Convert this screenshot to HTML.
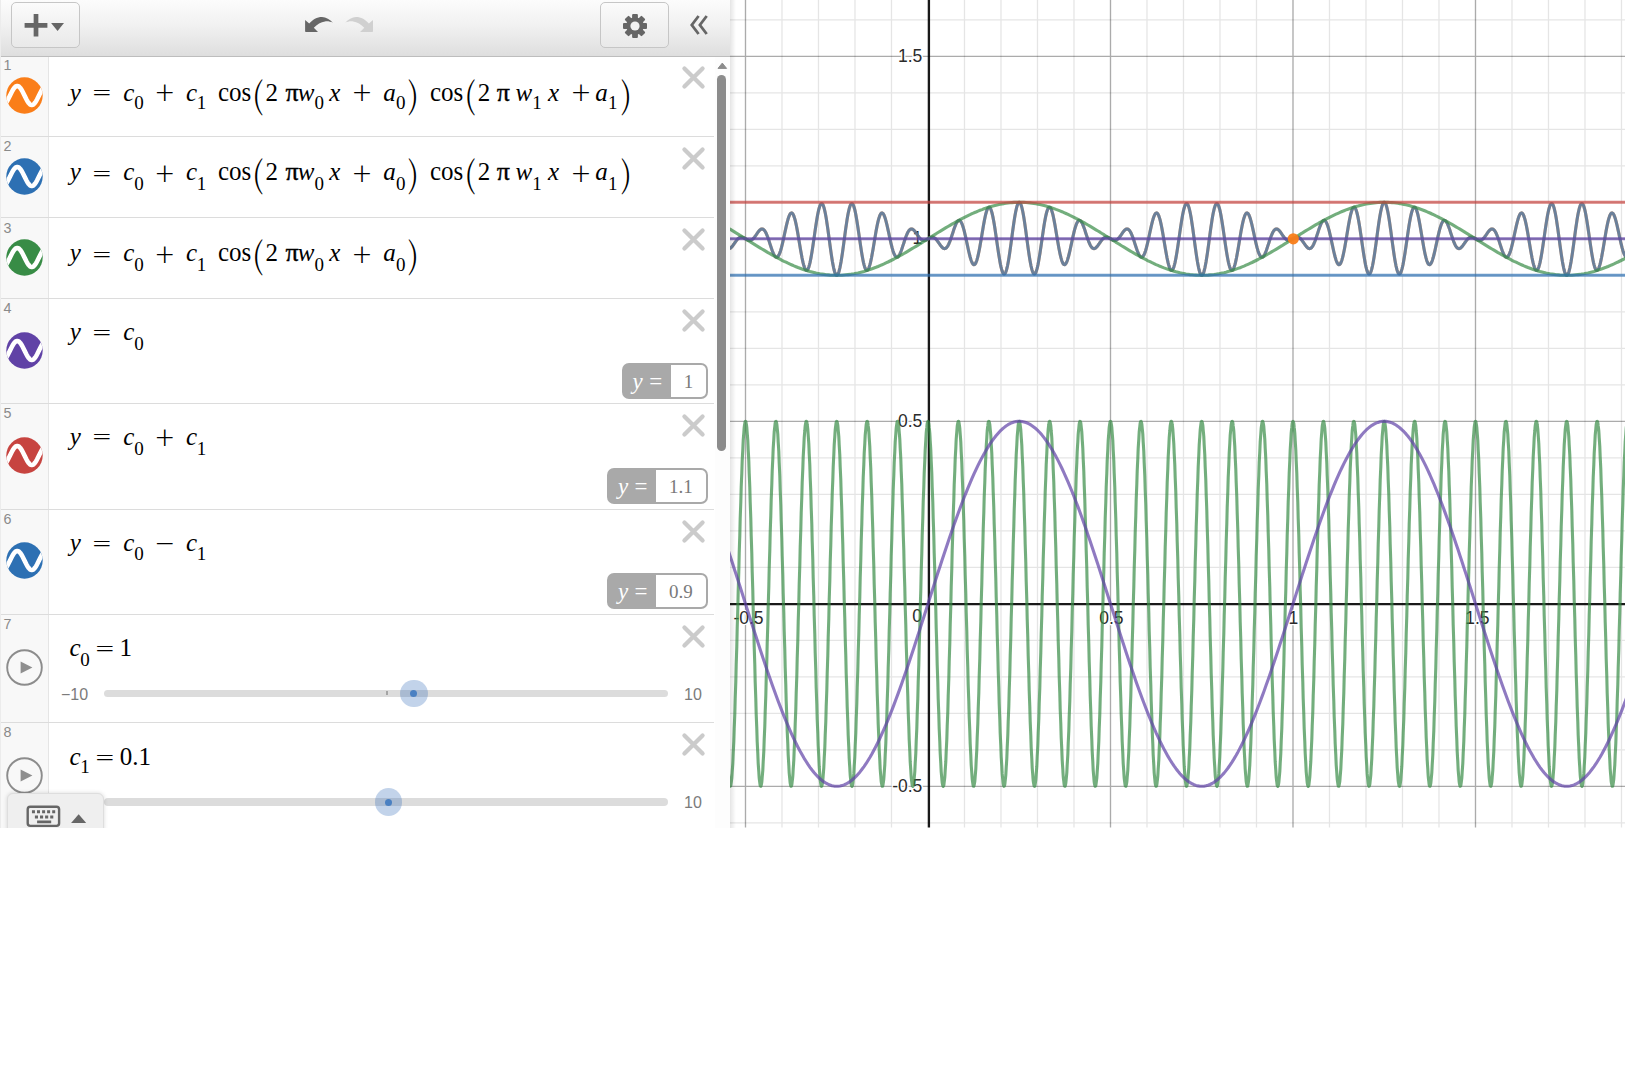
<!DOCTYPE html>
<html><head><meta charset="utf-8"><title>Desmos Graph</title>
<style>
html,body{margin:0;padding:0;background:#fff;}
body{width:1625px;height:1079px;position:relative;overflow:hidden;font-family:"Liberation Sans",sans-serif;}
#app{position:absolute;left:0;top:0;width:1625px;height:827.5px;overflow:hidden;background:#fff;}
#panel{position:absolute;left:0;top:0;width:730px;height:827.5px;background:#ececec;overflow:hidden;}
#hdr{position:absolute;left:1px;top:0;width:729px;height:56.2px;background:linear-gradient(#fcfcfc,#f1f1f1 45%,#dedede);border-bottom:1.4px solid #bdbdbd;z-index:3;}
.btn{position:absolute;top:2.4px;height:45.2px;border:1px solid #c6c6c6;border-radius:5px;background:linear-gradient(#fbfbfb,#e9e9e9);box-sizing:border-box;}
#list{position:absolute;left:1px;top:56px;width:714.2px;background:#fff;height:772px;}
.row{position:absolute;left:0;width:713px;border-bottom:1.2px solid #dcdcdc;box-sizing:border-box;background:#fff;}
.tab{position:absolute;left:0;top:0;bottom:0;width:47px;background:#f8f8f8;border-right:1px solid #e5e5e5;}
.num{position:absolute;left:2.6px;top:2.2px;font-size:14.3px;color:#8a8a8a;line-height:14px;}
.ico{position:absolute;left:4.5px;width:37px;height:37px;}
.x{position:absolute;left:680.15px;width:25px;height:25px;}
.math{position:absolute;left:0;top:0;overflow:visible;pointer-events:none;}
.math text{font-family:"Liberation Serif",serif;font-size:25px;fill:#000;}
.math .v{font-style:italic;}
.math .pi{font-size:26px;stroke:#000;stroke-width:0.4px;}
.math .par{font-family:"Noto Serif CJK SC","Liberation Serif",serif;font-size:35px;font-weight:300;}
.math .sb{font-size:19px;}
.math .op{font-family:"Noto Serif CJK SC","Liberation Serif",serif;font-size:31px;}
.math .eq{font-size:22px;}
.badge{position:absolute;height:35.8px;border-radius:7px;background:#a9a9a9;box-sizing:border-box;}
.badge .lbl{position:absolute;left:0;top:0;height:35.8px;color:#fff;font-family:"Liberation Serif",serif;font-size:23px;line-height:37.5px;white-space:nowrap;}
.badge .val{position:absolute;top:2px;right:2px;bottom:2px;background:#fff;border-radius:0 5px 5px 0;color:#7a7a7a;font-family:"Liberation Serif",serif;font-size:19px;line-height:33px;text-align:center;}
.sl{position:absolute;font-size:16px;color:#7b7b7b;line-height:18px;}
.track{position:absolute;left:103px;width:563.5px;height:7.7px;border-radius:4px;background:#dcdcdc;}
.thumb{position:absolute;width:27.4px;height:27.4px;border-radius:50%;background:rgba(52,108,184,0.3);}
.thumb:after{content:"";position:absolute;left:10.2px;top:10.2px;width:7px;height:7px;border-radius:50%;background:#4a80c2;}
#sbar{position:absolute;left:715.2px;top:56.7px;width:14.8px;height:772px;background:#fdfdfd;}
#graphwrap{position:absolute;left:730px;top:0;width:895px;height:827.5px;overflow:hidden;background:#fff;}
#graphwrap .shadow{position:absolute;left:0;top:0;width:6px;height:100%;background:linear-gradient(90deg,rgba(0,0,0,0.10),rgba(0,0,0,0));}
.graph{position:absolute;left:0;top:0;}
.al{font-family:"Liberation Sans",sans-serif;font-size:17.5px;fill:#2b2b2b;stroke:#fff;stroke-width:2.6px;paint-order:stroke;stroke-linejoin:round;}
#kbd{position:absolute;left:6.8px;top:792.7px;width:97px;height:40px;background:#efefef;border:1px solid #dedede;border-radius:6px 6px 0 0;box-shadow:0 0 4px rgba(0,0,0,0.15);box-sizing:border-box;}
</style></head><body>
<div id="app">
<div id="graphwrap">
<svg class="graph" width="895" height="827.5" viewBox="0 0 895 827.5">
<path d="M52.00 0V827.5M88.50 0V827.5M125.00 0V827.5M161.50 0V827.5M234.50 0V827.5M271.00 0V827.5M307.50 0V827.5M344.00 0V827.5M417.00 0V827.5M453.50 0V827.5M490.00 0V827.5M526.50 0V827.5M599.50 0V827.5M636.00 0V827.5M672.50 0V827.5M709.00 0V827.5M782.00 0V827.5M818.50 0V827.5M855.00 0V827.5M891.50 0V827.5M0 822.80H895M0 749.80H895M0 713.30H895M0 676.80H895M0 640.30H895M0 567.30H895M0 530.80H895M0 494.30H895M0 457.80H895M0 384.80H895M0 348.30H895M0 311.80H895M0 275.30H895M0 202.30H895M0 165.80H895M0 129.30H895M0 92.80H895M0 19.80H895" stroke="#000" stroke-opacity="0.1" stroke-width="1.3" fill="none"/>
<path d="M15.50 0V827.5M380.50 0V827.5M563.00 0V827.5M745.50 0V827.5M0 786.30H895M0 421.30H895M0 238.80H895M0 56.30H895" stroke="#000" stroke-opacity="0.33" stroke-width="1.35" fill="none"/>
<path d="M198.90 0V827.5M0 604.10H895" stroke="#000" stroke-opacity="0.9" stroke-width="2.35" fill="none"/>
<text x="18.5" y="624.3" text-anchor="middle" class="al">-0.5</text>
<text x="187.0" y="622.0" text-anchor="middle" class="al">0</text>
<text x="381.4" y="624.3" text-anchor="middle" class="al">0.5</text>
<text x="563.3" y="624.3" text-anchor="middle" class="al">1</text>
<text x="747.4" y="624.3" text-anchor="middle" class="al">1.5</text>
<text x="192.3" y="61.7" text-anchor="end" class="al">1.5</text>
<text x="192.3" y="244.2" text-anchor="end" class="al">1</text>
<text x="192.3" y="426.7" text-anchor="end" class="al">0.5</text>
<text x="192.3" y="791.7" text-anchor="end" class="al">-0.5</text>
<path d="M-4.0 246.4 L-3.5 247.1 L-3.0 247.7 L-2.5 248.1 L-2.0 248.4 L-1.5 248.6 L-1.0 248.7 L-0.5 248.6 L0.0 248.4 L0.5 248.1 L1.0 247.7 L1.5 247.2 L2.0 246.7 L2.5 246.1 L3.0 245.4 L3.5 244.7 L4.0 244.0 L4.5 243.2 L5.0 242.5 L5.5 241.8 L6.0 241.1 L6.5 240.4 L7.0 239.8 L7.5 239.2 L8.0 238.7 L8.5 238.3 L9.0 237.9 L9.5 237.6 L10.0 237.3 L10.5 237.2 L11.0 237.1 L11.5 237.1 L12.0 237.2 L12.5 237.3 L13.0 237.4 L13.5 237.6 L14.0 237.9 L14.5 238.2 L15.0 238.5 L15.5 238.8 L16.0 239.1 L16.5 239.4 L17.0 239.7 L17.5 240.0 L18.0 240.2 L18.5 240.3 L19.0 240.4 L19.5 240.5 L20.0 240.5 L20.5 240.4 L21.0 240.3 L21.5 240.0 L22.0 239.7 L22.5 239.3 L23.0 238.9 L23.5 238.4 L24.0 237.8 L24.5 237.2 L25.0 236.5 L25.5 235.8 L26.0 235.1 L26.5 234.4 L27.0 233.6 L27.5 232.9 L28.0 232.2 L28.5 231.5 L29.0 230.9 L29.5 230.4 L30.0 229.9 L30.5 229.5 L31.0 229.2 L31.5 229.0 L32.0 228.9 L32.5 229.0 L33.0 229.2 L33.5 229.5 L34.0 229.9 L34.5 230.5 L35.0 231.2 L35.5 232.0 L36.0 233.0 L36.5 234.1 L37.0 235.3 L37.5 236.5 L38.0 237.9 L38.5 239.3 L39.0 240.8 L39.5 242.4 L40.0 243.9 L40.5 245.4 L41.0 247.0 L41.5 248.5 L42.0 249.9 L42.5 251.3 L43.0 252.5 L43.5 253.7 L44.0 254.7 L44.5 255.5 L45.0 256.2 L45.5 256.8 L46.0 257.1 L46.5 257.2 L47.0 257.2 L47.5 256.9 L48.0 256.4 L48.5 255.7 L49.0 254.8 L49.5 253.7 L50.0 252.4 L50.5 250.9 L51.0 249.2 L51.5 247.4 L52.0 245.4 L52.5 243.3 L53.0 241.2 L53.5 238.9 L54.0 236.6 L54.5 234.2 L55.0 231.9 L55.5 229.6 L56.0 227.3 L56.5 225.1 L57.0 223.1 L57.5 221.1 L58.0 219.3 L58.5 217.7 L59.0 216.3 L59.5 215.1 L60.0 214.2 L60.5 213.5 L61.0 213.1 L61.5 212.9 L62.0 213.0 L62.5 213.4 L63.0 214.1 L63.5 215.1 L64.0 216.4 L64.5 217.9 L65.0 219.7 L65.5 221.7 L66.0 223.9 L66.5 226.3 L67.0 228.9 L67.5 231.6 L68.0 234.5 L68.5 237.4 L69.0 240.4 L69.5 243.4 L70.0 246.4 L70.5 249.4 L71.0 252.3 L71.5 255.0 L72.0 257.7 L72.5 260.1 L73.0 262.4 L73.5 264.4 L74.0 266.1 L74.5 267.6 L75.0 268.8 L75.5 269.7 L76.0 270.2 L76.5 270.4 L77.0 270.3 L77.5 269.8 L78.0 269.0 L78.5 267.9 L79.0 266.4 L79.5 264.6 L80.0 262.6 L80.5 260.2 L81.0 257.6 L81.5 254.8 L82.0 251.8 L82.5 248.6 L83.0 245.2 L83.5 241.8 L84.0 238.4 L84.5 234.9 L85.0 231.4 L85.5 228.0 L86.0 224.7 L86.5 221.5 L87.0 218.5 L87.5 215.6 L88.0 213.0 L88.5 210.7 L89.0 208.7 L89.5 207.0 L90.0 205.6 L90.5 204.5 L91.0 203.9 L91.5 203.6 L92.0 203.6 L92.5 204.1 L93.0 204.9 L93.5 206.1 L94.0 207.7 L94.5 209.6 L95.0 211.8 L95.5 214.3 L96.0 217.1 L96.5 220.1 L97.0 223.4 L97.5 226.8 L98.0 230.3 L98.5 234.0 L99.0 237.7 L99.5 241.4 L100.0 245.2 L100.5 248.8 L101.0 252.4 L101.5 255.8 L102.0 259.0 L102.5 262.1 L103.0 264.8 L103.5 267.3 L104.0 269.5 L104.5 271.4 L105.0 272.9 L105.5 274.1 L106.0 274.9 L106.5 275.3 L107.0 275.3 L107.5 274.9 L108.0 274.1 L108.5 272.9 L109.0 271.4 L109.5 269.5 L110.0 267.3 L110.5 264.8 L111.0 262.1 L111.5 259.0 L112.0 255.8 L112.5 252.4 L113.0 248.8 L113.5 245.2 L114.0 241.4 L114.5 237.7 L115.0 234.0 L115.5 230.3 L116.0 226.8 L116.5 223.4 L117.0 220.1 L117.5 217.1 L118.0 214.3 L118.5 211.8 L119.0 209.6 L119.5 207.7 L120.0 206.1 L120.5 204.9 L121.0 204.1 L121.5 203.6 L122.0 203.6 L122.5 203.9 L123.0 204.5 L123.5 205.6 L124.0 207.0 L124.5 208.7 L125.0 210.7 L125.5 213.0 L126.0 215.6 L126.5 218.5 L127.0 221.5 L127.5 224.7 L128.0 228.0 L128.5 231.4 L129.0 234.9 L129.5 238.4 L130.0 241.8 L130.5 245.2 L131.0 248.6 L131.5 251.8 L132.0 254.8 L132.5 257.6 L133.0 260.2 L133.5 262.6 L134.0 264.6 L134.5 266.4 L135.0 267.9 L135.5 269.0 L136.0 269.8 L136.5 270.3 L137.0 270.4 L137.5 270.2 L138.0 269.7 L138.5 268.8 L139.0 267.6 L139.5 266.1 L140.0 264.4 L140.5 262.4 L141.0 260.1 L141.5 257.7 L142.0 255.0 L142.5 252.3 L143.0 249.4 L143.5 246.4 L144.0 243.4 L144.5 240.4 L145.0 237.4 L145.5 234.5 L146.0 231.6 L146.5 228.9 L147.0 226.3 L147.5 223.9 L148.0 221.7 L148.5 219.7 L149.0 217.9 L149.5 216.4 L150.0 215.1 L150.5 214.1 L151.0 213.4 L151.5 213.0 L152.0 212.9 L152.5 213.1 L153.0 213.5 L153.5 214.2 L154.0 215.1 L154.5 216.3 L155.0 217.7 L155.5 219.3 L156.0 221.1 L156.5 223.1 L157.0 225.1 L157.5 227.3 L158.0 229.6 L158.5 231.9 L159.0 234.2 L159.5 236.6 L160.0 238.9 L160.5 241.2 L161.0 243.3 L161.5 245.4 L162.0 247.4 L162.5 249.2 L163.0 250.9 L163.5 252.4 L164.0 253.7 L164.5 254.8 L165.0 255.7 L165.5 256.4 L166.0 256.9 L166.5 257.2 L167.0 257.2 L167.5 257.1 L168.0 256.8 L168.5 256.2 L169.0 255.5 L169.5 254.7 L170.0 253.7 L170.5 252.5 L171.0 251.3 L171.5 249.9 L172.0 248.5 L172.5 247.0 L173.0 245.4 L173.5 243.9 L174.0 242.4 L174.5 240.8 L175.0 239.3 L175.5 237.9 L176.0 236.5 L176.5 235.3 L177.0 234.1 L177.5 233.0 L178.0 232.0 L178.5 231.2 L179.0 230.5 L179.5 229.9 L180.0 229.5 L180.5 229.2 L181.0 229.0 L181.5 228.9 L182.0 229.0 L182.5 229.2 L183.0 229.5 L183.5 229.9 L184.0 230.4 L184.5 230.9 L185.0 231.5 L185.5 232.2 L186.0 232.9 L186.5 233.6 L187.0 234.4 L187.5 235.1 L188.0 235.8 L188.5 236.5 L189.0 237.2 L189.5 237.8 L190.0 238.4 L190.5 238.9 L191.0 239.3 L191.5 239.7 L192.0 240.0 L192.5 240.3 L193.0 240.4 L193.5 240.5 L194.0 240.5 L194.5 240.4 L195.0 240.3 L195.5 240.2 L196.0 240.0 L196.5 239.7 L197.0 239.4 L197.5 239.1 L198.0 238.8 L198.5 238.5 L199.0 238.2 L199.5 237.9 L200.0 237.6 L200.5 237.4 L201.0 237.3 L201.5 237.2 L202.0 237.1 L202.5 237.1 L203.0 237.2 L203.5 237.3 L204.0 237.6 L204.5 237.9 L205.0 238.3 L205.5 238.7 L206.0 239.2 L206.5 239.8 L207.0 240.4 L207.5 241.1 L208.0 241.8 L208.5 242.5 L209.0 243.2 L209.5 244.0 L210.0 244.7 L210.5 245.4 L211.0 246.1 L211.5 246.7 L212.0 247.2 L212.5 247.7 L213.0 248.1 L213.5 248.4 L214.0 248.6 L214.5 248.7 L215.0 248.6 L215.5 248.4 L216.0 248.1 L216.5 247.7 L217.0 247.1 L217.5 246.4 L218.0 245.6 L218.5 244.6 L219.0 243.5 L219.5 242.3 L220.0 241.1 L220.5 239.7 L221.0 238.3 L221.5 236.8 L222.0 235.2 L222.5 233.7 L223.0 232.2 L223.5 230.6 L224.0 229.1 L224.5 227.7 L225.0 226.3 L225.5 225.1 L226.0 223.9 L226.5 222.9 L227.0 222.1 L227.5 221.4 L228.0 220.8 L228.5 220.5 L229.0 220.4 L229.5 220.4 L230.0 220.7 L230.5 221.2 L231.0 221.9 L231.5 222.8 L232.0 223.9 L232.5 225.2 L233.0 226.7 L233.5 228.4 L234.0 230.2 L234.5 232.2 L235.0 234.3 L235.5 236.4 L236.0 238.7 L236.5 241.0 L237.0 243.4 L237.5 245.7 L238.0 248.0 L238.5 250.3 L239.0 252.5 L239.5 254.5 L240.0 256.5 L240.5 258.3 L241.0 259.9 L241.5 261.3 L242.0 262.5 L242.5 263.4 L243.0 264.1 L243.5 264.5 L244.0 264.7 L244.5 264.6 L245.0 264.2 L245.5 263.5 L246.0 262.5 L246.5 261.2 L247.0 259.7 L247.5 257.9 L248.0 255.9 L248.5 253.7 L249.0 251.3 L249.5 248.7 L250.0 246.0 L250.5 243.1 L251.0 240.2 L251.5 237.2 L252.0 234.2 L252.5 231.2 L253.0 228.2 L253.5 225.3 L254.0 222.6 L254.5 219.9 L255.0 217.5 L255.5 215.2 L256.0 213.2 L256.5 211.5 L257.0 210.0 L257.5 208.8 L258.0 207.9 L258.5 207.4 L259.0 207.2 L259.5 207.3 L260.0 207.8 L260.5 208.6 L261.0 209.7 L261.5 211.2 L262.0 213.0 L262.5 215.0 L263.0 217.4 L263.5 220.0 L264.0 222.8 L264.5 225.8 L265.0 229.0 L265.5 232.4 L266.0 235.8 L266.5 239.2 L267.0 242.7 L267.5 246.2 L268.0 249.6 L268.5 252.9 L269.0 256.1 L269.5 259.1 L270.0 262.0 L270.5 264.6 L271.0 266.9 L271.5 268.9 L272.0 270.6 L272.5 272.0 L273.0 273.1 L273.5 273.7 L274.0 274.0 L274.5 274.0 L275.0 273.5 L275.5 272.7 L276.0 271.5 L276.5 269.9 L277.0 268.0 L277.5 265.8 L278.0 263.3 L278.5 260.5 L279.0 257.5 L279.5 254.2 L280.0 250.8 L280.5 247.3 L281.0 243.6 L281.5 239.9 L282.0 236.2 L282.5 232.4 L283.0 228.8 L283.5 225.2 L284.0 221.8 L284.5 218.6 L285.0 215.5 L285.5 212.8 L286.0 210.3 L286.5 208.1 L287.0 206.2 L287.5 204.7 L288.0 203.5 L288.5 202.7 L289.0 202.3 L289.5 202.3 L290.0 202.7 L290.5 203.5 L291.0 204.7 L291.5 206.2 L292.0 208.1 L292.5 210.3 L293.0 212.8 L293.5 215.5 L294.0 218.6 L294.5 221.8 L295.0 225.2 L295.5 228.8 L296.0 232.4 L296.5 236.2 L297.0 239.9 L297.5 243.6 L298.0 247.3 L298.5 250.8 L299.0 254.2 L299.5 257.5 L300.0 260.5 L300.5 263.3 L301.0 265.8 L301.5 268.0 L302.0 269.9 L302.5 271.5 L303.0 272.7 L303.5 273.5 L304.0 274.0 L304.5 274.0 L305.0 273.7 L305.5 273.1 L306.0 272.0 L306.5 270.6 L307.0 268.9 L307.5 266.9 L308.0 264.6 L308.5 262.0 L309.0 259.1 L309.5 256.1 L310.0 252.9 L310.5 249.6 L311.0 246.2 L311.5 242.7 L312.0 239.2 L312.5 235.8 L313.0 232.4 L313.5 229.0 L314.0 225.8 L314.5 222.8 L315.0 220.0 L315.5 217.4 L316.0 215.0 L316.5 213.0 L317.0 211.2 L317.5 209.7 L318.0 208.6 L318.5 207.8 L319.0 207.3 L319.5 207.2 L320.0 207.4 L320.5 207.9 L321.0 208.8 L321.5 210.0 L322.0 211.5 L322.5 213.2 L323.0 215.2 L323.5 217.5 L324.0 219.9 L324.5 222.6 L325.0 225.3 L325.5 228.2 L326.0 231.2 L326.5 234.2 L327.0 237.2 L327.5 240.2 L328.0 243.1 L328.5 246.0 L329.0 248.7 L329.5 251.3 L330.0 253.7 L330.5 255.9 L331.0 257.9 L331.5 259.7 L332.0 261.2 L332.5 262.5 L333.0 263.5 L333.5 264.2 L334.0 264.6 L334.5 264.7 L335.0 264.5 L335.5 264.1 L336.0 263.4 L336.5 262.5 L337.0 261.3 L337.5 259.9 L338.0 258.3 L338.5 256.5 L339.0 254.5 L339.5 252.5 L340.0 250.3 L340.5 248.0 L341.0 245.7 L341.5 243.4 L342.0 241.0 L342.5 238.7 L343.0 236.4 L343.5 234.3 L344.0 232.2 L344.5 230.2 L345.0 228.4 L345.5 226.7 L346.0 225.2 L346.5 223.9 L347.0 222.8 L347.5 221.9 L348.0 221.2 L348.5 220.7 L349.0 220.4 L349.5 220.4 L350.0 220.5 L350.5 220.8 L351.0 221.4 L351.5 222.1 L352.0 222.9 L352.5 223.9 L353.0 225.1 L353.5 226.3 L354.0 227.7 L354.5 229.1 L355.0 230.6 L355.5 232.2 L356.0 233.7 L356.5 235.2 L357.0 236.8 L357.5 238.3 L358.0 239.7 L358.5 241.1 L359.0 242.3 L359.5 243.5 L360.0 244.6 L360.5 245.6 L361.0 246.4 L361.5 247.1 L362.0 247.7 L362.5 248.1 L363.0 248.4 L363.5 248.6 L364.0 248.7 L364.5 248.6 L365.0 248.4 L365.5 248.1 L366.0 247.7 L366.5 247.2 L367.0 246.7 L367.5 246.1 L368.0 245.4 L368.5 244.7 L369.0 244.0 L369.5 243.2 L370.0 242.5 L370.5 241.8 L371.0 241.1 L371.5 240.4 L372.0 239.8 L372.5 239.2 L373.0 238.7 L373.5 238.3 L374.0 237.9 L374.5 237.6 L375.0 237.3 L375.5 237.2 L376.0 237.1 L376.5 237.1 L377.0 237.2 L377.5 237.3 L378.0 237.4 L378.5 237.6 L379.0 237.9 L379.5 238.2 L380.0 238.5 L380.5 238.8 L381.0 239.1 L381.5 239.4 L382.0 239.7 L382.5 240.0 L383.0 240.2 L383.5 240.3 L384.0 240.4 L384.5 240.5 L385.0 240.5 L385.5 240.4 L386.0 240.3 L386.5 240.0 L387.0 239.7 L387.5 239.3 L388.0 238.9 L388.5 238.4 L389.0 237.8 L389.5 237.2 L390.0 236.5 L390.5 235.8 L391.0 235.1 L391.5 234.4 L392.0 233.6 L392.5 232.9 L393.0 232.2 L393.5 231.5 L394.0 230.9 L394.5 230.4 L395.0 229.9 L395.5 229.5 L396.0 229.2 L396.5 229.0 L397.0 228.9 L397.5 229.0 L398.0 229.2 L398.5 229.5 L399.0 229.9 L399.5 230.5 L400.0 231.2 L400.5 232.0 L401.0 233.0 L401.5 234.1 L402.0 235.3 L402.5 236.5 L403.0 237.9 L403.5 239.3 L404.0 240.8 L404.5 242.4 L405.0 243.9 L405.5 245.4 L406.0 247.0 L406.5 248.5 L407.0 249.9 L407.5 251.3 L408.0 252.5 L408.5 253.7 L409.0 254.7 L409.5 255.5 L410.0 256.2 L410.5 256.8 L411.0 257.1 L411.5 257.2 L412.0 257.2 L412.5 256.9 L413.0 256.4 L413.5 255.7 L414.0 254.8 L414.5 253.7 L415.0 252.4 L415.5 250.9 L416.0 249.2 L416.5 247.4 L417.0 245.4 L417.5 243.3 L418.0 241.2 L418.5 238.9 L419.0 236.6 L419.5 234.2 L420.0 231.9 L420.5 229.6 L421.0 227.3 L421.5 225.1 L422.0 223.1 L422.5 221.1 L423.0 219.3 L423.5 217.7 L424.0 216.3 L424.5 215.1 L425.0 214.2 L425.5 213.5 L426.0 213.1 L426.5 212.9 L427.0 213.0 L427.5 213.4 L428.0 214.1 L428.5 215.1 L429.0 216.4 L429.5 217.9 L430.0 219.7 L430.5 221.7 L431.0 223.9 L431.5 226.3 L432.0 228.9 L432.5 231.6 L433.0 234.5 L433.5 237.4 L434.0 240.4 L434.5 243.4 L435.0 246.4 L435.5 249.4 L436.0 252.3 L436.5 255.0 L437.0 257.7 L437.5 260.1 L438.0 262.4 L438.5 264.4 L439.0 266.1 L439.5 267.6 L440.0 268.8 L440.5 269.7 L441.0 270.2 L441.5 270.4 L442.0 270.3 L442.5 269.8 L443.0 269.0 L443.5 267.9 L444.0 266.4 L444.5 264.6 L445.0 262.6 L445.5 260.2 L446.0 257.6 L446.5 254.8 L447.0 251.8 L447.5 248.6 L448.0 245.2 L448.5 241.8 L449.0 238.4 L449.5 234.9 L450.0 231.4 L450.5 228.0 L451.0 224.7 L451.5 221.5 L452.0 218.5 L452.5 215.6 L453.0 213.0 L453.5 210.7 L454.0 208.7 L454.5 207.0 L455.0 205.6 L455.5 204.5 L456.0 203.9 L456.5 203.6 L457.0 203.6 L457.5 204.1 L458.0 204.9 L458.5 206.1 L459.0 207.7 L459.5 209.6 L460.0 211.8 L460.5 214.3 L461.0 217.1 L461.5 220.1 L462.0 223.4 L462.5 226.8 L463.0 230.3 L463.5 234.0 L464.0 237.7 L464.5 241.4 L465.0 245.2 L465.5 248.8 L466.0 252.4 L466.5 255.8 L467.0 259.0 L467.5 262.1 L468.0 264.8 L468.5 267.3 L469.0 269.5 L469.5 271.4 L470.0 272.9 L470.5 274.1 L471.0 274.9 L471.5 275.3 L472.0 275.3 L472.5 274.9 L473.0 274.1 L473.5 272.9 L474.0 271.4 L474.5 269.5 L475.0 267.3 L475.5 264.8 L476.0 262.1 L476.5 259.0 L477.0 255.8 L477.5 252.4 L478.0 248.8 L478.5 245.2 L479.0 241.4 L479.5 237.7 L480.0 234.0 L480.5 230.3 L481.0 226.8 L481.5 223.4 L482.0 220.1 L482.5 217.1 L483.0 214.3 L483.5 211.8 L484.0 209.6 L484.5 207.7 L485.0 206.1 L485.5 204.9 L486.0 204.1 L486.5 203.6 L487.0 203.6 L487.5 203.9 L488.0 204.5 L488.5 205.6 L489.0 207.0 L489.5 208.7 L490.0 210.7 L490.5 213.0 L491.0 215.6 L491.5 218.5 L492.0 221.5 L492.5 224.7 L493.0 228.0 L493.5 231.4 L494.0 234.9 L494.5 238.4 L495.0 241.8 L495.5 245.2 L496.0 248.6 L496.5 251.8 L497.0 254.8 L497.5 257.6 L498.0 260.2 L498.5 262.6 L499.0 264.6 L499.5 266.4 L500.0 267.9 L500.5 269.0 L501.0 269.8 L501.5 270.3 L502.0 270.4 L502.5 270.2 L503.0 269.7 L503.5 268.8 L504.0 267.6 L504.5 266.1 L505.0 264.4 L505.5 262.4 L506.0 260.1 L506.5 257.7 L507.0 255.0 L507.5 252.3 L508.0 249.4 L508.5 246.4 L509.0 243.4 L509.5 240.4 L510.0 237.4 L510.5 234.5 L511.0 231.6 L511.5 228.9 L512.0 226.3 L512.5 223.9 L513.0 221.7 L513.5 219.7 L514.0 217.9 L514.5 216.4 L515.0 215.1 L515.5 214.1 L516.0 213.4 L516.5 213.0 L517.0 212.9 L517.5 213.1 L518.0 213.5 L518.5 214.2 L519.0 215.1 L519.5 216.3 L520.0 217.7 L520.5 219.3 L521.0 221.1 L521.5 223.1 L522.0 225.1 L522.5 227.3 L523.0 229.6 L523.5 231.9 L524.0 234.2 L524.5 236.6 L525.0 238.9 L525.5 241.2 L526.0 243.3 L526.5 245.4 L527.0 247.4 L527.5 249.2 L528.0 250.9 L528.5 252.4 L529.0 253.7 L529.5 254.8 L530.0 255.7 L530.5 256.4 L531.0 256.9 L531.5 257.2 L532.0 257.2 L532.5 257.1 L533.0 256.8 L533.5 256.2 L534.0 255.5 L534.5 254.7 L535.0 253.7 L535.5 252.5 L536.0 251.3 L536.5 249.9 L537.0 248.5 L537.5 247.0 L538.0 245.4 L538.5 243.9 L539.0 242.4 L539.5 240.8 L540.0 239.3 L540.5 237.9 L541.0 236.5 L541.5 235.3 L542.0 234.1 L542.5 233.0 L543.0 232.0 L543.5 231.2 L544.0 230.5 L544.5 229.9 L545.0 229.5 L545.5 229.2 L546.0 229.0 L546.5 228.9 L547.0 229.0 L547.5 229.2 L548.0 229.5 L548.5 229.9 L549.0 230.4 L549.5 230.9 L550.0 231.5 L550.5 232.2 L551.0 232.9 L551.5 233.6 L552.0 234.4 L552.5 235.1 L553.0 235.8 L553.5 236.5 L554.0 237.2 L554.5 237.8 L555.0 238.4 L555.5 238.9 L556.0 239.3 L556.5 239.7 L557.0 240.0 L557.5 240.3 L558.0 240.4 L558.5 240.5 L559.0 240.5 L559.5 240.4 L560.0 240.3 L560.5 240.2 L561.0 240.0 L561.5 239.7 L562.0 239.4 L562.5 239.1 L563.0 238.8 L563.5 238.5 L564.0 238.2 L564.5 237.9 L565.0 237.6 L565.5 237.4 L566.0 237.3 L566.5 237.2 L567.0 237.1 L567.5 237.1 L568.0 237.2 L568.5 237.3 L569.0 237.6 L569.5 237.9 L570.0 238.3 L570.5 238.7 L571.0 239.2 L571.5 239.8 L572.0 240.4 L572.5 241.1 L573.0 241.8 L573.5 242.5 L574.0 243.2 L574.5 244.0 L575.0 244.7 L575.5 245.4 L576.0 246.1 L576.5 246.7 L577.0 247.2 L577.5 247.7 L578.0 248.1 L578.5 248.4 L579.0 248.6 L579.5 248.7 L580.0 248.6 L580.5 248.4 L581.0 248.1 L581.5 247.7 L582.0 247.1 L582.5 246.4 L583.0 245.6 L583.5 244.6 L584.0 243.5 L584.5 242.3 L585.0 241.1 L585.5 239.7 L586.0 238.3 L586.5 236.8 L587.0 235.2 L587.5 233.7 L588.0 232.2 L588.5 230.6 L589.0 229.1 L589.5 227.7 L590.0 226.3 L590.5 225.1 L591.0 223.9 L591.5 222.9 L592.0 222.1 L592.5 221.4 L593.0 220.8 L593.5 220.5 L594.0 220.4 L594.5 220.4 L595.0 220.7 L595.5 221.2 L596.0 221.9 L596.5 222.8 L597.0 223.9 L597.5 225.2 L598.0 226.7 L598.5 228.4 L599.0 230.2 L599.5 232.2 L600.0 234.3 L600.5 236.4 L601.0 238.7 L601.5 241.0 L602.0 243.4 L602.5 245.7 L603.0 248.0 L603.5 250.3 L604.0 252.5 L604.5 254.5 L605.0 256.5 L605.5 258.3 L606.0 259.9 L606.5 261.3 L607.0 262.5 L607.5 263.4 L608.0 264.1 L608.5 264.5 L609.0 264.7 L609.5 264.6 L610.0 264.2 L610.5 263.5 L611.0 262.5 L611.5 261.2 L612.0 259.7 L612.5 257.9 L613.0 255.9 L613.5 253.7 L614.0 251.3 L614.5 248.7 L615.0 246.0 L615.5 243.1 L616.0 240.2 L616.5 237.2 L617.0 234.2 L617.5 231.2 L618.0 228.2 L618.5 225.3 L619.0 222.6 L619.5 219.9 L620.0 217.5 L620.5 215.2 L621.0 213.2 L621.5 211.5 L622.0 210.0 L622.5 208.8 L623.0 207.9 L623.5 207.4 L624.0 207.2 L624.5 207.3 L625.0 207.8 L625.5 208.6 L626.0 209.7 L626.5 211.2 L627.0 213.0 L627.5 215.0 L628.0 217.4 L628.5 220.0 L629.0 222.8 L629.5 225.8 L630.0 229.0 L630.5 232.4 L631.0 235.8 L631.5 239.2 L632.0 242.7 L632.5 246.2 L633.0 249.6 L633.5 252.9 L634.0 256.1 L634.5 259.1 L635.0 262.0 L635.5 264.6 L636.0 266.9 L636.5 268.9 L637.0 270.6 L637.5 272.0 L638.0 273.1 L638.5 273.7 L639.0 274.0 L639.5 274.0 L640.0 273.5 L640.5 272.7 L641.0 271.5 L641.5 269.9 L642.0 268.0 L642.5 265.8 L643.0 263.3 L643.5 260.5 L644.0 257.5 L644.5 254.2 L645.0 250.8 L645.5 247.3 L646.0 243.6 L646.5 239.9 L647.0 236.2 L647.5 232.4 L648.0 228.8 L648.5 225.2 L649.0 221.8 L649.5 218.6 L650.0 215.5 L650.5 212.8 L651.0 210.3 L651.5 208.1 L652.0 206.2 L652.5 204.7 L653.0 203.5 L653.5 202.7 L654.0 202.3 L654.5 202.3 L655.0 202.7 L655.5 203.5 L656.0 204.7 L656.5 206.2 L657.0 208.1 L657.5 210.3 L658.0 212.8 L658.5 215.5 L659.0 218.6 L659.5 221.8 L660.0 225.2 L660.5 228.8 L661.0 232.4 L661.5 236.2 L662.0 239.9 L662.5 243.6 L663.0 247.3 L663.5 250.8 L664.0 254.2 L664.5 257.5 L665.0 260.5 L665.5 263.3 L666.0 265.8 L666.5 268.0 L667.0 269.9 L667.5 271.5 L668.0 272.7 L668.5 273.5 L669.0 274.0 L669.5 274.0 L670.0 273.7 L670.5 273.1 L671.0 272.0 L671.5 270.6 L672.0 268.9 L672.5 266.9 L673.0 264.6 L673.5 262.0 L674.0 259.1 L674.5 256.1 L675.0 252.9 L675.5 249.6 L676.0 246.2 L676.5 242.7 L677.0 239.2 L677.5 235.8 L678.0 232.4 L678.5 229.0 L679.0 225.8 L679.5 222.8 L680.0 220.0 L680.5 217.4 L681.0 215.0 L681.5 213.0 L682.0 211.2 L682.5 209.7 L683.0 208.6 L683.5 207.8 L684.0 207.3 L684.5 207.2 L685.0 207.4 L685.5 207.9 L686.0 208.8 L686.5 210.0 L687.0 211.5 L687.5 213.2 L688.0 215.2 L688.5 217.5 L689.0 219.9 L689.5 222.6 L690.0 225.3 L690.5 228.2 L691.0 231.2 L691.5 234.2 L692.0 237.2 L692.5 240.2 L693.0 243.1 L693.5 246.0 L694.0 248.7 L694.5 251.3 L695.0 253.7 L695.5 255.9 L696.0 257.9 L696.5 259.7 L697.0 261.2 L697.5 262.5 L698.0 263.5 L698.5 264.2 L699.0 264.6 L699.5 264.7 L700.0 264.5 L700.5 264.1 L701.0 263.4 L701.5 262.5 L702.0 261.3 L702.5 259.9 L703.0 258.3 L703.5 256.5 L704.0 254.5 L704.5 252.5 L705.0 250.3 L705.5 248.0 L706.0 245.7 L706.5 243.4 L707.0 241.0 L707.5 238.7 L708.0 236.4 L708.5 234.3 L709.0 232.2 L709.5 230.2 L710.0 228.4 L710.5 226.7 L711.0 225.2 L711.5 223.9 L712.0 222.8 L712.5 221.9 L713.0 221.2 L713.5 220.7 L714.0 220.4 L714.5 220.4 L715.0 220.5 L715.5 220.8 L716.0 221.4 L716.5 222.1 L717.0 222.9 L717.5 223.9 L718.0 225.1 L718.5 226.3 L719.0 227.7 L719.5 229.1 L720.0 230.6 L720.5 232.2 L721.0 233.7 L721.5 235.2 L722.0 236.8 L722.5 238.3 L723.0 239.7 L723.5 241.1 L724.0 242.3 L724.5 243.5 L725.0 244.6 L725.5 245.6 L726.0 246.4 L726.5 247.1 L727.0 247.7 L727.5 248.1 L728.0 248.4 L728.5 248.6 L729.0 248.7 L729.5 248.6 L730.0 248.4 L730.5 248.1 L731.0 247.7 L731.5 247.2 L732.0 246.7 L732.5 246.1 L733.0 245.4 L733.5 244.7 L734.0 244.0 L734.5 243.2 L735.0 242.5 L735.5 241.8 L736.0 241.1 L736.5 240.4 L737.0 239.8 L737.5 239.2 L738.0 238.7 L738.5 238.3 L739.0 237.9 L739.5 237.6 L740.0 237.3 L740.5 237.2 L741.0 237.1 L741.5 237.1 L742.0 237.2 L742.5 237.3 L743.0 237.4 L743.5 237.6 L744.0 237.9 L744.5 238.2 L745.0 238.5 L745.5 238.8 L746.0 239.1 L746.5 239.4 L747.0 239.7 L747.5 240.0 L748.0 240.2 L748.5 240.3 L749.0 240.4 L749.5 240.5 L750.0 240.5 L750.5 240.4 L751.0 240.3 L751.5 240.0 L752.0 239.7 L752.5 239.3 L753.0 238.9 L753.5 238.4 L754.0 237.8 L754.5 237.2 L755.0 236.5 L755.5 235.8 L756.0 235.1 L756.5 234.4 L757.0 233.6 L757.5 232.9 L758.0 232.2 L758.5 231.5 L759.0 230.9 L759.5 230.4 L760.0 229.9 L760.5 229.5 L761.0 229.2 L761.5 229.0 L762.0 228.9 L762.5 229.0 L763.0 229.2 L763.5 229.5 L764.0 229.9 L764.5 230.5 L765.0 231.2 L765.5 232.0 L766.0 233.0 L766.5 234.1 L767.0 235.3 L767.5 236.5 L768.0 237.9 L768.5 239.3 L769.0 240.8 L769.5 242.4 L770.0 243.9 L770.5 245.4 L771.0 247.0 L771.5 248.5 L772.0 249.9 L772.5 251.3 L773.0 252.5 L773.5 253.7 L774.0 254.7 L774.5 255.5 L775.0 256.2 L775.5 256.8 L776.0 257.1 L776.5 257.2 L777.0 257.2 L777.5 256.9 L778.0 256.4 L778.5 255.7 L779.0 254.8 L779.5 253.7 L780.0 252.4 L780.5 250.9 L781.0 249.2 L781.5 247.4 L782.0 245.4 L782.5 243.3 L783.0 241.2 L783.5 238.9 L784.0 236.6 L784.5 234.2 L785.0 231.9 L785.5 229.6 L786.0 227.3 L786.5 225.1 L787.0 223.1 L787.5 221.1 L788.0 219.3 L788.5 217.7 L789.0 216.3 L789.5 215.1 L790.0 214.2 L790.5 213.5 L791.0 213.1 L791.5 212.9 L792.0 213.0 L792.5 213.4 L793.0 214.1 L793.5 215.1 L794.0 216.4 L794.5 217.9 L795.0 219.7 L795.5 221.7 L796.0 223.9 L796.5 226.3 L797.0 228.9 L797.5 231.6 L798.0 234.5 L798.5 237.4 L799.0 240.4 L799.5 243.4 L800.0 246.4 L800.5 249.4 L801.0 252.3 L801.5 255.0 L802.0 257.7 L802.5 260.1 L803.0 262.4 L803.5 264.4 L804.0 266.1 L804.5 267.6 L805.0 268.8 L805.5 269.7 L806.0 270.2 L806.5 270.4 L807.0 270.3 L807.5 269.8 L808.0 269.0 L808.5 267.9 L809.0 266.4 L809.5 264.6 L810.0 262.6 L810.5 260.2 L811.0 257.6 L811.5 254.8 L812.0 251.8 L812.5 248.6 L813.0 245.2 L813.5 241.8 L814.0 238.4 L814.5 234.9 L815.0 231.4 L815.5 228.0 L816.0 224.7 L816.5 221.5 L817.0 218.5 L817.5 215.6 L818.0 213.0 L818.5 210.7 L819.0 208.7 L819.5 207.0 L820.0 205.6 L820.5 204.5 L821.0 203.9 L821.5 203.6 L822.0 203.6 L822.5 204.1 L823.0 204.9 L823.5 206.1 L824.0 207.7 L824.5 209.6 L825.0 211.8 L825.5 214.3 L826.0 217.1 L826.5 220.1 L827.0 223.4 L827.5 226.8 L828.0 230.3 L828.5 234.0 L829.0 237.7 L829.5 241.4 L830.0 245.2 L830.5 248.8 L831.0 252.4 L831.5 255.8 L832.0 259.0 L832.5 262.1 L833.0 264.8 L833.5 267.3 L834.0 269.5 L834.5 271.4 L835.0 272.9 L835.5 274.1 L836.0 274.9 L836.5 275.3 L837.0 275.3 L837.5 274.9 L838.0 274.1 L838.5 272.9 L839.0 271.4 L839.5 269.5 L840.0 267.3 L840.5 264.8 L841.0 262.1 L841.5 259.0 L842.0 255.8 L842.5 252.4 L843.0 248.8 L843.5 245.2 L844.0 241.4 L844.5 237.7 L845.0 234.0 L845.5 230.3 L846.0 226.8 L846.5 223.4 L847.0 220.1 L847.5 217.1 L848.0 214.3 L848.5 211.8 L849.0 209.6 L849.5 207.7 L850.0 206.1 L850.5 204.9 L851.0 204.1 L851.5 203.6 L852.0 203.6 L852.5 203.9 L853.0 204.5 L853.5 205.6 L854.0 207.0 L854.5 208.7 L855.0 210.7 L855.5 213.0 L856.0 215.6 L856.5 218.5 L857.0 221.5 L857.5 224.7 L858.0 228.0 L858.5 231.4 L859.0 234.9 L859.5 238.4 L860.0 241.8 L860.5 245.2 L861.0 248.6 L861.5 251.8 L862.0 254.8 L862.5 257.6 L863.0 260.2 L863.5 262.6 L864.0 264.6 L864.5 266.4 L865.0 267.9 L865.5 269.0 L866.0 269.8 L866.5 270.3 L867.0 270.4 L867.5 270.2 L868.0 269.7 L868.5 268.8 L869.0 267.6 L869.5 266.1 L870.0 264.4 L870.5 262.4 L871.0 260.1 L871.5 257.7 L872.0 255.0 L872.5 252.3 L873.0 249.4 L873.5 246.4 L874.0 243.4 L874.5 240.4 L875.0 237.4 L875.5 234.5 L876.0 231.6 L876.5 228.9 L877.0 226.3 L877.5 223.9 L878.0 221.7 L878.5 219.7 L879.0 217.9 L879.5 216.4 L880.0 215.1 L880.5 214.1 L881.0 213.4 L881.5 213.0 L882.0 212.9 L882.5 213.1 L883.0 213.5 L883.5 214.2 L884.0 215.1 L884.5 216.3 L885.0 217.7 L885.5 219.3 L886.0 221.1 L886.5 223.1 L887.0 225.1 L887.5 227.3 L888.0 229.6 L888.5 231.9 L889.0 234.2 L889.5 236.6 L890.0 238.9 L890.5 241.2 L891.0 243.3 L891.5 245.4 L892.0 247.4 L892.5 249.2 L893.0 250.9 L893.5 252.4 L894.0 253.7 L894.5 254.8 L895.0 255.7 L895.5 256.4 L896.0 256.9 L896.5 257.2 L897.0 257.2 L897.5 257.1 L898.0 256.8 L898.5 256.2 L899.0 255.5" stroke="#fa7e19" stroke-opacity="0.7" stroke-width="3.1" fill="none" stroke-linejoin="round" stroke-linecap="round"/>
<path d="M-4.0 246.4 L-3.5 247.1 L-3.0 247.7 L-2.5 248.1 L-2.0 248.4 L-1.5 248.6 L-1.0 248.7 L-0.5 248.6 L0.0 248.4 L0.5 248.1 L1.0 247.7 L1.5 247.2 L2.0 246.7 L2.5 246.1 L3.0 245.4 L3.5 244.7 L4.0 244.0 L4.5 243.2 L5.0 242.5 L5.5 241.8 L6.0 241.1 L6.5 240.4 L7.0 239.8 L7.5 239.2 L8.0 238.7 L8.5 238.3 L9.0 237.9 L9.5 237.6 L10.0 237.3 L10.5 237.2 L11.0 237.1 L11.5 237.1 L12.0 237.2 L12.5 237.3 L13.0 237.4 L13.5 237.6 L14.0 237.9 L14.5 238.2 L15.0 238.5 L15.5 238.8 L16.0 239.1 L16.5 239.4 L17.0 239.7 L17.5 240.0 L18.0 240.2 L18.5 240.3 L19.0 240.4 L19.5 240.5 L20.0 240.5 L20.5 240.4 L21.0 240.3 L21.5 240.0 L22.0 239.7 L22.5 239.3 L23.0 238.9 L23.5 238.4 L24.0 237.8 L24.5 237.2 L25.0 236.5 L25.5 235.8 L26.0 235.1 L26.5 234.4 L27.0 233.6 L27.5 232.9 L28.0 232.2 L28.5 231.5 L29.0 230.9 L29.5 230.4 L30.0 229.9 L30.5 229.5 L31.0 229.2 L31.5 229.0 L32.0 228.9 L32.5 229.0 L33.0 229.2 L33.5 229.5 L34.0 229.9 L34.5 230.5 L35.0 231.2 L35.5 232.0 L36.0 233.0 L36.5 234.1 L37.0 235.3 L37.5 236.5 L38.0 237.9 L38.5 239.3 L39.0 240.8 L39.5 242.4 L40.0 243.9 L40.5 245.4 L41.0 247.0 L41.5 248.5 L42.0 249.9 L42.5 251.3 L43.0 252.5 L43.5 253.7 L44.0 254.7 L44.5 255.5 L45.0 256.2 L45.5 256.8 L46.0 257.1 L46.5 257.2 L47.0 257.2 L47.5 256.9 L48.0 256.4 L48.5 255.7 L49.0 254.8 L49.5 253.7 L50.0 252.4 L50.5 250.9 L51.0 249.2 L51.5 247.4 L52.0 245.4 L52.5 243.3 L53.0 241.2 L53.5 238.9 L54.0 236.6 L54.5 234.2 L55.0 231.9 L55.5 229.6 L56.0 227.3 L56.5 225.1 L57.0 223.1 L57.5 221.1 L58.0 219.3 L58.5 217.7 L59.0 216.3 L59.5 215.1 L60.0 214.2 L60.5 213.5 L61.0 213.1 L61.5 212.9 L62.0 213.0 L62.5 213.4 L63.0 214.1 L63.5 215.1 L64.0 216.4 L64.5 217.9 L65.0 219.7 L65.5 221.7 L66.0 223.9 L66.5 226.3 L67.0 228.9 L67.5 231.6 L68.0 234.5 L68.5 237.4 L69.0 240.4 L69.5 243.4 L70.0 246.4 L70.5 249.4 L71.0 252.3 L71.5 255.0 L72.0 257.7 L72.5 260.1 L73.0 262.4 L73.5 264.4 L74.0 266.1 L74.5 267.6 L75.0 268.8 L75.5 269.7 L76.0 270.2 L76.5 270.4 L77.0 270.3 L77.5 269.8 L78.0 269.0 L78.5 267.9 L79.0 266.4 L79.5 264.6 L80.0 262.6 L80.5 260.2 L81.0 257.6 L81.5 254.8 L82.0 251.8 L82.5 248.6 L83.0 245.2 L83.5 241.8 L84.0 238.4 L84.5 234.9 L85.0 231.4 L85.5 228.0 L86.0 224.7 L86.5 221.5 L87.0 218.5 L87.5 215.6 L88.0 213.0 L88.5 210.7 L89.0 208.7 L89.5 207.0 L90.0 205.6 L90.5 204.5 L91.0 203.9 L91.5 203.6 L92.0 203.6 L92.5 204.1 L93.0 204.9 L93.5 206.1 L94.0 207.7 L94.5 209.6 L95.0 211.8 L95.5 214.3 L96.0 217.1 L96.5 220.1 L97.0 223.4 L97.5 226.8 L98.0 230.3 L98.5 234.0 L99.0 237.7 L99.5 241.4 L100.0 245.2 L100.5 248.8 L101.0 252.4 L101.5 255.8 L102.0 259.0 L102.5 262.1 L103.0 264.8 L103.5 267.3 L104.0 269.5 L104.5 271.4 L105.0 272.9 L105.5 274.1 L106.0 274.9 L106.5 275.3 L107.0 275.3 L107.5 274.9 L108.0 274.1 L108.5 272.9 L109.0 271.4 L109.5 269.5 L110.0 267.3 L110.5 264.8 L111.0 262.1 L111.5 259.0 L112.0 255.8 L112.5 252.4 L113.0 248.8 L113.5 245.2 L114.0 241.4 L114.5 237.7 L115.0 234.0 L115.5 230.3 L116.0 226.8 L116.5 223.4 L117.0 220.1 L117.5 217.1 L118.0 214.3 L118.5 211.8 L119.0 209.6 L119.5 207.7 L120.0 206.1 L120.5 204.9 L121.0 204.1 L121.5 203.6 L122.0 203.6 L122.5 203.9 L123.0 204.5 L123.5 205.6 L124.0 207.0 L124.5 208.7 L125.0 210.7 L125.5 213.0 L126.0 215.6 L126.5 218.5 L127.0 221.5 L127.5 224.7 L128.0 228.0 L128.5 231.4 L129.0 234.9 L129.5 238.4 L130.0 241.8 L130.5 245.2 L131.0 248.6 L131.5 251.8 L132.0 254.8 L132.5 257.6 L133.0 260.2 L133.5 262.6 L134.0 264.6 L134.5 266.4 L135.0 267.9 L135.5 269.0 L136.0 269.8 L136.5 270.3 L137.0 270.4 L137.5 270.2 L138.0 269.7 L138.5 268.8 L139.0 267.6 L139.5 266.1 L140.0 264.4 L140.5 262.4 L141.0 260.1 L141.5 257.7 L142.0 255.0 L142.5 252.3 L143.0 249.4 L143.5 246.4 L144.0 243.4 L144.5 240.4 L145.0 237.4 L145.5 234.5 L146.0 231.6 L146.5 228.9 L147.0 226.3 L147.5 223.9 L148.0 221.7 L148.5 219.7 L149.0 217.9 L149.5 216.4 L150.0 215.1 L150.5 214.1 L151.0 213.4 L151.5 213.0 L152.0 212.9 L152.5 213.1 L153.0 213.5 L153.5 214.2 L154.0 215.1 L154.5 216.3 L155.0 217.7 L155.5 219.3 L156.0 221.1 L156.5 223.1 L157.0 225.1 L157.5 227.3 L158.0 229.6 L158.5 231.9 L159.0 234.2 L159.5 236.6 L160.0 238.9 L160.5 241.2 L161.0 243.3 L161.5 245.4 L162.0 247.4 L162.5 249.2 L163.0 250.9 L163.5 252.4 L164.0 253.7 L164.5 254.8 L165.0 255.7 L165.5 256.4 L166.0 256.9 L166.5 257.2 L167.0 257.2 L167.5 257.1 L168.0 256.8 L168.5 256.2 L169.0 255.5 L169.5 254.7 L170.0 253.7 L170.5 252.5 L171.0 251.3 L171.5 249.9 L172.0 248.5 L172.5 247.0 L173.0 245.4 L173.5 243.9 L174.0 242.4 L174.5 240.8 L175.0 239.3 L175.5 237.9 L176.0 236.5 L176.5 235.3 L177.0 234.1 L177.5 233.0 L178.0 232.0 L178.5 231.2 L179.0 230.5 L179.5 229.9 L180.0 229.5 L180.5 229.2 L181.0 229.0 L181.5 228.9 L182.0 229.0 L182.5 229.2 L183.0 229.5 L183.5 229.9 L184.0 230.4 L184.5 230.9 L185.0 231.5 L185.5 232.2 L186.0 232.9 L186.5 233.6 L187.0 234.4 L187.5 235.1 L188.0 235.8 L188.5 236.5 L189.0 237.2 L189.5 237.8 L190.0 238.4 L190.5 238.9 L191.0 239.3 L191.5 239.7 L192.0 240.0 L192.5 240.3 L193.0 240.4 L193.5 240.5 L194.0 240.5 L194.5 240.4 L195.0 240.3 L195.5 240.2 L196.0 240.0 L196.5 239.7 L197.0 239.4 L197.5 239.1 L198.0 238.8 L198.5 238.5 L199.0 238.2 L199.5 237.9 L200.0 237.6 L200.5 237.4 L201.0 237.3 L201.5 237.2 L202.0 237.1 L202.5 237.1 L203.0 237.2 L203.5 237.3 L204.0 237.6 L204.5 237.9 L205.0 238.3 L205.5 238.7 L206.0 239.2 L206.5 239.8 L207.0 240.4 L207.5 241.1 L208.0 241.8 L208.5 242.5 L209.0 243.2 L209.5 244.0 L210.0 244.7 L210.5 245.4 L211.0 246.1 L211.5 246.7 L212.0 247.2 L212.5 247.7 L213.0 248.1 L213.5 248.4 L214.0 248.6 L214.5 248.7 L215.0 248.6 L215.5 248.4 L216.0 248.1 L216.5 247.7 L217.0 247.1 L217.5 246.4 L218.0 245.6 L218.5 244.6 L219.0 243.5 L219.5 242.3 L220.0 241.1 L220.5 239.7 L221.0 238.3 L221.5 236.8 L222.0 235.2 L222.5 233.7 L223.0 232.2 L223.5 230.6 L224.0 229.1 L224.5 227.7 L225.0 226.3 L225.5 225.1 L226.0 223.9 L226.5 222.9 L227.0 222.1 L227.5 221.4 L228.0 220.8 L228.5 220.5 L229.0 220.4 L229.5 220.4 L230.0 220.7 L230.5 221.2 L231.0 221.9 L231.5 222.8 L232.0 223.9 L232.5 225.2 L233.0 226.7 L233.5 228.4 L234.0 230.2 L234.5 232.2 L235.0 234.3 L235.5 236.4 L236.0 238.7 L236.5 241.0 L237.0 243.4 L237.5 245.7 L238.0 248.0 L238.5 250.3 L239.0 252.5 L239.5 254.5 L240.0 256.5 L240.5 258.3 L241.0 259.9 L241.5 261.3 L242.0 262.5 L242.5 263.4 L243.0 264.1 L243.5 264.5 L244.0 264.7 L244.5 264.6 L245.0 264.2 L245.5 263.5 L246.0 262.5 L246.5 261.2 L247.0 259.7 L247.5 257.9 L248.0 255.9 L248.5 253.7 L249.0 251.3 L249.5 248.7 L250.0 246.0 L250.5 243.1 L251.0 240.2 L251.5 237.2 L252.0 234.2 L252.5 231.2 L253.0 228.2 L253.5 225.3 L254.0 222.6 L254.5 219.9 L255.0 217.5 L255.5 215.2 L256.0 213.2 L256.5 211.5 L257.0 210.0 L257.5 208.8 L258.0 207.9 L258.5 207.4 L259.0 207.2 L259.5 207.3 L260.0 207.8 L260.5 208.6 L261.0 209.7 L261.5 211.2 L262.0 213.0 L262.5 215.0 L263.0 217.4 L263.5 220.0 L264.0 222.8 L264.5 225.8 L265.0 229.0 L265.5 232.4 L266.0 235.8 L266.5 239.2 L267.0 242.7 L267.5 246.2 L268.0 249.6 L268.5 252.9 L269.0 256.1 L269.5 259.1 L270.0 262.0 L270.5 264.6 L271.0 266.9 L271.5 268.9 L272.0 270.6 L272.5 272.0 L273.0 273.1 L273.5 273.7 L274.0 274.0 L274.5 274.0 L275.0 273.5 L275.5 272.7 L276.0 271.5 L276.5 269.9 L277.0 268.0 L277.5 265.8 L278.0 263.3 L278.5 260.5 L279.0 257.5 L279.5 254.2 L280.0 250.8 L280.5 247.3 L281.0 243.6 L281.5 239.9 L282.0 236.2 L282.5 232.4 L283.0 228.8 L283.5 225.2 L284.0 221.8 L284.5 218.6 L285.0 215.5 L285.5 212.8 L286.0 210.3 L286.5 208.1 L287.0 206.2 L287.5 204.7 L288.0 203.5 L288.5 202.7 L289.0 202.3 L289.5 202.3 L290.0 202.7 L290.5 203.5 L291.0 204.7 L291.5 206.2 L292.0 208.1 L292.5 210.3 L293.0 212.8 L293.5 215.5 L294.0 218.6 L294.5 221.8 L295.0 225.2 L295.5 228.8 L296.0 232.4 L296.5 236.2 L297.0 239.9 L297.5 243.6 L298.0 247.3 L298.5 250.8 L299.0 254.2 L299.5 257.5 L300.0 260.5 L300.5 263.3 L301.0 265.8 L301.5 268.0 L302.0 269.9 L302.5 271.5 L303.0 272.7 L303.5 273.5 L304.0 274.0 L304.5 274.0 L305.0 273.7 L305.5 273.1 L306.0 272.0 L306.5 270.6 L307.0 268.9 L307.5 266.9 L308.0 264.6 L308.5 262.0 L309.0 259.1 L309.5 256.1 L310.0 252.9 L310.5 249.6 L311.0 246.2 L311.5 242.7 L312.0 239.2 L312.5 235.8 L313.0 232.4 L313.5 229.0 L314.0 225.8 L314.5 222.8 L315.0 220.0 L315.5 217.4 L316.0 215.0 L316.5 213.0 L317.0 211.2 L317.5 209.7 L318.0 208.6 L318.5 207.8 L319.0 207.3 L319.5 207.2 L320.0 207.4 L320.5 207.9 L321.0 208.8 L321.5 210.0 L322.0 211.5 L322.5 213.2 L323.0 215.2 L323.5 217.5 L324.0 219.9 L324.5 222.6 L325.0 225.3 L325.5 228.2 L326.0 231.2 L326.5 234.2 L327.0 237.2 L327.5 240.2 L328.0 243.1 L328.5 246.0 L329.0 248.7 L329.5 251.3 L330.0 253.7 L330.5 255.9 L331.0 257.9 L331.5 259.7 L332.0 261.2 L332.5 262.5 L333.0 263.5 L333.5 264.2 L334.0 264.6 L334.5 264.7 L335.0 264.5 L335.5 264.1 L336.0 263.4 L336.5 262.5 L337.0 261.3 L337.5 259.9 L338.0 258.3 L338.5 256.5 L339.0 254.5 L339.5 252.5 L340.0 250.3 L340.5 248.0 L341.0 245.7 L341.5 243.4 L342.0 241.0 L342.5 238.7 L343.0 236.4 L343.5 234.3 L344.0 232.2 L344.5 230.2 L345.0 228.4 L345.5 226.7 L346.0 225.2 L346.5 223.9 L347.0 222.8 L347.5 221.9 L348.0 221.2 L348.5 220.7 L349.0 220.4 L349.5 220.4 L350.0 220.5 L350.5 220.8 L351.0 221.4 L351.5 222.1 L352.0 222.9 L352.5 223.9 L353.0 225.1 L353.5 226.3 L354.0 227.7 L354.5 229.1 L355.0 230.6 L355.5 232.2 L356.0 233.7 L356.5 235.2 L357.0 236.8 L357.5 238.3 L358.0 239.7 L358.5 241.1 L359.0 242.3 L359.5 243.5 L360.0 244.6 L360.5 245.6 L361.0 246.4 L361.5 247.1 L362.0 247.7 L362.5 248.1 L363.0 248.4 L363.5 248.6 L364.0 248.7 L364.5 248.6 L365.0 248.4 L365.5 248.1 L366.0 247.7 L366.5 247.2 L367.0 246.7 L367.5 246.1 L368.0 245.4 L368.5 244.7 L369.0 244.0 L369.5 243.2 L370.0 242.5 L370.5 241.8 L371.0 241.1 L371.5 240.4 L372.0 239.8 L372.5 239.2 L373.0 238.7 L373.5 238.3 L374.0 237.9 L374.5 237.6 L375.0 237.3 L375.5 237.2 L376.0 237.1 L376.5 237.1 L377.0 237.2 L377.5 237.3 L378.0 237.4 L378.5 237.6 L379.0 237.9 L379.5 238.2 L380.0 238.5 L380.5 238.8 L381.0 239.1 L381.5 239.4 L382.0 239.7 L382.5 240.0 L383.0 240.2 L383.5 240.3 L384.0 240.4 L384.5 240.5 L385.0 240.5 L385.5 240.4 L386.0 240.3 L386.5 240.0 L387.0 239.7 L387.5 239.3 L388.0 238.9 L388.5 238.4 L389.0 237.8 L389.5 237.2 L390.0 236.5 L390.5 235.8 L391.0 235.1 L391.5 234.4 L392.0 233.6 L392.5 232.9 L393.0 232.2 L393.5 231.5 L394.0 230.9 L394.5 230.4 L395.0 229.9 L395.5 229.5 L396.0 229.2 L396.5 229.0 L397.0 228.9 L397.5 229.0 L398.0 229.2 L398.5 229.5 L399.0 229.9 L399.5 230.5 L400.0 231.2 L400.5 232.0 L401.0 233.0 L401.5 234.1 L402.0 235.3 L402.5 236.5 L403.0 237.9 L403.5 239.3 L404.0 240.8 L404.5 242.4 L405.0 243.9 L405.5 245.4 L406.0 247.0 L406.5 248.5 L407.0 249.9 L407.5 251.3 L408.0 252.5 L408.5 253.7 L409.0 254.7 L409.5 255.5 L410.0 256.2 L410.5 256.8 L411.0 257.1 L411.5 257.2 L412.0 257.2 L412.5 256.9 L413.0 256.4 L413.5 255.7 L414.0 254.8 L414.5 253.7 L415.0 252.4 L415.5 250.9 L416.0 249.2 L416.5 247.4 L417.0 245.4 L417.5 243.3 L418.0 241.2 L418.5 238.9 L419.0 236.6 L419.5 234.2 L420.0 231.9 L420.5 229.6 L421.0 227.3 L421.5 225.1 L422.0 223.1 L422.5 221.1 L423.0 219.3 L423.5 217.7 L424.0 216.3 L424.5 215.1 L425.0 214.2 L425.5 213.5 L426.0 213.1 L426.5 212.9 L427.0 213.0 L427.5 213.4 L428.0 214.1 L428.5 215.1 L429.0 216.4 L429.5 217.9 L430.0 219.7 L430.5 221.7 L431.0 223.9 L431.5 226.3 L432.0 228.9 L432.5 231.6 L433.0 234.5 L433.5 237.4 L434.0 240.4 L434.5 243.4 L435.0 246.4 L435.5 249.4 L436.0 252.3 L436.5 255.0 L437.0 257.7 L437.5 260.1 L438.0 262.4 L438.5 264.4 L439.0 266.1 L439.5 267.6 L440.0 268.8 L440.5 269.7 L441.0 270.2 L441.5 270.4 L442.0 270.3 L442.5 269.8 L443.0 269.0 L443.5 267.9 L444.0 266.4 L444.5 264.6 L445.0 262.6 L445.5 260.2 L446.0 257.6 L446.5 254.8 L447.0 251.8 L447.5 248.6 L448.0 245.2 L448.5 241.8 L449.0 238.4 L449.5 234.9 L450.0 231.4 L450.5 228.0 L451.0 224.7 L451.5 221.5 L452.0 218.5 L452.5 215.6 L453.0 213.0 L453.5 210.7 L454.0 208.7 L454.5 207.0 L455.0 205.6 L455.5 204.5 L456.0 203.9 L456.5 203.6 L457.0 203.6 L457.5 204.1 L458.0 204.9 L458.5 206.1 L459.0 207.7 L459.5 209.6 L460.0 211.8 L460.5 214.3 L461.0 217.1 L461.5 220.1 L462.0 223.4 L462.5 226.8 L463.0 230.3 L463.5 234.0 L464.0 237.7 L464.5 241.4 L465.0 245.2 L465.5 248.8 L466.0 252.4 L466.5 255.8 L467.0 259.0 L467.5 262.1 L468.0 264.8 L468.5 267.3 L469.0 269.5 L469.5 271.4 L470.0 272.9 L470.5 274.1 L471.0 274.9 L471.5 275.3 L472.0 275.3 L472.5 274.9 L473.0 274.1 L473.5 272.9 L474.0 271.4 L474.5 269.5 L475.0 267.3 L475.5 264.8 L476.0 262.1 L476.5 259.0 L477.0 255.8 L477.5 252.4 L478.0 248.8 L478.5 245.2 L479.0 241.4 L479.5 237.7 L480.0 234.0 L480.5 230.3 L481.0 226.8 L481.5 223.4 L482.0 220.1 L482.5 217.1 L483.0 214.3 L483.5 211.8 L484.0 209.6 L484.5 207.7 L485.0 206.1 L485.5 204.9 L486.0 204.1 L486.5 203.6 L487.0 203.6 L487.5 203.9 L488.0 204.5 L488.5 205.6 L489.0 207.0 L489.5 208.7 L490.0 210.7 L490.5 213.0 L491.0 215.6 L491.5 218.5 L492.0 221.5 L492.5 224.7 L493.0 228.0 L493.5 231.4 L494.0 234.9 L494.5 238.4 L495.0 241.8 L495.5 245.2 L496.0 248.6 L496.5 251.8 L497.0 254.8 L497.5 257.6 L498.0 260.2 L498.5 262.6 L499.0 264.6 L499.5 266.4 L500.0 267.9 L500.5 269.0 L501.0 269.8 L501.5 270.3 L502.0 270.4 L502.5 270.2 L503.0 269.7 L503.5 268.8 L504.0 267.6 L504.5 266.1 L505.0 264.4 L505.5 262.4 L506.0 260.1 L506.5 257.7 L507.0 255.0 L507.5 252.3 L508.0 249.4 L508.5 246.4 L509.0 243.4 L509.5 240.4 L510.0 237.4 L510.5 234.5 L511.0 231.6 L511.5 228.9 L512.0 226.3 L512.5 223.9 L513.0 221.7 L513.5 219.7 L514.0 217.9 L514.5 216.4 L515.0 215.1 L515.5 214.1 L516.0 213.4 L516.5 213.0 L517.0 212.9 L517.5 213.1 L518.0 213.5 L518.5 214.2 L519.0 215.1 L519.5 216.3 L520.0 217.7 L520.5 219.3 L521.0 221.1 L521.5 223.1 L522.0 225.1 L522.5 227.3 L523.0 229.6 L523.5 231.9 L524.0 234.2 L524.5 236.6 L525.0 238.9 L525.5 241.2 L526.0 243.3 L526.5 245.4 L527.0 247.4 L527.5 249.2 L528.0 250.9 L528.5 252.4 L529.0 253.7 L529.5 254.8 L530.0 255.7 L530.5 256.4 L531.0 256.9 L531.5 257.2 L532.0 257.2 L532.5 257.1 L533.0 256.8 L533.5 256.2 L534.0 255.5 L534.5 254.7 L535.0 253.7 L535.5 252.5 L536.0 251.3 L536.5 249.9 L537.0 248.5 L537.5 247.0 L538.0 245.4 L538.5 243.9 L539.0 242.4 L539.5 240.8 L540.0 239.3 L540.5 237.9 L541.0 236.5 L541.5 235.3 L542.0 234.1 L542.5 233.0 L543.0 232.0 L543.5 231.2 L544.0 230.5 L544.5 229.9 L545.0 229.5 L545.5 229.2 L546.0 229.0 L546.5 228.9 L547.0 229.0 L547.5 229.2 L548.0 229.5 L548.5 229.9 L549.0 230.4 L549.5 230.9 L550.0 231.5 L550.5 232.2 L551.0 232.9 L551.5 233.6 L552.0 234.4 L552.5 235.1 L553.0 235.8 L553.5 236.5 L554.0 237.2 L554.5 237.8 L555.0 238.4 L555.5 238.9 L556.0 239.3 L556.5 239.7 L557.0 240.0 L557.5 240.3 L558.0 240.4 L558.5 240.5 L559.0 240.5 L559.5 240.4 L560.0 240.3 L560.5 240.2 L561.0 240.0 L561.5 239.7 L562.0 239.4 L562.5 239.1 L563.0 238.8 L563.5 238.5 L564.0 238.2 L564.5 237.9 L565.0 237.6 L565.5 237.4 L566.0 237.3 L566.5 237.2 L567.0 237.1 L567.5 237.1 L568.0 237.2 L568.5 237.3 L569.0 237.6 L569.5 237.9 L570.0 238.3 L570.5 238.7 L571.0 239.2 L571.5 239.8 L572.0 240.4 L572.5 241.1 L573.0 241.8 L573.5 242.5 L574.0 243.2 L574.5 244.0 L575.0 244.7 L575.5 245.4 L576.0 246.1 L576.5 246.7 L577.0 247.2 L577.5 247.7 L578.0 248.1 L578.5 248.4 L579.0 248.6 L579.5 248.7 L580.0 248.6 L580.5 248.4 L581.0 248.1 L581.5 247.7 L582.0 247.1 L582.5 246.4 L583.0 245.6 L583.5 244.6 L584.0 243.5 L584.5 242.3 L585.0 241.1 L585.5 239.7 L586.0 238.3 L586.5 236.8 L587.0 235.2 L587.5 233.7 L588.0 232.2 L588.5 230.6 L589.0 229.1 L589.5 227.7 L590.0 226.3 L590.5 225.1 L591.0 223.9 L591.5 222.9 L592.0 222.1 L592.5 221.4 L593.0 220.8 L593.5 220.5 L594.0 220.4 L594.5 220.4 L595.0 220.7 L595.5 221.2 L596.0 221.9 L596.5 222.8 L597.0 223.9 L597.5 225.2 L598.0 226.7 L598.5 228.4 L599.0 230.2 L599.5 232.2 L600.0 234.3 L600.5 236.4 L601.0 238.7 L601.5 241.0 L602.0 243.4 L602.5 245.7 L603.0 248.0 L603.5 250.3 L604.0 252.5 L604.5 254.5 L605.0 256.5 L605.5 258.3 L606.0 259.9 L606.5 261.3 L607.0 262.5 L607.5 263.4 L608.0 264.1 L608.5 264.5 L609.0 264.7 L609.5 264.6 L610.0 264.2 L610.5 263.5 L611.0 262.5 L611.5 261.2 L612.0 259.7 L612.5 257.9 L613.0 255.9 L613.5 253.7 L614.0 251.3 L614.5 248.7 L615.0 246.0 L615.5 243.1 L616.0 240.2 L616.5 237.2 L617.0 234.2 L617.5 231.2 L618.0 228.2 L618.5 225.3 L619.0 222.6 L619.5 219.9 L620.0 217.5 L620.5 215.2 L621.0 213.2 L621.5 211.5 L622.0 210.0 L622.5 208.8 L623.0 207.9 L623.5 207.4 L624.0 207.2 L624.5 207.3 L625.0 207.8 L625.5 208.6 L626.0 209.7 L626.5 211.2 L627.0 213.0 L627.5 215.0 L628.0 217.4 L628.5 220.0 L629.0 222.8 L629.5 225.8 L630.0 229.0 L630.5 232.4 L631.0 235.8 L631.5 239.2 L632.0 242.7 L632.5 246.2 L633.0 249.6 L633.5 252.9 L634.0 256.1 L634.5 259.1 L635.0 262.0 L635.5 264.6 L636.0 266.9 L636.5 268.9 L637.0 270.6 L637.5 272.0 L638.0 273.1 L638.5 273.7 L639.0 274.0 L639.5 274.0 L640.0 273.5 L640.5 272.7 L641.0 271.5 L641.5 269.9 L642.0 268.0 L642.5 265.8 L643.0 263.3 L643.5 260.5 L644.0 257.5 L644.5 254.2 L645.0 250.8 L645.5 247.3 L646.0 243.6 L646.5 239.9 L647.0 236.2 L647.5 232.4 L648.0 228.8 L648.5 225.2 L649.0 221.8 L649.5 218.6 L650.0 215.5 L650.5 212.8 L651.0 210.3 L651.5 208.1 L652.0 206.2 L652.5 204.7 L653.0 203.5 L653.5 202.7 L654.0 202.3 L654.5 202.3 L655.0 202.7 L655.5 203.5 L656.0 204.7 L656.5 206.2 L657.0 208.1 L657.5 210.3 L658.0 212.8 L658.5 215.5 L659.0 218.6 L659.5 221.8 L660.0 225.2 L660.5 228.8 L661.0 232.4 L661.5 236.2 L662.0 239.9 L662.5 243.6 L663.0 247.3 L663.5 250.8 L664.0 254.2 L664.5 257.5 L665.0 260.5 L665.5 263.3 L666.0 265.8 L666.5 268.0 L667.0 269.9 L667.5 271.5 L668.0 272.7 L668.5 273.5 L669.0 274.0 L669.5 274.0 L670.0 273.7 L670.5 273.1 L671.0 272.0 L671.5 270.6 L672.0 268.9 L672.5 266.9 L673.0 264.6 L673.5 262.0 L674.0 259.1 L674.5 256.1 L675.0 252.9 L675.5 249.6 L676.0 246.2 L676.5 242.7 L677.0 239.2 L677.5 235.8 L678.0 232.4 L678.5 229.0 L679.0 225.8 L679.5 222.8 L680.0 220.0 L680.5 217.4 L681.0 215.0 L681.5 213.0 L682.0 211.2 L682.5 209.7 L683.0 208.6 L683.5 207.8 L684.0 207.3 L684.5 207.2 L685.0 207.4 L685.5 207.9 L686.0 208.8 L686.5 210.0 L687.0 211.5 L687.5 213.2 L688.0 215.2 L688.5 217.5 L689.0 219.9 L689.5 222.6 L690.0 225.3 L690.5 228.2 L691.0 231.2 L691.5 234.2 L692.0 237.2 L692.5 240.2 L693.0 243.1 L693.5 246.0 L694.0 248.7 L694.5 251.3 L695.0 253.7 L695.5 255.9 L696.0 257.9 L696.5 259.7 L697.0 261.2 L697.5 262.5 L698.0 263.5 L698.5 264.2 L699.0 264.6 L699.5 264.7 L700.0 264.5 L700.5 264.1 L701.0 263.4 L701.5 262.5 L702.0 261.3 L702.5 259.9 L703.0 258.3 L703.5 256.5 L704.0 254.5 L704.5 252.5 L705.0 250.3 L705.5 248.0 L706.0 245.7 L706.5 243.4 L707.0 241.0 L707.5 238.7 L708.0 236.4 L708.5 234.3 L709.0 232.2 L709.5 230.2 L710.0 228.4 L710.5 226.7 L711.0 225.2 L711.5 223.9 L712.0 222.8 L712.5 221.9 L713.0 221.2 L713.5 220.7 L714.0 220.4 L714.5 220.4 L715.0 220.5 L715.5 220.8 L716.0 221.4 L716.5 222.1 L717.0 222.9 L717.5 223.9 L718.0 225.1 L718.5 226.3 L719.0 227.7 L719.5 229.1 L720.0 230.6 L720.5 232.2 L721.0 233.7 L721.5 235.2 L722.0 236.8 L722.5 238.3 L723.0 239.7 L723.5 241.1 L724.0 242.3 L724.5 243.5 L725.0 244.6 L725.5 245.6 L726.0 246.4 L726.5 247.1 L727.0 247.7 L727.5 248.1 L728.0 248.4 L728.5 248.6 L729.0 248.7 L729.5 248.6 L730.0 248.4 L730.5 248.1 L731.0 247.7 L731.5 247.2 L732.0 246.7 L732.5 246.1 L733.0 245.4 L733.5 244.7 L734.0 244.0 L734.5 243.2 L735.0 242.5 L735.5 241.8 L736.0 241.1 L736.5 240.4 L737.0 239.8 L737.5 239.2 L738.0 238.7 L738.5 238.3 L739.0 237.9 L739.5 237.6 L740.0 237.3 L740.5 237.2 L741.0 237.1 L741.5 237.1 L742.0 237.2 L742.5 237.3 L743.0 237.4 L743.5 237.6 L744.0 237.9 L744.5 238.2 L745.0 238.5 L745.5 238.8 L746.0 239.1 L746.5 239.4 L747.0 239.7 L747.5 240.0 L748.0 240.2 L748.5 240.3 L749.0 240.4 L749.5 240.5 L750.0 240.5 L750.5 240.4 L751.0 240.3 L751.5 240.0 L752.0 239.7 L752.5 239.3 L753.0 238.9 L753.5 238.4 L754.0 237.8 L754.5 237.2 L755.0 236.5 L755.5 235.8 L756.0 235.1 L756.5 234.4 L757.0 233.6 L757.5 232.9 L758.0 232.2 L758.5 231.5 L759.0 230.9 L759.5 230.4 L760.0 229.9 L760.5 229.5 L761.0 229.2 L761.5 229.0 L762.0 228.9 L762.5 229.0 L763.0 229.2 L763.5 229.5 L764.0 229.9 L764.5 230.5 L765.0 231.2 L765.5 232.0 L766.0 233.0 L766.5 234.1 L767.0 235.3 L767.5 236.5 L768.0 237.9 L768.5 239.3 L769.0 240.8 L769.5 242.4 L770.0 243.9 L770.5 245.4 L771.0 247.0 L771.5 248.5 L772.0 249.9 L772.5 251.3 L773.0 252.5 L773.5 253.7 L774.0 254.7 L774.5 255.5 L775.0 256.2 L775.5 256.8 L776.0 257.1 L776.5 257.2 L777.0 257.2 L777.5 256.9 L778.0 256.4 L778.5 255.7 L779.0 254.8 L779.5 253.7 L780.0 252.4 L780.5 250.9 L781.0 249.2 L781.5 247.4 L782.0 245.4 L782.5 243.3 L783.0 241.2 L783.5 238.9 L784.0 236.6 L784.5 234.2 L785.0 231.9 L785.5 229.6 L786.0 227.3 L786.5 225.1 L787.0 223.1 L787.5 221.1 L788.0 219.3 L788.5 217.7 L789.0 216.3 L789.5 215.1 L790.0 214.2 L790.5 213.5 L791.0 213.1 L791.5 212.9 L792.0 213.0 L792.5 213.4 L793.0 214.1 L793.5 215.1 L794.0 216.4 L794.5 217.9 L795.0 219.7 L795.5 221.7 L796.0 223.9 L796.5 226.3 L797.0 228.9 L797.5 231.6 L798.0 234.5 L798.5 237.4 L799.0 240.4 L799.5 243.4 L800.0 246.4 L800.5 249.4 L801.0 252.3 L801.5 255.0 L802.0 257.7 L802.5 260.1 L803.0 262.4 L803.5 264.4 L804.0 266.1 L804.5 267.6 L805.0 268.8 L805.5 269.7 L806.0 270.2 L806.5 270.4 L807.0 270.3 L807.5 269.8 L808.0 269.0 L808.5 267.9 L809.0 266.4 L809.5 264.6 L810.0 262.6 L810.5 260.2 L811.0 257.6 L811.5 254.8 L812.0 251.8 L812.5 248.6 L813.0 245.2 L813.5 241.8 L814.0 238.4 L814.5 234.9 L815.0 231.4 L815.5 228.0 L816.0 224.7 L816.5 221.5 L817.0 218.5 L817.5 215.6 L818.0 213.0 L818.5 210.7 L819.0 208.7 L819.5 207.0 L820.0 205.6 L820.5 204.5 L821.0 203.9 L821.5 203.6 L822.0 203.6 L822.5 204.1 L823.0 204.9 L823.5 206.1 L824.0 207.7 L824.5 209.6 L825.0 211.8 L825.5 214.3 L826.0 217.1 L826.5 220.1 L827.0 223.4 L827.5 226.8 L828.0 230.3 L828.5 234.0 L829.0 237.7 L829.5 241.4 L830.0 245.2 L830.5 248.8 L831.0 252.4 L831.5 255.8 L832.0 259.0 L832.5 262.1 L833.0 264.8 L833.5 267.3 L834.0 269.5 L834.5 271.4 L835.0 272.9 L835.5 274.1 L836.0 274.9 L836.5 275.3 L837.0 275.3 L837.5 274.9 L838.0 274.1 L838.5 272.9 L839.0 271.4 L839.5 269.5 L840.0 267.3 L840.5 264.8 L841.0 262.1 L841.5 259.0 L842.0 255.8 L842.5 252.4 L843.0 248.8 L843.5 245.2 L844.0 241.4 L844.5 237.7 L845.0 234.0 L845.5 230.3 L846.0 226.8 L846.5 223.4 L847.0 220.1 L847.5 217.1 L848.0 214.3 L848.5 211.8 L849.0 209.6 L849.5 207.7 L850.0 206.1 L850.5 204.9 L851.0 204.1 L851.5 203.6 L852.0 203.6 L852.5 203.9 L853.0 204.5 L853.5 205.6 L854.0 207.0 L854.5 208.7 L855.0 210.7 L855.5 213.0 L856.0 215.6 L856.5 218.5 L857.0 221.5 L857.5 224.7 L858.0 228.0 L858.5 231.4 L859.0 234.9 L859.5 238.4 L860.0 241.8 L860.5 245.2 L861.0 248.6 L861.5 251.8 L862.0 254.8 L862.5 257.6 L863.0 260.2 L863.5 262.6 L864.0 264.6 L864.5 266.4 L865.0 267.9 L865.5 269.0 L866.0 269.8 L866.5 270.3 L867.0 270.4 L867.5 270.2 L868.0 269.7 L868.5 268.8 L869.0 267.6 L869.5 266.1 L870.0 264.4 L870.5 262.4 L871.0 260.1 L871.5 257.7 L872.0 255.0 L872.5 252.3 L873.0 249.4 L873.5 246.4 L874.0 243.4 L874.5 240.4 L875.0 237.4 L875.5 234.5 L876.0 231.6 L876.5 228.9 L877.0 226.3 L877.5 223.9 L878.0 221.7 L878.5 219.7 L879.0 217.9 L879.5 216.4 L880.0 215.1 L880.5 214.1 L881.0 213.4 L881.5 213.0 L882.0 212.9 L882.5 213.1 L883.0 213.5 L883.5 214.2 L884.0 215.1 L884.5 216.3 L885.0 217.7 L885.5 219.3 L886.0 221.1 L886.5 223.1 L887.0 225.1 L887.5 227.3 L888.0 229.6 L888.5 231.9 L889.0 234.2 L889.5 236.6 L890.0 238.9 L890.5 241.2 L891.0 243.3 L891.5 245.4 L892.0 247.4 L892.5 249.2 L893.0 250.9 L893.5 252.4 L894.0 253.7 L894.5 254.8 L895.0 255.7 L895.5 256.4 L896.0 256.9 L896.5 257.2 L897.0 257.2 L897.5 257.1 L898.0 256.8 L898.5 256.2 L899.0 255.5" stroke="#2d70b3" stroke-opacity="0.7" stroke-width="3.1" fill="none" stroke-linejoin="round" stroke-linecap="round"/>
<path d="M-4.0 226.8 L-2.0 228.0 L0.0 229.2 L2.0 230.4 L4.0 231.6 L6.0 232.9 L8.0 234.1 L10.0 235.3 L12.0 236.6 L14.0 237.9 L16.0 239.1 L18.0 240.4 L20.0 241.6 L22.0 242.9 L24.0 244.1 L26.0 245.4 L28.0 246.6 L30.0 247.8 L32.0 249.0 L34.0 250.2 L36.0 251.4 L38.0 252.6 L40.0 253.7 L42.0 254.9 L44.0 256.0 L46.0 257.1 L48.0 258.2 L50.0 259.2 L52.0 260.3 L54.0 261.3 L56.0 262.2 L58.0 263.2 L60.0 264.1 L62.0 265.0 L64.0 265.9 L66.0 266.7 L68.0 267.5 L70.0 268.2 L72.0 269.0 L74.0 269.7 L76.0 270.3 L78.0 270.9 L80.0 271.5 L82.0 272.0 L84.0 272.5 L86.0 273.0 L88.0 273.4 L90.0 273.8 L92.0 274.1 L94.0 274.4 L96.0 274.7 L98.0 274.9 L100.0 275.1 L102.0 275.2 L104.0 275.3 L106.0 275.3 L108.0 275.3 L110.0 275.2 L112.0 275.2 L114.0 275.0 L116.0 274.8 L118.0 274.6 L120.0 274.4 L122.0 274.0 L124.0 273.7 L126.0 273.3 L128.0 272.9 L130.0 272.4 L132.0 271.9 L134.0 271.4 L136.0 270.8 L138.0 270.1 L140.0 269.5 L142.0 268.8 L144.0 268.0 L146.0 267.3 L148.0 266.5 L150.0 265.6 L152.0 264.8 L154.0 263.9 L156.0 262.9 L158.0 262.0 L160.0 261.0 L162.0 260.0 L164.0 259.0 L166.0 257.9 L168.0 256.8 L170.0 255.7 L172.0 254.6 L174.0 253.5 L176.0 252.3 L178.0 251.1 L180.0 249.9 L182.0 248.7 L184.0 247.5 L186.0 246.3 L188.0 245.1 L190.0 243.8 L192.0 242.6 L194.0 241.3 L196.0 240.1 L198.0 238.8 L200.0 237.5 L202.0 236.3 L204.0 235.0 L206.0 233.8 L208.0 232.5 L210.0 231.3 L212.0 230.1 L214.0 228.9 L216.0 227.7 L218.0 226.5 L220.0 225.3 L222.0 224.1 L224.0 223.0 L226.0 221.9 L228.0 220.8 L230.0 219.7 L232.0 218.6 L234.0 217.6 L236.0 216.6 L238.0 215.6 L240.0 214.7 L242.0 213.7 L244.0 212.8 L246.0 212.0 L248.0 211.1 L250.0 210.3 L252.0 209.6 L254.0 208.8 L256.0 208.1 L258.0 207.5 L260.0 206.8 L262.0 206.2 L264.0 205.7 L266.0 205.2 L268.0 204.7 L270.0 204.3 L272.0 203.9 L274.0 203.6 L276.0 203.2 L278.0 203.0 L280.0 202.8 L282.0 202.6 L284.0 202.4 L286.0 202.4 L288.0 202.3 L290.0 202.3 L292.0 202.3 L294.0 202.4 L296.0 202.5 L298.0 202.7 L300.0 202.9 L302.0 203.2 L304.0 203.5 L306.0 203.8 L308.0 204.2 L310.0 204.6 L312.0 205.1 L314.0 205.6 L316.0 206.1 L318.0 206.7 L320.0 207.3 L322.0 207.9 L324.0 208.6 L326.0 209.4 L328.0 210.1 L330.0 210.9 L332.0 211.7 L334.0 212.6 L336.0 213.5 L338.0 214.4 L340.0 215.4 L342.0 216.3 L344.0 217.3 L346.0 218.4 L348.0 219.4 L350.0 220.5 L352.0 221.6 L354.0 222.7 L356.0 223.9 L358.0 225.0 L360.0 226.2 L362.0 227.4 L364.0 228.6 L366.0 229.8 L368.0 231.0 L370.0 232.2 L372.0 233.5 L374.0 234.7 L376.0 236.0 L378.0 237.2 L380.0 238.5 L382.0 239.7 L384.0 241.0 L386.0 242.3 L388.0 243.5 L390.0 244.7 L392.0 246.0 L394.0 247.2 L396.0 248.4 L398.0 249.6 L400.0 250.8 L402.0 252.0 L404.0 253.2 L406.0 254.3 L408.0 255.4 L410.0 256.5 L412.0 257.6 L414.0 258.7 L416.0 259.7 L418.0 260.8 L420.0 261.7 L422.0 262.7 L424.0 263.6 L426.0 264.6 L428.0 265.4 L430.0 266.3 L432.0 267.1 L434.0 267.9 L436.0 268.6 L438.0 269.3 L440.0 270.0 L442.0 270.6 L444.0 271.2 L446.0 271.8 L448.0 272.3 L450.0 272.8 L452.0 273.2 L454.0 273.6 L456.0 274.0 L458.0 274.3 L460.0 274.6 L462.0 274.8 L464.0 275.0 L466.0 275.1 L468.0 275.2 L470.0 275.3 L472.0 275.3 L474.0 275.3 L476.0 275.2 L478.0 275.1 L480.0 274.9 L482.0 274.7 L484.0 274.5 L486.0 274.2 L488.0 273.9 L490.0 273.5 L492.0 273.1 L494.0 272.7 L496.0 272.2 L498.0 271.6 L500.0 271.1 L502.0 270.5 L504.0 269.8 L506.0 269.1 L508.0 268.4 L510.0 267.7 L512.0 266.9 L514.0 266.1 L516.0 265.2 L518.0 264.3 L520.0 263.4 L522.0 262.5 L524.0 261.5 L526.0 260.5 L528.0 259.5 L530.0 258.4 L532.0 257.4 L534.0 256.3 L536.0 255.2 L538.0 254.0 L540.0 252.9 L542.0 251.7 L544.0 250.5 L546.0 249.3 L548.0 248.1 L550.0 246.9 L552.0 245.7 L554.0 244.4 L556.0 243.2 L558.0 241.9 L560.0 240.7 L562.0 239.4 L564.0 238.2 L566.0 236.9 L568.0 235.7 L570.0 234.4 L572.0 233.2 L574.0 231.9 L576.0 230.7 L578.0 229.5 L580.0 228.3 L582.0 227.1 L584.0 225.9 L586.0 224.7 L588.0 223.6 L590.0 222.4 L592.0 221.3 L594.0 220.2 L596.0 219.2 L598.0 218.1 L600.0 217.1 L602.0 216.1 L604.0 215.1 L606.0 214.2 L608.0 213.3 L610.0 212.4 L612.0 211.5 L614.0 210.7 L616.0 209.9 L618.0 209.2 L620.0 208.5 L622.0 207.8 L624.0 207.1 L626.0 206.5 L628.0 206.0 L630.0 205.4 L632.0 204.9 L634.0 204.5 L636.0 204.1 L638.0 203.7 L640.0 203.4 L642.0 203.1 L644.0 202.9 L646.0 202.7 L648.0 202.5 L650.0 202.4 L652.0 202.3 L654.0 202.3 L656.0 202.3 L658.0 202.4 L660.0 202.5 L662.0 202.6 L664.0 202.8 L666.0 203.0 L668.0 203.3 L670.0 203.6 L672.0 204.0 L674.0 204.4 L676.0 204.8 L678.0 205.3 L680.0 205.8 L682.0 206.4 L684.0 207.0 L686.0 207.6 L688.0 208.3 L690.0 209.0 L692.0 209.7 L694.0 210.5 L696.0 211.3 L698.0 212.2 L700.0 213.0 L702.0 214.0 L704.0 214.9 L706.0 215.9 L708.0 216.8 L710.0 217.9 L712.0 218.9 L714.0 220.0 L716.0 221.1 L718.0 222.2 L720.0 223.3 L722.0 224.4 L724.0 225.6 L726.0 226.8 L728.0 228.0 L730.0 229.2 L732.0 230.4 L734.0 231.6 L736.0 232.9 L738.0 234.1 L740.0 235.3 L742.0 236.6 L744.0 237.9 L746.0 239.1 L748.0 240.4 L750.0 241.6 L752.0 242.9 L754.0 244.1 L756.0 245.4 L758.0 246.6 L760.0 247.8 L762.0 249.0 L764.0 250.2 L766.0 251.4 L768.0 252.6 L770.0 253.7 L772.0 254.9 L774.0 256.0 L776.0 257.1 L778.0 258.2 L780.0 259.2 L782.0 260.3 L784.0 261.3 L786.0 262.2 L788.0 263.2 L790.0 264.1 L792.0 265.0 L794.0 265.9 L796.0 266.7 L798.0 267.5 L800.0 268.2 L802.0 269.0 L804.0 269.7 L806.0 270.3 L808.0 270.9 L810.0 271.5 L812.0 272.0 L814.0 272.5 L816.0 273.0 L818.0 273.4 L820.0 273.8 L822.0 274.1 L824.0 274.4 L826.0 274.7 L828.0 274.9 L830.0 275.1 L832.0 275.2 L834.0 275.3 L836.0 275.3 L838.0 275.3 L840.0 275.2 L842.0 275.2 L844.0 275.0 L846.0 274.8 L848.0 274.6 L850.0 274.4 L852.0 274.0 L854.0 273.7 L856.0 273.3 L858.0 272.9 L860.0 272.4 L862.0 271.9 L864.0 271.4 L866.0 270.8 L868.0 270.1 L870.0 269.5 L872.0 268.8 L874.0 268.0 L876.0 267.3 L878.0 266.5 L880.0 265.6 L882.0 264.8 L884.0 263.9 L886.0 262.9 L888.0 262.0 L890.0 261.0 L892.0 260.0 L894.0 259.0 L896.0 257.9 L898.0 256.8" stroke="#388c46" stroke-opacity="0.7" stroke-width="3.1" fill="none" stroke-linejoin="round" stroke-linecap="round"/>
<path d="M-4 238.80H899" stroke="#6042a6" stroke-opacity="0.7" stroke-width="3.1" fill="none" stroke-linejoin="round" stroke-linecap="round"/>
<path d="M-4 202.30H899" stroke="#c74440" stroke-opacity="0.7" stroke-width="3.1" fill="none" stroke-linejoin="round" stroke-linecap="round"/>
<path d="M-4 275.30H899" stroke="#2d70b3" stroke-opacity="0.7" stroke-width="3.1" fill="none" stroke-linejoin="round" stroke-linecap="round"/>
<path d="M-4.0 719.2 L-3.8 726.3 L-3.5 733.1 L-3.2 739.6 L-3.0 745.7 L-2.8 751.4 L-2.5 756.8 L-2.2 761.7 L-2.0 766.2 L-1.8 770.3 L-1.5 773.9 L-1.2 777.1 L-1.0 779.8 L-0.8 782.1 L-0.5 783.9 L-0.2 785.2 L0.0 786.0 L0.2 786.3 L0.5 786.1 L0.8 785.5 L1.0 784.3 L1.2 782.7 L1.5 780.6 L1.8 778.1 L2.0 775.1 L2.2 771.6 L2.5 767.6 L2.8 763.3 L3.0 758.5 L3.2 753.3 L3.5 747.7 L3.8 741.7 L4.0 735.3 L4.2 728.6 L4.5 721.6 L4.8 714.2 L5.0 706.6 L5.2 698.7 L5.5 690.5 L5.8 682.1 L6.0 673.5 L6.2 664.7 L6.5 655.7 L6.8 646.6 L7.0 637.4 L7.2 628.1 L7.5 618.7 L7.8 609.3 L8.0 599.9 L8.2 590.5 L8.5 581.1 L8.8 571.8 L9.0 562.5 L9.2 553.4 L9.5 544.4 L9.8 535.6 L10.0 526.9 L10.2 518.5 L10.5 510.3 L10.8 502.3 L11.0 494.6 L11.2 487.2 L11.5 480.1 L11.8 473.4 L12.0 467.0 L12.2 460.9 L12.5 455.2 L12.8 450.0 L13.0 445.1 L13.2 440.7 L13.5 436.7 L13.8 433.1 L14.0 430.0 L14.2 427.4 L14.5 425.2 L14.8 423.5 L15.0 422.3 L15.2 421.5 L15.5 421.3 L15.8 421.5 L16.0 422.3 L16.2 423.5 L16.5 425.2 L16.8 427.4 L17.0 430.0 L17.2 433.1 L17.5 436.7 L17.8 440.7 L18.0 445.1 L18.2 450.0 L18.5 455.2 L18.8 460.9 L19.0 467.0 L19.2 473.4 L19.5 480.1 L19.8 487.2 L20.0 494.6 L20.2 502.3 L20.5 510.3 L20.8 518.5 L21.0 526.9 L21.2 535.6 L21.5 544.4 L21.8 553.4 L22.0 562.5 L22.2 571.8 L22.5 581.1 L22.8 590.5 L23.0 599.9 L23.2 609.3 L23.5 618.7 L23.8 628.1 L24.0 637.4 L24.2 646.6 L24.5 655.7 L24.8 664.7 L25.0 673.5 L25.2 682.1 L25.5 690.5 L25.8 698.7 L26.0 706.6 L26.2 714.2 L26.5 721.6 L26.8 728.6 L27.0 735.3 L27.2 741.7 L27.5 747.7 L27.8 753.3 L28.0 758.5 L28.2 763.3 L28.5 767.6 L28.8 771.6 L29.0 775.1 L29.2 778.1 L29.5 780.6 L29.8 782.7 L30.0 784.3 L30.2 785.5 L30.5 786.1 L30.8 786.3 L31.0 786.0 L31.2 785.2 L31.5 783.9 L31.8 782.1 L32.0 779.8 L32.2 777.1 L32.5 773.9 L32.8 770.3 L33.0 766.2 L33.2 761.7 L33.5 756.8 L33.8 751.4 L34.0 745.7 L34.2 739.6 L34.5 733.1 L34.8 726.3 L35.0 719.2 L35.2 711.7 L35.5 704.0 L35.8 696.0 L36.0 687.7 L36.2 679.2 L36.5 670.5 L36.8 661.7 L37.0 652.7 L37.2 643.5 L37.5 634.3 L37.8 625.0 L38.0 615.6 L38.2 606.2 L38.5 596.7 L38.8 587.3 L39.0 578.0 L39.2 568.7 L39.5 559.5 L39.8 550.4 L40.0 541.5 L40.2 532.7 L40.5 524.1 L40.8 515.7 L41.0 507.6 L41.2 499.7 L41.5 492.1 L41.8 484.8 L42.0 477.8 L42.2 471.2 L42.5 464.9 L42.8 459.0 L43.0 453.4 L43.2 448.3 L43.5 443.6 L43.8 439.3 L44.0 435.4 L44.2 432.0 L44.5 429.1 L44.8 426.6 L45.0 424.6 L45.2 423.0 L45.5 422.0 L45.8 421.4 L46.0 421.3 L46.2 421.7 L46.5 422.6 L46.8 424.0 L47.0 425.9 L47.2 428.2 L47.5 431.0 L47.8 434.2 L48.0 437.9 L48.2 442.1 L48.5 446.7 L48.8 451.7 L49.0 457.1 L49.2 462.9 L49.5 469.1 L49.8 475.6 L50.0 482.5 L50.2 489.7 L50.5 497.2 L50.8 505.0 L51.0 513.0 L51.2 521.3 L51.5 529.8 L51.8 538.5 L52.0 547.4 L52.2 556.4 L52.5 565.6 L52.8 574.9 L53.0 584.2 L53.2 593.6 L53.5 603.0 L53.8 612.4 L54.0 621.8 L54.2 631.2 L54.5 640.5 L54.8 649.6 L55.0 658.7 L55.2 667.6 L55.5 676.4 L55.8 684.9 L56.0 693.2 L56.2 701.3 L56.5 709.2 L56.8 716.7 L57.0 724.0 L57.2 730.9 L57.5 737.5 L57.8 743.7 L58.0 749.6 L58.2 755.1 L58.5 760.1 L58.8 764.8 L59.0 769.0 L59.2 772.8 L59.5 776.1 L59.8 779.0 L60.0 781.4 L60.2 783.3 L60.5 784.8 L60.8 785.8 L61.0 786.2 L61.2 786.2 L61.5 785.8 L61.8 784.8 L62.0 783.3 L62.2 781.4 L62.5 779.0 L62.8 776.1 L63.0 772.8 L63.2 769.0 L63.5 764.8 L63.8 760.1 L64.0 755.1 L64.2 749.6 L64.5 743.7 L64.8 737.5 L65.0 730.9 L65.2 724.0 L65.5 716.7 L65.8 709.2 L66.0 701.3 L66.2 693.2 L66.5 684.9 L66.8 676.4 L67.0 667.6 L67.2 658.7 L67.5 649.6 L67.8 640.5 L68.0 631.2 L68.2 621.8 L68.5 612.4 L68.8 603.0 L69.0 593.6 L69.2 584.2 L69.5 574.9 L69.8 565.6 L70.0 556.4 L70.2 547.4 L70.5 538.5 L70.8 529.8 L71.0 521.3 L71.2 513.0 L71.5 505.0 L71.8 497.2 L72.0 489.7 L72.2 482.5 L72.5 475.6 L72.8 469.1 L73.0 462.9 L73.2 457.1 L73.5 451.7 L73.8 446.7 L74.0 442.1 L74.2 437.9 L74.5 434.2 L74.8 431.0 L75.0 428.2 L75.2 425.9 L75.5 424.0 L75.8 422.6 L76.0 421.7 L76.2 421.3 L76.5 421.4 L76.8 422.0 L77.0 423.0 L77.2 424.6 L77.5 426.6 L77.8 429.1 L78.0 432.0 L78.2 435.4 L78.5 439.3 L78.8 443.6 L79.0 448.3 L79.2 453.4 L79.5 459.0 L79.8 464.9 L80.0 471.2 L80.2 477.8 L80.5 484.8 L80.8 492.1 L81.0 499.7 L81.2 507.6 L81.5 515.7 L81.8 524.1 L82.0 532.7 L82.2 541.5 L82.5 550.4 L82.8 559.5 L83.0 568.7 L83.2 578.0 L83.5 587.3 L83.8 596.7 L84.0 606.2 L84.2 615.6 L84.5 625.0 L84.8 634.3 L85.0 643.5 L85.2 652.7 L85.5 661.7 L85.8 670.5 L86.0 679.2 L86.2 687.7 L86.5 696.0 L86.8 704.0 L87.0 711.7 L87.2 719.2 L87.5 726.3 L87.8 733.1 L88.0 739.6 L88.2 745.7 L88.5 751.4 L88.8 756.8 L89.0 761.7 L89.2 766.2 L89.5 770.3 L89.8 773.9 L90.0 777.1 L90.2 779.8 L90.5 782.1 L90.8 783.9 L91.0 785.2 L91.2 786.0 L91.5 786.3 L91.8 786.1 L92.0 785.5 L92.2 784.3 L92.5 782.7 L92.8 780.6 L93.0 778.1 L93.2 775.1 L93.5 771.6 L93.8 767.6 L94.0 763.3 L94.2 758.5 L94.5 753.3 L94.8 747.7 L95.0 741.7 L95.2 735.3 L95.5 728.6 L95.8 721.6 L96.0 714.2 L96.2 706.6 L96.5 698.7 L96.8 690.5 L97.0 682.1 L97.2 673.5 L97.5 664.7 L97.8 655.7 L98.0 646.6 L98.2 637.4 L98.5 628.1 L98.8 618.7 L99.0 609.3 L99.2 599.9 L99.5 590.5 L99.8 581.1 L100.0 571.8 L100.2 562.5 L100.5 553.4 L100.8 544.4 L101.0 535.6 L101.2 526.9 L101.5 518.5 L101.8 510.3 L102.0 502.3 L102.2 494.6 L102.5 487.2 L102.8 480.1 L103.0 473.4 L103.2 467.0 L103.5 460.9 L103.8 455.2 L104.0 450.0 L104.2 445.1 L104.5 440.7 L104.8 436.7 L105.0 433.1 L105.2 430.0 L105.5 427.4 L105.8 425.2 L106.0 423.5 L106.2 422.3 L106.5 421.5 L106.8 421.3 L107.0 421.5 L107.2 422.3 L107.5 423.5 L107.8 425.2 L108.0 427.4 L108.2 430.0 L108.5 433.1 L108.8 436.7 L109.0 440.7 L109.2 445.1 L109.5 450.0 L109.8 455.2 L110.0 460.9 L110.2 467.0 L110.5 473.4 L110.8 480.1 L111.0 487.2 L111.2 494.6 L111.5 502.3 L111.8 510.3 L112.0 518.5 L112.2 526.9 L112.5 535.6 L112.8 544.4 L113.0 553.4 L113.2 562.5 L113.5 571.8 L113.8 581.1 L114.0 590.5 L114.2 599.9 L114.5 609.3 L114.8 618.7 L115.0 628.1 L115.2 637.4 L115.5 646.6 L115.8 655.7 L116.0 664.7 L116.2 673.5 L116.5 682.1 L116.8 690.5 L117.0 698.7 L117.2 706.6 L117.5 714.2 L117.8 721.6 L118.0 728.6 L118.2 735.3 L118.5 741.7 L118.8 747.7 L119.0 753.3 L119.2 758.5 L119.5 763.3 L119.8 767.6 L120.0 771.6 L120.2 775.1 L120.5 778.1 L120.8 780.6 L121.0 782.7 L121.2 784.3 L121.5 785.5 L121.8 786.1 L122.0 786.3 L122.2 786.0 L122.5 785.2 L122.8 783.9 L123.0 782.1 L123.2 779.8 L123.5 777.1 L123.8 773.9 L124.0 770.3 L124.2 766.2 L124.5 761.7 L124.8 756.8 L125.0 751.4 L125.2 745.7 L125.5 739.6 L125.8 733.1 L126.0 726.3 L126.2 719.2 L126.5 711.7 L126.8 704.0 L127.0 696.0 L127.2 687.7 L127.5 679.2 L127.8 670.5 L128.0 661.7 L128.2 652.7 L128.5 643.5 L128.8 634.3 L129.0 625.0 L129.2 615.6 L129.5 606.2 L129.8 596.7 L130.0 587.3 L130.2 578.0 L130.5 568.7 L130.8 559.5 L131.0 550.4 L131.2 541.5 L131.5 532.7 L131.8 524.1 L132.0 515.7 L132.2 507.6 L132.5 499.7 L132.8 492.1 L133.0 484.8 L133.2 477.8 L133.5 471.2 L133.8 464.9 L134.0 459.0 L134.2 453.4 L134.5 448.3 L134.8 443.6 L135.0 439.3 L135.2 435.4 L135.5 432.0 L135.8 429.1 L136.0 426.6 L136.2 424.6 L136.5 423.0 L136.8 422.0 L137.0 421.4 L137.2 421.3 L137.5 421.7 L137.8 422.6 L138.0 424.0 L138.2 425.9 L138.5 428.2 L138.8 431.0 L139.0 434.2 L139.2 437.9 L139.5 442.1 L139.8 446.7 L140.0 451.7 L140.2 457.1 L140.5 462.9 L140.8 469.1 L141.0 475.6 L141.2 482.5 L141.5 489.7 L141.8 497.2 L142.0 505.0 L142.2 513.0 L142.5 521.3 L142.8 529.8 L143.0 538.5 L143.2 547.4 L143.5 556.4 L143.8 565.6 L144.0 574.9 L144.2 584.2 L144.5 593.6 L144.8 603.0 L145.0 612.4 L145.2 621.8 L145.5 631.2 L145.8 640.5 L146.0 649.6 L146.2 658.7 L146.5 667.6 L146.8 676.4 L147.0 684.9 L147.2 693.2 L147.5 701.3 L147.8 709.2 L148.0 716.7 L148.2 724.0 L148.5 730.9 L148.8 737.5 L149.0 743.7 L149.2 749.6 L149.5 755.1 L149.8 760.1 L150.0 764.8 L150.2 769.0 L150.5 772.8 L150.8 776.1 L151.0 779.0 L151.2 781.4 L151.5 783.3 L151.8 784.8 L152.0 785.8 L152.2 786.2 L152.5 786.2 L152.8 785.8 L153.0 784.8 L153.2 783.3 L153.5 781.4 L153.8 779.0 L154.0 776.1 L154.2 772.8 L154.5 769.0 L154.8 764.8 L155.0 760.1 L155.2 755.1 L155.5 749.6 L155.8 743.7 L156.0 737.5 L156.2 730.9 L156.5 724.0 L156.8 716.7 L157.0 709.2 L157.2 701.3 L157.5 693.2 L157.8 684.9 L158.0 676.4 L158.2 667.6 L158.5 658.7 L158.8 649.6 L159.0 640.5 L159.2 631.2 L159.5 621.8 L159.8 612.4 L160.0 603.0 L160.2 593.6 L160.5 584.2 L160.8 574.9 L161.0 565.6 L161.2 556.4 L161.5 547.4 L161.8 538.5 L162.0 529.8 L162.2 521.3 L162.5 513.0 L162.8 505.0 L163.0 497.2 L163.2 489.7 L163.5 482.5 L163.8 475.6 L164.0 469.1 L164.2 462.9 L164.5 457.1 L164.8 451.7 L165.0 446.7 L165.2 442.1 L165.5 437.9 L165.8 434.2 L166.0 431.0 L166.2 428.2 L166.5 425.9 L166.8 424.0 L167.0 422.6 L167.2 421.7 L167.5 421.3 L167.8 421.4 L168.0 422.0 L168.2 423.0 L168.5 424.6 L168.8 426.6 L169.0 429.1 L169.2 432.0 L169.5 435.4 L169.8 439.3 L170.0 443.6 L170.2 448.3 L170.5 453.4 L170.8 459.0 L171.0 464.9 L171.2 471.2 L171.5 477.8 L171.8 484.8 L172.0 492.1 L172.2 499.7 L172.5 507.6 L172.8 515.7 L173.0 524.1 L173.2 532.7 L173.5 541.5 L173.8 550.4 L174.0 559.5 L174.2 568.7 L174.5 578.0 L174.8 587.3 L175.0 596.7 L175.2 606.2 L175.5 615.6 L175.8 625.0 L176.0 634.3 L176.2 643.5 L176.5 652.7 L176.8 661.7 L177.0 670.5 L177.2 679.2 L177.5 687.7 L177.8 696.0 L178.0 704.0 L178.2 711.7 L178.5 719.2 L178.8 726.3 L179.0 733.1 L179.2 739.6 L179.5 745.7 L179.8 751.4 L180.0 756.8 L180.2 761.7 L180.5 766.2 L180.8 770.3 L181.0 773.9 L181.2 777.1 L181.5 779.8 L181.8 782.1 L182.0 783.9 L182.2 785.2 L182.5 786.0 L182.8 786.3 L183.0 786.1 L183.2 785.5 L183.5 784.3 L183.8 782.7 L184.0 780.6 L184.2 778.1 L184.5 775.1 L184.8 771.6 L185.0 767.6 L185.2 763.3 L185.5 758.5 L185.8 753.3 L186.0 747.7 L186.2 741.7 L186.5 735.3 L186.8 728.6 L187.0 721.6 L187.2 714.2 L187.5 706.6 L187.8 698.7 L188.0 690.5 L188.2 682.1 L188.5 673.5 L188.8 664.7 L189.0 655.7 L189.2 646.6 L189.5 637.4 L189.8 628.1 L190.0 618.7 L190.2 609.3 L190.5 599.9 L190.8 590.5 L191.0 581.1 L191.2 571.8 L191.5 562.5 L191.8 553.4 L192.0 544.4 L192.2 535.6 L192.5 526.9 L192.8 518.5 L193.0 510.3 L193.2 502.3 L193.5 494.6 L193.8 487.2 L194.0 480.1 L194.2 473.4 L194.5 467.0 L194.8 460.9 L195.0 455.2 L195.2 450.0 L195.5 445.1 L195.8 440.7 L196.0 436.7 L196.2 433.1 L196.5 430.0 L196.8 427.4 L197.0 425.2 L197.2 423.5 L197.5 422.3 L197.8 421.5 L198.0 421.3 L198.2 421.5 L198.5 422.3 L198.8 423.5 L199.0 425.2 L199.2 427.4 L199.5 430.0 L199.8 433.1 L200.0 436.7 L200.2 440.7 L200.5 445.1 L200.8 450.0 L201.0 455.2 L201.2 460.9 L201.5 467.0 L201.8 473.4 L202.0 480.1 L202.2 487.2 L202.5 494.6 L202.8 502.3 L203.0 510.3 L203.2 518.5 L203.5 526.9 L203.8 535.6 L204.0 544.4 L204.2 553.4 L204.5 562.5 L204.8 571.8 L205.0 581.1 L205.2 590.5 L205.5 599.9 L205.8 609.3 L206.0 618.7 L206.2 628.1 L206.5 637.4 L206.8 646.6 L207.0 655.7 L207.2 664.7 L207.5 673.5 L207.8 682.1 L208.0 690.5 L208.2 698.7 L208.5 706.6 L208.8 714.2 L209.0 721.6 L209.2 728.6 L209.5 735.3 L209.8 741.7 L210.0 747.7 L210.2 753.3 L210.5 758.5 L210.8 763.3 L211.0 767.6 L211.2 771.6 L211.5 775.1 L211.8 778.1 L212.0 780.6 L212.2 782.7 L212.5 784.3 L212.8 785.5 L213.0 786.1 L213.2 786.3 L213.5 786.0 L213.8 785.2 L214.0 783.9 L214.2 782.1 L214.5 779.8 L214.8 777.1 L215.0 773.9 L215.2 770.3 L215.5 766.2 L215.8 761.7 L216.0 756.8 L216.2 751.4 L216.5 745.7 L216.8 739.6 L217.0 733.1 L217.2 726.3 L217.5 719.2 L217.8 711.7 L218.0 704.0 L218.2 696.0 L218.5 687.7 L218.8 679.2 L219.0 670.5 L219.2 661.7 L219.5 652.7 L219.8 643.5 L220.0 634.3 L220.2 625.0 L220.5 615.6 L220.8 606.2 L221.0 596.7 L221.2 587.3 L221.5 578.0 L221.8 568.7 L222.0 559.5 L222.2 550.4 L222.5 541.5 L222.8 532.7 L223.0 524.1 L223.2 515.7 L223.5 507.6 L223.8 499.7 L224.0 492.1 L224.2 484.8 L224.5 477.8 L224.8 471.2 L225.0 464.9 L225.2 459.0 L225.5 453.4 L225.8 448.3 L226.0 443.6 L226.2 439.3 L226.5 435.4 L226.8 432.0 L227.0 429.1 L227.2 426.6 L227.5 424.6 L227.8 423.0 L228.0 422.0 L228.2 421.4 L228.5 421.3 L228.8 421.7 L229.0 422.6 L229.2 424.0 L229.5 425.9 L229.8 428.2 L230.0 431.0 L230.2 434.2 L230.5 437.9 L230.8 442.1 L231.0 446.7 L231.2 451.7 L231.5 457.1 L231.8 462.9 L232.0 469.1 L232.2 475.6 L232.5 482.5 L232.8 489.7 L233.0 497.2 L233.2 505.0 L233.5 513.0 L233.8 521.3 L234.0 529.8 L234.2 538.5 L234.5 547.4 L234.8 556.4 L235.0 565.6 L235.2 574.9 L235.5 584.2 L235.8 593.6 L236.0 603.0 L236.2 612.4 L236.5 621.8 L236.8 631.2 L237.0 640.5 L237.2 649.6 L237.5 658.7 L237.8 667.6 L238.0 676.4 L238.2 684.9 L238.5 693.2 L238.8 701.3 L239.0 709.2 L239.2 716.7 L239.5 724.0 L239.8 730.9 L240.0 737.5 L240.2 743.7 L240.5 749.6 L240.8 755.1 L241.0 760.1 L241.2 764.8 L241.5 769.0 L241.8 772.8 L242.0 776.1 L242.2 779.0 L242.5 781.4 L242.8 783.3 L243.0 784.8 L243.2 785.8 L243.5 786.2 L243.8 786.2 L244.0 785.8 L244.2 784.8 L244.5 783.3 L244.8 781.4 L245.0 779.0 L245.2 776.1 L245.5 772.8 L245.8 769.0 L246.0 764.8 L246.2 760.1 L246.5 755.1 L246.8 749.6 L247.0 743.7 L247.2 737.5 L247.5 730.9 L247.8 724.0 L248.0 716.7 L248.2 709.2 L248.5 701.3 L248.8 693.2 L249.0 684.9 L249.2 676.4 L249.5 667.6 L249.8 658.7 L250.0 649.6 L250.2 640.5 L250.5 631.2 L250.8 621.8 L251.0 612.4 L251.2 603.0 L251.5 593.6 L251.8 584.2 L252.0 574.9 L252.2 565.6 L252.5 556.4 L252.8 547.4 L253.0 538.5 L253.2 529.8 L253.5 521.3 L253.8 513.0 L254.0 505.0 L254.2 497.2 L254.5 489.7 L254.8 482.5 L255.0 475.6 L255.2 469.1 L255.5 462.9 L255.8 457.1 L256.0 451.7 L256.2 446.7 L256.5 442.1 L256.8 437.9 L257.0 434.2 L257.2 431.0 L257.5 428.2 L257.8 425.9 L258.0 424.0 L258.2 422.6 L258.5 421.7 L258.8 421.3 L259.0 421.4 L259.2 422.0 L259.5 423.0 L259.8 424.6 L260.0 426.6 L260.2 429.1 L260.5 432.0 L260.8 435.4 L261.0 439.3 L261.2 443.6 L261.5 448.3 L261.8 453.4 L262.0 459.0 L262.2 464.9 L262.5 471.2 L262.8 477.8 L263.0 484.8 L263.2 492.1 L263.5 499.7 L263.8 507.6 L264.0 515.7 L264.2 524.1 L264.5 532.7 L264.8 541.5 L265.0 550.4 L265.2 559.5 L265.5 568.7 L265.8 578.0 L266.0 587.3 L266.2 596.7 L266.5 606.2 L266.8 615.6 L267.0 625.0 L267.2 634.3 L267.5 643.5 L267.8 652.7 L268.0 661.7 L268.2 670.5 L268.5 679.2 L268.8 687.7 L269.0 696.0 L269.2 704.0 L269.5 711.7 L269.8 719.2 L270.0 726.3 L270.2 733.1 L270.5 739.6 L270.8 745.7 L271.0 751.4 L271.2 756.8 L271.5 761.7 L271.8 766.2 L272.0 770.3 L272.2 773.9 L272.5 777.1 L272.8 779.8 L273.0 782.1 L273.2 783.9 L273.5 785.2 L273.8 786.0 L274.0 786.3 L274.2 786.1 L274.5 785.5 L274.8 784.3 L275.0 782.7 L275.2 780.6 L275.5 778.1 L275.8 775.1 L276.0 771.6 L276.2 767.6 L276.5 763.3 L276.8 758.5 L277.0 753.3 L277.2 747.7 L277.5 741.7 L277.8 735.3 L278.0 728.6 L278.2 721.6 L278.5 714.2 L278.8 706.6 L279.0 698.7 L279.2 690.5 L279.5 682.1 L279.8 673.5 L280.0 664.7 L280.2 655.7 L280.5 646.6 L280.8 637.4 L281.0 628.1 L281.2 618.7 L281.5 609.3 L281.8 599.9 L282.0 590.5 L282.2 581.1 L282.5 571.8 L282.8 562.5 L283.0 553.4 L283.2 544.4 L283.5 535.6 L283.8 526.9 L284.0 518.5 L284.2 510.3 L284.5 502.3 L284.8 494.6 L285.0 487.2 L285.2 480.1 L285.5 473.4 L285.8 467.0 L286.0 460.9 L286.2 455.2 L286.5 450.0 L286.8 445.1 L287.0 440.7 L287.2 436.7 L287.5 433.1 L287.8 430.0 L288.0 427.4 L288.2 425.2 L288.5 423.5 L288.8 422.3 L289.0 421.5 L289.2 421.3 L289.5 421.5 L289.8 422.3 L290.0 423.5 L290.2 425.2 L290.5 427.4 L290.8 430.0 L291.0 433.1 L291.2 436.7 L291.5 440.7 L291.8 445.1 L292.0 450.0 L292.2 455.2 L292.5 460.9 L292.8 467.0 L293.0 473.4 L293.2 480.1 L293.5 487.2 L293.8 494.6 L294.0 502.3 L294.2 510.3 L294.5 518.5 L294.8 526.9 L295.0 535.6 L295.2 544.4 L295.5 553.4 L295.8 562.5 L296.0 571.8 L296.2 581.1 L296.5 590.5 L296.8 599.9 L297.0 609.3 L297.2 618.7 L297.5 628.1 L297.8 637.4 L298.0 646.6 L298.2 655.7 L298.5 664.7 L298.8 673.5 L299.0 682.1 L299.2 690.5 L299.5 698.7 L299.8 706.6 L300.0 714.2 L300.2 721.6 L300.5 728.6 L300.8 735.3 L301.0 741.7 L301.2 747.7 L301.5 753.3 L301.8 758.5 L302.0 763.3 L302.2 767.6 L302.5 771.6 L302.8 775.1 L303.0 778.1 L303.2 780.6 L303.5 782.7 L303.8 784.3 L304.0 785.5 L304.2 786.1 L304.5 786.3 L304.8 786.0 L305.0 785.2 L305.2 783.9 L305.5 782.1 L305.8 779.8 L306.0 777.1 L306.2 773.9 L306.5 770.3 L306.8 766.2 L307.0 761.7 L307.2 756.8 L307.5 751.4 L307.8 745.7 L308.0 739.6 L308.2 733.1 L308.5 726.3 L308.8 719.2 L309.0 711.7 L309.2 704.0 L309.5 696.0 L309.8 687.7 L310.0 679.2 L310.2 670.5 L310.5 661.7 L310.8 652.7 L311.0 643.5 L311.2 634.3 L311.5 625.0 L311.8 615.6 L312.0 606.2 L312.2 596.7 L312.5 587.3 L312.8 578.0 L313.0 568.7 L313.2 559.5 L313.5 550.4 L313.8 541.5 L314.0 532.7 L314.2 524.1 L314.5 515.7 L314.8 507.6 L315.0 499.7 L315.2 492.1 L315.5 484.8 L315.8 477.8 L316.0 471.2 L316.2 464.9 L316.5 459.0 L316.8 453.4 L317.0 448.3 L317.2 443.6 L317.5 439.3 L317.8 435.4 L318.0 432.0 L318.2 429.1 L318.5 426.6 L318.8 424.6 L319.0 423.0 L319.2 422.0 L319.5 421.4 L319.8 421.3 L320.0 421.7 L320.2 422.6 L320.5 424.0 L320.8 425.9 L321.0 428.2 L321.2 431.0 L321.5 434.2 L321.8 437.9 L322.0 442.1 L322.2 446.7 L322.5 451.7 L322.8 457.1 L323.0 462.9 L323.2 469.1 L323.5 475.6 L323.8 482.5 L324.0 489.7 L324.2 497.2 L324.5 505.0 L324.8 513.0 L325.0 521.3 L325.2 529.8 L325.5 538.5 L325.8 547.4 L326.0 556.4 L326.2 565.6 L326.5 574.9 L326.8 584.2 L327.0 593.6 L327.2 603.0 L327.5 612.4 L327.8 621.8 L328.0 631.2 L328.2 640.5 L328.5 649.6 L328.8 658.7 L329.0 667.6 L329.2 676.4 L329.5 684.9 L329.8 693.2 L330.0 701.3 L330.2 709.2 L330.5 716.7 L330.8 724.0 L331.0 730.9 L331.2 737.5 L331.5 743.7 L331.8 749.6 L332.0 755.1 L332.2 760.1 L332.5 764.8 L332.8 769.0 L333.0 772.8 L333.2 776.1 L333.5 779.0 L333.8 781.4 L334.0 783.3 L334.2 784.8 L334.5 785.8 L334.8 786.2 L335.0 786.2 L335.2 785.8 L335.5 784.8 L335.8 783.3 L336.0 781.4 L336.2 779.0 L336.5 776.1 L336.8 772.8 L337.0 769.0 L337.2 764.8 L337.5 760.1 L337.8 755.1 L338.0 749.6 L338.2 743.7 L338.5 737.5 L338.8 730.9 L339.0 724.0 L339.2 716.7 L339.5 709.2 L339.8 701.3 L340.0 693.2 L340.2 684.9 L340.5 676.4 L340.8 667.6 L341.0 658.7 L341.2 649.6 L341.5 640.5 L341.8 631.2 L342.0 621.8 L342.2 612.4 L342.5 603.0 L342.8 593.6 L343.0 584.2 L343.2 574.9 L343.5 565.6 L343.8 556.4 L344.0 547.4 L344.2 538.5 L344.5 529.8 L344.8 521.3 L345.0 513.0 L345.2 505.0 L345.5 497.2 L345.8 489.7 L346.0 482.5 L346.2 475.6 L346.5 469.1 L346.8 462.9 L347.0 457.1 L347.2 451.7 L347.5 446.7 L347.8 442.1 L348.0 437.9 L348.2 434.2 L348.5 431.0 L348.8 428.2 L349.0 425.9 L349.2 424.0 L349.5 422.6 L349.8 421.7 L350.0 421.3 L350.2 421.4 L350.5 422.0 L350.8 423.0 L351.0 424.6 L351.2 426.6 L351.5 429.1 L351.8 432.0 L352.0 435.4 L352.2 439.3 L352.5 443.6 L352.8 448.3 L353.0 453.4 L353.2 459.0 L353.5 464.9 L353.8 471.2 L354.0 477.8 L354.2 484.8 L354.5 492.1 L354.8 499.7 L355.0 507.6 L355.2 515.7 L355.5 524.1 L355.8 532.7 L356.0 541.5 L356.2 550.4 L356.5 559.5 L356.8 568.7 L357.0 578.0 L357.2 587.3 L357.5 596.7 L357.8 606.2 L358.0 615.6 L358.2 625.0 L358.5 634.3 L358.8 643.5 L359.0 652.7 L359.2 661.7 L359.5 670.5 L359.8 679.2 L360.0 687.7 L360.2 696.0 L360.5 704.0 L360.8 711.7 L361.0 719.2 L361.2 726.3 L361.5 733.1 L361.8 739.6 L362.0 745.7 L362.2 751.4 L362.5 756.8 L362.8 761.7 L363.0 766.2 L363.2 770.3 L363.5 773.9 L363.8 777.1 L364.0 779.8 L364.2 782.1 L364.5 783.9 L364.8 785.2 L365.0 786.0 L365.2 786.3 L365.5 786.1 L365.8 785.5 L366.0 784.3 L366.2 782.7 L366.5 780.6 L366.8 778.1 L367.0 775.1 L367.2 771.6 L367.5 767.6 L367.8 763.3 L368.0 758.5 L368.2 753.3 L368.5 747.7 L368.8 741.7 L369.0 735.3 L369.2 728.6 L369.5 721.6 L369.8 714.2 L370.0 706.6 L370.2 698.7 L370.5 690.5 L370.8 682.1 L371.0 673.5 L371.2 664.7 L371.5 655.7 L371.8 646.6 L372.0 637.4 L372.2 628.1 L372.5 618.7 L372.8 609.3 L373.0 599.9 L373.2 590.5 L373.5 581.1 L373.8 571.8 L374.0 562.5 L374.2 553.4 L374.5 544.4 L374.8 535.6 L375.0 526.9 L375.2 518.5 L375.5 510.3 L375.8 502.3 L376.0 494.6 L376.2 487.2 L376.5 480.1 L376.8 473.4 L377.0 467.0 L377.2 460.9 L377.5 455.2 L377.8 450.0 L378.0 445.1 L378.2 440.7 L378.5 436.7 L378.8 433.1 L379.0 430.0 L379.2 427.4 L379.5 425.2 L379.8 423.5 L380.0 422.3 L380.2 421.5 L380.5 421.3 L380.8 421.5 L381.0 422.3 L381.2 423.5 L381.5 425.2 L381.8 427.4 L382.0 430.0 L382.2 433.1 L382.5 436.7 L382.8 440.7 L383.0 445.1 L383.2 450.0 L383.5 455.2 L383.8 460.9 L384.0 467.0 L384.2 473.4 L384.5 480.1 L384.8 487.2 L385.0 494.6 L385.2 502.3 L385.5 510.3 L385.8 518.5 L386.0 526.9 L386.2 535.6 L386.5 544.4 L386.8 553.4 L387.0 562.5 L387.2 571.8 L387.5 581.1 L387.8 590.5 L388.0 599.9 L388.2 609.3 L388.5 618.7 L388.8 628.1 L389.0 637.4 L389.2 646.6 L389.5 655.7 L389.8 664.7 L390.0 673.5 L390.2 682.1 L390.5 690.5 L390.8 698.7 L391.0 706.6 L391.2 714.2 L391.5 721.6 L391.8 728.6 L392.0 735.3 L392.2 741.7 L392.5 747.7 L392.8 753.3 L393.0 758.5 L393.2 763.3 L393.5 767.6 L393.8 771.6 L394.0 775.1 L394.2 778.1 L394.5 780.6 L394.8 782.7 L395.0 784.3 L395.2 785.5 L395.5 786.1 L395.8 786.3 L396.0 786.0 L396.2 785.2 L396.5 783.9 L396.8 782.1 L397.0 779.8 L397.2 777.1 L397.5 773.9 L397.8 770.3 L398.0 766.2 L398.2 761.7 L398.5 756.8 L398.8 751.4 L399.0 745.7 L399.2 739.6 L399.5 733.1 L399.8 726.3 L400.0 719.2 L400.2 711.7 L400.5 704.0 L400.8 696.0 L401.0 687.7 L401.2 679.2 L401.5 670.5 L401.8 661.7 L402.0 652.7 L402.2 643.5 L402.5 634.3 L402.8 625.0 L403.0 615.6 L403.2 606.2 L403.5 596.7 L403.8 587.3 L404.0 578.0 L404.2 568.7 L404.5 559.5 L404.8 550.4 L405.0 541.5 L405.2 532.7 L405.5 524.1 L405.8 515.7 L406.0 507.6 L406.2 499.7 L406.5 492.1 L406.8 484.8 L407.0 477.8 L407.2 471.2 L407.5 464.9 L407.8 459.0 L408.0 453.4 L408.2 448.3 L408.5 443.6 L408.8 439.3 L409.0 435.4 L409.2 432.0 L409.5 429.1 L409.8 426.6 L410.0 424.6 L410.2 423.0 L410.5 422.0 L410.8 421.4 L411.0 421.3 L411.2 421.7 L411.5 422.6 L411.8 424.0 L412.0 425.9 L412.2 428.2 L412.5 431.0 L412.8 434.2 L413.0 437.9 L413.2 442.1 L413.5 446.7 L413.8 451.7 L414.0 457.1 L414.2 462.9 L414.5 469.1 L414.8 475.6 L415.0 482.5 L415.2 489.7 L415.5 497.2 L415.8 505.0 L416.0 513.0 L416.2 521.3 L416.5 529.8 L416.8 538.5 L417.0 547.4 L417.2 556.4 L417.5 565.6 L417.8 574.9 L418.0 584.2 L418.2 593.6 L418.5 603.0 L418.8 612.4 L419.0 621.8 L419.2 631.2 L419.5 640.5 L419.8 649.6 L420.0 658.7 L420.2 667.6 L420.5 676.4 L420.8 684.9 L421.0 693.2 L421.2 701.3 L421.5 709.2 L421.8 716.7 L422.0 724.0 L422.2 730.9 L422.5 737.5 L422.8 743.7 L423.0 749.6 L423.2 755.1 L423.5 760.1 L423.8 764.8 L424.0 769.0 L424.2 772.8 L424.5 776.1 L424.8 779.0 L425.0 781.4 L425.2 783.3 L425.5 784.8 L425.8 785.8 L426.0 786.2 L426.2 786.2 L426.5 785.8 L426.8 784.8 L427.0 783.3 L427.2 781.4 L427.5 779.0 L427.8 776.1 L428.0 772.8 L428.2 769.0 L428.5 764.8 L428.8 760.1 L429.0 755.1 L429.2 749.6 L429.5 743.7 L429.8 737.5 L430.0 730.9 L430.2 724.0 L430.5 716.7 L430.8 709.2 L431.0 701.3 L431.2 693.2 L431.5 684.9 L431.8 676.4 L432.0 667.6 L432.2 658.7 L432.5 649.6 L432.8 640.5 L433.0 631.2 L433.2 621.8 L433.5 612.4 L433.8 603.0 L434.0 593.6 L434.2 584.2 L434.5 574.9 L434.8 565.6 L435.0 556.4 L435.2 547.4 L435.5 538.5 L435.8 529.8 L436.0 521.3 L436.2 513.0 L436.5 505.0 L436.8 497.2 L437.0 489.7 L437.2 482.5 L437.5 475.6 L437.8 469.1 L438.0 462.9 L438.2 457.1 L438.5 451.7 L438.8 446.7 L439.0 442.1 L439.2 437.9 L439.5 434.2 L439.8 431.0 L440.0 428.2 L440.2 425.9 L440.5 424.0 L440.8 422.6 L441.0 421.7 L441.2 421.3 L441.5 421.4 L441.8 422.0 L442.0 423.0 L442.2 424.6 L442.5 426.6 L442.8 429.1 L443.0 432.0 L443.2 435.4 L443.5 439.3 L443.8 443.6 L444.0 448.3 L444.2 453.4 L444.5 459.0 L444.8 464.9 L445.0 471.2 L445.2 477.8 L445.5 484.8 L445.8 492.1 L446.0 499.7 L446.2 507.6 L446.5 515.7 L446.8 524.1 L447.0 532.7 L447.2 541.5 L447.5 550.4 L447.8 559.5 L448.0 568.7 L448.2 578.0 L448.5 587.3 L448.8 596.7 L449.0 606.2 L449.2 615.6 L449.5 625.0 L449.8 634.3 L450.0 643.5 L450.2 652.7 L450.5 661.7 L450.8 670.5 L451.0 679.2 L451.2 687.7 L451.5 696.0 L451.8 704.0 L452.0 711.7 L452.2 719.2 L452.5 726.3 L452.8 733.1 L453.0 739.6 L453.2 745.7 L453.5 751.4 L453.8 756.8 L454.0 761.7 L454.2 766.2 L454.5 770.3 L454.8 773.9 L455.0 777.1 L455.2 779.8 L455.5 782.1 L455.8 783.9 L456.0 785.2 L456.2 786.0 L456.5 786.3 L456.8 786.1 L457.0 785.5 L457.2 784.3 L457.5 782.7 L457.8 780.6 L458.0 778.1 L458.2 775.1 L458.5 771.6 L458.8 767.6 L459.0 763.3 L459.2 758.5 L459.5 753.3 L459.8 747.7 L460.0 741.7 L460.2 735.3 L460.5 728.6 L460.8 721.6 L461.0 714.2 L461.2 706.6 L461.5 698.7 L461.8 690.5 L462.0 682.1 L462.2 673.5 L462.5 664.7 L462.8 655.7 L463.0 646.6 L463.2 637.4 L463.5 628.1 L463.8 618.7 L464.0 609.3 L464.2 599.9 L464.5 590.5 L464.8 581.1 L465.0 571.8 L465.2 562.5 L465.5 553.4 L465.8 544.4 L466.0 535.6 L466.2 526.9 L466.5 518.5 L466.8 510.3 L467.0 502.3 L467.2 494.6 L467.5 487.2 L467.8 480.1 L468.0 473.4 L468.2 467.0 L468.5 460.9 L468.8 455.2 L469.0 450.0 L469.2 445.1 L469.5 440.7 L469.8 436.7 L470.0 433.1 L470.2 430.0 L470.5 427.4 L470.8 425.2 L471.0 423.5 L471.2 422.3 L471.5 421.5 L471.8 421.3 L472.0 421.5 L472.2 422.3 L472.5 423.5 L472.8 425.2 L473.0 427.4 L473.2 430.0 L473.5 433.1 L473.8 436.7 L474.0 440.7 L474.2 445.1 L474.5 450.0 L474.8 455.2 L475.0 460.9 L475.2 467.0 L475.5 473.4 L475.8 480.1 L476.0 487.2 L476.2 494.6 L476.5 502.3 L476.8 510.3 L477.0 518.5 L477.2 526.9 L477.5 535.6 L477.8 544.4 L478.0 553.4 L478.2 562.5 L478.5 571.8 L478.8 581.1 L479.0 590.5 L479.2 599.9 L479.5 609.3 L479.8 618.7 L480.0 628.1 L480.2 637.4 L480.5 646.6 L480.8 655.7 L481.0 664.7 L481.2 673.5 L481.5 682.1 L481.8 690.5 L482.0 698.7 L482.2 706.6 L482.5 714.2 L482.8 721.6 L483.0 728.6 L483.2 735.3 L483.5 741.7 L483.8 747.7 L484.0 753.3 L484.2 758.5 L484.5 763.3 L484.8 767.6 L485.0 771.6 L485.2 775.1 L485.5 778.1 L485.8 780.6 L486.0 782.7 L486.2 784.3 L486.5 785.5 L486.8 786.1 L487.0 786.3 L487.2 786.0 L487.5 785.2 L487.8 783.9 L488.0 782.1 L488.2 779.8 L488.5 777.1 L488.8 773.9 L489.0 770.3 L489.2 766.2 L489.5 761.7 L489.8 756.8 L490.0 751.4 L490.2 745.7 L490.5 739.6 L490.8 733.1 L491.0 726.3 L491.2 719.2 L491.5 711.7 L491.8 704.0 L492.0 696.0 L492.2 687.7 L492.5 679.2 L492.8 670.5 L493.0 661.7 L493.2 652.7 L493.5 643.5 L493.8 634.3 L494.0 625.0 L494.2 615.6 L494.5 606.2 L494.8 596.7 L495.0 587.3 L495.2 578.0 L495.5 568.7 L495.8 559.5 L496.0 550.4 L496.2 541.5 L496.5 532.7 L496.8 524.1 L497.0 515.7 L497.2 507.6 L497.5 499.7 L497.8 492.1 L498.0 484.8 L498.2 477.8 L498.5 471.2 L498.8 464.9 L499.0 459.0 L499.2 453.4 L499.5 448.3 L499.8 443.6 L500.0 439.3 L500.2 435.4 L500.5 432.0 L500.8 429.1 L501.0 426.6 L501.2 424.6 L501.5 423.0 L501.8 422.0 L502.0 421.4 L502.2 421.3 L502.5 421.7 L502.8 422.6 L503.0 424.0 L503.2 425.9 L503.5 428.2 L503.8 431.0 L504.0 434.2 L504.2 437.9 L504.5 442.1 L504.8 446.7 L505.0 451.7 L505.2 457.1 L505.5 462.9 L505.8 469.1 L506.0 475.6 L506.2 482.5 L506.5 489.7 L506.8 497.2 L507.0 505.0 L507.2 513.0 L507.5 521.3 L507.8 529.8 L508.0 538.5 L508.2 547.4 L508.5 556.4 L508.8 565.6 L509.0 574.9 L509.2 584.2 L509.5 593.6 L509.8 603.0 L510.0 612.4 L510.2 621.8 L510.5 631.2 L510.8 640.5 L511.0 649.6 L511.2 658.7 L511.5 667.6 L511.8 676.4 L512.0 684.9 L512.2 693.2 L512.5 701.3 L512.8 709.2 L513.0 716.7 L513.2 724.0 L513.5 730.9 L513.8 737.5 L514.0 743.7 L514.2 749.6 L514.5 755.1 L514.8 760.1 L515.0 764.8 L515.2 769.0 L515.5 772.8 L515.8 776.1 L516.0 779.0 L516.2 781.4 L516.5 783.3 L516.8 784.8 L517.0 785.8 L517.2 786.2 L517.5 786.2 L517.8 785.8 L518.0 784.8 L518.2 783.3 L518.5 781.4 L518.8 779.0 L519.0 776.1 L519.2 772.8 L519.5 769.0 L519.8 764.8 L520.0 760.1 L520.2 755.1 L520.5 749.6 L520.8 743.7 L521.0 737.5 L521.2 730.9 L521.5 724.0 L521.8 716.7 L522.0 709.2 L522.2 701.3 L522.5 693.2 L522.8 684.9 L523.0 676.4 L523.2 667.6 L523.5 658.7 L523.8 649.6 L524.0 640.5 L524.2 631.2 L524.5 621.8 L524.8 612.4 L525.0 603.0 L525.2 593.6 L525.5 584.2 L525.8 574.9 L526.0 565.6 L526.2 556.4 L526.5 547.4 L526.8 538.5 L527.0 529.8 L527.2 521.3 L527.5 513.0 L527.8 505.0 L528.0 497.2 L528.2 489.7 L528.5 482.5 L528.8 475.6 L529.0 469.1 L529.2 462.9 L529.5 457.1 L529.8 451.7 L530.0 446.7 L530.2 442.1 L530.5 437.9 L530.8 434.2 L531.0 431.0 L531.2 428.2 L531.5 425.9 L531.8 424.0 L532.0 422.6 L532.2 421.7 L532.5 421.3 L532.8 421.4 L533.0 422.0 L533.2 423.0 L533.5 424.6 L533.8 426.6 L534.0 429.1 L534.2 432.0 L534.5 435.4 L534.8 439.3 L535.0 443.6 L535.2 448.3 L535.5 453.4 L535.8 459.0 L536.0 464.9 L536.2 471.2 L536.5 477.8 L536.8 484.8 L537.0 492.1 L537.2 499.7 L537.5 507.6 L537.8 515.7 L538.0 524.1 L538.2 532.7 L538.5 541.5 L538.8 550.4 L539.0 559.5 L539.2 568.7 L539.5 578.0 L539.8 587.3 L540.0 596.7 L540.2 606.2 L540.5 615.6 L540.8 625.0 L541.0 634.3 L541.2 643.5 L541.5 652.7 L541.8 661.7 L542.0 670.5 L542.2 679.2 L542.5 687.7 L542.8 696.0 L543.0 704.0 L543.2 711.7 L543.5 719.2 L543.8 726.3 L544.0 733.1 L544.2 739.6 L544.5 745.7 L544.8 751.4 L545.0 756.8 L545.2 761.7 L545.5 766.2 L545.8 770.3 L546.0 773.9 L546.2 777.1 L546.5 779.8 L546.8 782.1 L547.0 783.9 L547.2 785.2 L547.5 786.0 L547.8 786.3 L548.0 786.1 L548.2 785.5 L548.5 784.3 L548.8 782.7 L549.0 780.6 L549.2 778.1 L549.5 775.1 L549.8 771.6 L550.0 767.6 L550.2 763.3 L550.5 758.5 L550.8 753.3 L551.0 747.7 L551.2 741.7 L551.5 735.3 L551.8 728.6 L552.0 721.6 L552.2 714.2 L552.5 706.6 L552.8 698.7 L553.0 690.5 L553.2 682.1 L553.5 673.5 L553.8 664.7 L554.0 655.7 L554.2 646.6 L554.5 637.4 L554.8 628.1 L555.0 618.7 L555.2 609.3 L555.5 599.9 L555.8 590.5 L556.0 581.1 L556.2 571.8 L556.5 562.5 L556.8 553.4 L557.0 544.4 L557.2 535.6 L557.5 526.9 L557.8 518.5 L558.0 510.3 L558.2 502.3 L558.5 494.6 L558.8 487.2 L559.0 480.1 L559.2 473.4 L559.5 467.0 L559.8 460.9 L560.0 455.2 L560.2 450.0 L560.5 445.1 L560.8 440.7 L561.0 436.7 L561.2 433.1 L561.5 430.0 L561.8 427.4 L562.0 425.2 L562.2 423.5 L562.5 422.3 L562.8 421.5 L563.0 421.3 L563.2 421.5 L563.5 422.3 L563.8 423.5 L564.0 425.2 L564.2 427.4 L564.5 430.0 L564.8 433.1 L565.0 436.7 L565.2 440.7 L565.5 445.1 L565.8 450.0 L566.0 455.2 L566.2 460.9 L566.5 467.0 L566.8 473.4 L567.0 480.1 L567.2 487.2 L567.5 494.6 L567.8 502.3 L568.0 510.3 L568.2 518.5 L568.5 526.9 L568.8 535.6 L569.0 544.4 L569.2 553.4 L569.5 562.5 L569.8 571.8 L570.0 581.1 L570.2 590.5 L570.5 599.9 L570.8 609.3 L571.0 618.7 L571.2 628.1 L571.5 637.4 L571.8 646.6 L572.0 655.7 L572.2 664.7 L572.5 673.5 L572.8 682.1 L573.0 690.5 L573.2 698.7 L573.5 706.6 L573.8 714.2 L574.0 721.6 L574.2 728.6 L574.5 735.3 L574.8 741.7 L575.0 747.7 L575.2 753.3 L575.5 758.5 L575.8 763.3 L576.0 767.6 L576.2 771.6 L576.5 775.1 L576.8 778.1 L577.0 780.6 L577.2 782.7 L577.5 784.3 L577.8 785.5 L578.0 786.1 L578.2 786.3 L578.5 786.0 L578.8 785.2 L579.0 783.9 L579.2 782.1 L579.5 779.8 L579.8 777.1 L580.0 773.9 L580.2 770.3 L580.5 766.2 L580.8 761.7 L581.0 756.8 L581.2 751.4 L581.5 745.7 L581.8 739.6 L582.0 733.1 L582.2 726.3 L582.5 719.2 L582.8 711.7 L583.0 704.0 L583.2 696.0 L583.5 687.7 L583.8 679.2 L584.0 670.5 L584.2 661.7 L584.5 652.7 L584.8 643.5 L585.0 634.3 L585.2 625.0 L585.5 615.6 L585.8 606.2 L586.0 596.7 L586.2 587.3 L586.5 578.0 L586.8 568.7 L587.0 559.5 L587.2 550.4 L587.5 541.5 L587.8 532.7 L588.0 524.1 L588.2 515.7 L588.5 507.6 L588.8 499.7 L589.0 492.1 L589.2 484.8 L589.5 477.8 L589.8 471.2 L590.0 464.9 L590.2 459.0 L590.5 453.4 L590.8 448.3 L591.0 443.6 L591.2 439.3 L591.5 435.4 L591.8 432.0 L592.0 429.1 L592.2 426.6 L592.5 424.6 L592.8 423.0 L593.0 422.0 L593.2 421.4 L593.5 421.3 L593.8 421.7 L594.0 422.6 L594.2 424.0 L594.5 425.9 L594.8 428.2 L595.0 431.0 L595.2 434.2 L595.5 437.9 L595.8 442.1 L596.0 446.7 L596.2 451.7 L596.5 457.1 L596.8 462.9 L597.0 469.1 L597.2 475.6 L597.5 482.5 L597.8 489.7 L598.0 497.2 L598.2 505.0 L598.5 513.0 L598.8 521.3 L599.0 529.8 L599.2 538.5 L599.5 547.4 L599.8 556.4 L600.0 565.6 L600.2 574.9 L600.5 584.2 L600.8 593.6 L601.0 603.0 L601.2 612.4 L601.5 621.8 L601.8 631.2 L602.0 640.5 L602.2 649.6 L602.5 658.7 L602.8 667.6 L603.0 676.4 L603.2 684.9 L603.5 693.2 L603.8 701.3 L604.0 709.2 L604.2 716.7 L604.5 724.0 L604.8 730.9 L605.0 737.5 L605.2 743.7 L605.5 749.6 L605.8 755.1 L606.0 760.1 L606.2 764.8 L606.5 769.0 L606.8 772.8 L607.0 776.1 L607.2 779.0 L607.5 781.4 L607.8 783.3 L608.0 784.8 L608.2 785.8 L608.5 786.2 L608.8 786.2 L609.0 785.8 L609.2 784.8 L609.5 783.3 L609.8 781.4 L610.0 779.0 L610.2 776.1 L610.5 772.8 L610.8 769.0 L611.0 764.8 L611.2 760.1 L611.5 755.1 L611.8 749.6 L612.0 743.7 L612.2 737.5 L612.5 730.9 L612.8 724.0 L613.0 716.7 L613.2 709.2 L613.5 701.3 L613.8 693.2 L614.0 684.9 L614.2 676.4 L614.5 667.6 L614.8 658.7 L615.0 649.6 L615.2 640.5 L615.5 631.2 L615.8 621.8 L616.0 612.4 L616.2 603.0 L616.5 593.6 L616.8 584.2 L617.0 574.9 L617.2 565.6 L617.5 556.4 L617.8 547.4 L618.0 538.5 L618.2 529.8 L618.5 521.3 L618.8 513.0 L619.0 505.0 L619.2 497.2 L619.5 489.7 L619.8 482.5 L620.0 475.6 L620.2 469.1 L620.5 462.9 L620.8 457.1 L621.0 451.7 L621.2 446.7 L621.5 442.1 L621.8 437.9 L622.0 434.2 L622.2 431.0 L622.5 428.2 L622.8 425.9 L623.0 424.0 L623.2 422.6 L623.5 421.7 L623.8 421.3 L624.0 421.4 L624.2 422.0 L624.5 423.0 L624.8 424.6 L625.0 426.6 L625.2 429.1 L625.5 432.0 L625.8 435.4 L626.0 439.3 L626.2 443.6 L626.5 448.3 L626.8 453.4 L627.0 459.0 L627.2 464.9 L627.5 471.2 L627.8 477.8 L628.0 484.8 L628.2 492.1 L628.5 499.7 L628.8 507.6 L629.0 515.7 L629.2 524.1 L629.5 532.7 L629.8 541.5 L630.0 550.4 L630.2 559.5 L630.5 568.7 L630.8 578.0 L631.0 587.3 L631.2 596.7 L631.5 606.2 L631.8 615.6 L632.0 625.0 L632.2 634.3 L632.5 643.5 L632.8 652.7 L633.0 661.7 L633.2 670.5 L633.5 679.2 L633.8 687.7 L634.0 696.0 L634.2 704.0 L634.5 711.7 L634.8 719.2 L635.0 726.3 L635.2 733.1 L635.5 739.6 L635.8 745.7 L636.0 751.4 L636.2 756.8 L636.5 761.7 L636.8 766.2 L637.0 770.3 L637.2 773.9 L637.5 777.1 L637.8 779.8 L638.0 782.1 L638.2 783.9 L638.5 785.2 L638.8 786.0 L639.0 786.3 L639.2 786.1 L639.5 785.5 L639.8 784.3 L640.0 782.7 L640.2 780.6 L640.5 778.1 L640.8 775.1 L641.0 771.6 L641.2 767.6 L641.5 763.3 L641.8 758.5 L642.0 753.3 L642.2 747.7 L642.5 741.7 L642.8 735.3 L643.0 728.6 L643.2 721.6 L643.5 714.2 L643.8 706.6 L644.0 698.7 L644.2 690.5 L644.5 682.1 L644.8 673.5 L645.0 664.7 L645.2 655.7 L645.5 646.6 L645.8 637.4 L646.0 628.1 L646.2 618.7 L646.5 609.3 L646.8 599.9 L647.0 590.5 L647.2 581.1 L647.5 571.8 L647.8 562.5 L648.0 553.4 L648.2 544.4 L648.5 535.6 L648.8 526.9 L649.0 518.5 L649.2 510.3 L649.5 502.3 L649.8 494.6 L650.0 487.2 L650.2 480.1 L650.5 473.4 L650.8 467.0 L651.0 460.9 L651.2 455.2 L651.5 450.0 L651.8 445.1 L652.0 440.7 L652.2 436.7 L652.5 433.1 L652.8 430.0 L653.0 427.4 L653.2 425.2 L653.5 423.5 L653.8 422.3 L654.0 421.5 L654.2 421.3 L654.5 421.5 L654.8 422.3 L655.0 423.5 L655.2 425.2 L655.5 427.4 L655.8 430.0 L656.0 433.1 L656.2 436.7 L656.5 440.7 L656.8 445.1 L657.0 450.0 L657.2 455.2 L657.5 460.9 L657.8 467.0 L658.0 473.4 L658.2 480.1 L658.5 487.2 L658.8 494.6 L659.0 502.3 L659.2 510.3 L659.5 518.5 L659.8 526.9 L660.0 535.6 L660.2 544.4 L660.5 553.4 L660.8 562.5 L661.0 571.8 L661.2 581.1 L661.5 590.5 L661.8 599.9 L662.0 609.3 L662.2 618.7 L662.5 628.1 L662.8 637.4 L663.0 646.6 L663.2 655.7 L663.5 664.7 L663.8 673.5 L664.0 682.1 L664.2 690.5 L664.5 698.7 L664.8 706.6 L665.0 714.2 L665.2 721.6 L665.5 728.6 L665.8 735.3 L666.0 741.7 L666.2 747.7 L666.5 753.3 L666.8 758.5 L667.0 763.3 L667.2 767.6 L667.5 771.6 L667.8 775.1 L668.0 778.1 L668.2 780.6 L668.5 782.7 L668.8 784.3 L669.0 785.5 L669.2 786.1 L669.5 786.3 L669.8 786.0 L670.0 785.2 L670.2 783.9 L670.5 782.1 L670.8 779.8 L671.0 777.1 L671.2 773.9 L671.5 770.3 L671.8 766.2 L672.0 761.7 L672.2 756.8 L672.5 751.4 L672.8 745.7 L673.0 739.6 L673.2 733.1 L673.5 726.3 L673.8 719.2 L674.0 711.7 L674.2 704.0 L674.5 696.0 L674.8 687.7 L675.0 679.2 L675.2 670.5 L675.5 661.7 L675.8 652.7 L676.0 643.5 L676.2 634.3 L676.5 625.0 L676.8 615.6 L677.0 606.2 L677.2 596.7 L677.5 587.3 L677.8 578.0 L678.0 568.7 L678.2 559.5 L678.5 550.4 L678.8 541.5 L679.0 532.7 L679.2 524.1 L679.5 515.7 L679.8 507.6 L680.0 499.7 L680.2 492.1 L680.5 484.8 L680.8 477.8 L681.0 471.2 L681.2 464.9 L681.5 459.0 L681.8 453.4 L682.0 448.3 L682.2 443.6 L682.5 439.3 L682.8 435.4 L683.0 432.0 L683.2 429.1 L683.5 426.6 L683.8 424.6 L684.0 423.0 L684.2 422.0 L684.5 421.4 L684.8 421.3 L685.0 421.7 L685.2 422.6 L685.5 424.0 L685.8 425.9 L686.0 428.2 L686.2 431.0 L686.5 434.2 L686.8 437.9 L687.0 442.1 L687.2 446.7 L687.5 451.7 L687.8 457.1 L688.0 462.9 L688.2 469.1 L688.5 475.6 L688.8 482.5 L689.0 489.7 L689.2 497.2 L689.5 505.0 L689.8 513.0 L690.0 521.3 L690.2 529.8 L690.5 538.5 L690.8 547.4 L691.0 556.4 L691.2 565.6 L691.5 574.9 L691.8 584.2 L692.0 593.6 L692.2 603.0 L692.5 612.4 L692.8 621.8 L693.0 631.2 L693.2 640.5 L693.5 649.6 L693.8 658.7 L694.0 667.6 L694.2 676.4 L694.5 684.9 L694.8 693.2 L695.0 701.3 L695.2 709.2 L695.5 716.7 L695.8 724.0 L696.0 730.9 L696.2 737.5 L696.5 743.7 L696.8 749.6 L697.0 755.1 L697.2 760.1 L697.5 764.8 L697.8 769.0 L698.0 772.8 L698.2 776.1 L698.5 779.0 L698.8 781.4 L699.0 783.3 L699.2 784.8 L699.5 785.8 L699.8 786.2 L700.0 786.2 L700.2 785.8 L700.5 784.8 L700.8 783.3 L701.0 781.4 L701.2 779.0 L701.5 776.1 L701.8 772.8 L702.0 769.0 L702.2 764.8 L702.5 760.1 L702.8 755.1 L703.0 749.6 L703.2 743.7 L703.5 737.5 L703.8 730.9 L704.0 724.0 L704.2 716.7 L704.5 709.2 L704.8 701.3 L705.0 693.2 L705.2 684.9 L705.5 676.4 L705.8 667.6 L706.0 658.7 L706.2 649.6 L706.5 640.5 L706.8 631.2 L707.0 621.8 L707.2 612.4 L707.5 603.0 L707.8 593.6 L708.0 584.2 L708.2 574.9 L708.5 565.6 L708.8 556.4 L709.0 547.4 L709.2 538.5 L709.5 529.8 L709.8 521.3 L710.0 513.0 L710.2 505.0 L710.5 497.2 L710.8 489.7 L711.0 482.5 L711.2 475.6 L711.5 469.1 L711.8 462.9 L712.0 457.1 L712.2 451.7 L712.5 446.7 L712.8 442.1 L713.0 437.9 L713.2 434.2 L713.5 431.0 L713.8 428.2 L714.0 425.9 L714.2 424.0 L714.5 422.6 L714.8 421.7 L715.0 421.3 L715.2 421.4 L715.5 422.0 L715.8 423.0 L716.0 424.6 L716.2 426.6 L716.5 429.1 L716.8 432.0 L717.0 435.4 L717.2 439.3 L717.5 443.6 L717.8 448.3 L718.0 453.4 L718.2 459.0 L718.5 464.9 L718.8 471.2 L719.0 477.8 L719.2 484.8 L719.5 492.1 L719.8 499.7 L720.0 507.6 L720.2 515.7 L720.5 524.1 L720.8 532.7 L721.0 541.5 L721.2 550.4 L721.5 559.5 L721.8 568.7 L722.0 578.0 L722.2 587.3 L722.5 596.7 L722.8 606.2 L723.0 615.6 L723.2 625.0 L723.5 634.3 L723.8 643.5 L724.0 652.7 L724.2 661.7 L724.5 670.5 L724.8 679.2 L725.0 687.7 L725.2 696.0 L725.5 704.0 L725.8 711.7 L726.0 719.2 L726.2 726.3 L726.5 733.1 L726.8 739.6 L727.0 745.7 L727.2 751.4 L727.5 756.8 L727.8 761.7 L728.0 766.2 L728.2 770.3 L728.5 773.9 L728.8 777.1 L729.0 779.8 L729.2 782.1 L729.5 783.9 L729.8 785.2 L730.0 786.0 L730.2 786.3 L730.5 786.1 L730.8 785.5 L731.0 784.3 L731.2 782.7 L731.5 780.6 L731.8 778.1 L732.0 775.1 L732.2 771.6 L732.5 767.6 L732.8 763.3 L733.0 758.5 L733.2 753.3 L733.5 747.7 L733.8 741.7 L734.0 735.3 L734.2 728.6 L734.5 721.6 L734.8 714.2 L735.0 706.6 L735.2 698.7 L735.5 690.5 L735.8 682.1 L736.0 673.5 L736.2 664.7 L736.5 655.7 L736.8 646.6 L737.0 637.4 L737.2 628.1 L737.5 618.7 L737.8 609.3 L738.0 599.9 L738.2 590.5 L738.5 581.1 L738.8 571.8 L739.0 562.5 L739.2 553.4 L739.5 544.4 L739.8 535.6 L740.0 526.9 L740.2 518.5 L740.5 510.3 L740.8 502.3 L741.0 494.6 L741.2 487.2 L741.5 480.1 L741.8 473.4 L742.0 467.0 L742.2 460.9 L742.5 455.2 L742.8 450.0 L743.0 445.1 L743.2 440.7 L743.5 436.7 L743.8 433.1 L744.0 430.0 L744.2 427.4 L744.5 425.2 L744.8 423.5 L745.0 422.3 L745.2 421.5 L745.5 421.3 L745.8 421.5 L746.0 422.3 L746.2 423.5 L746.5 425.2 L746.8 427.4 L747.0 430.0 L747.2 433.1 L747.5 436.7 L747.8 440.7 L748.0 445.1 L748.2 450.0 L748.5 455.2 L748.8 460.9 L749.0 467.0 L749.2 473.4 L749.5 480.1 L749.8 487.2 L750.0 494.6 L750.2 502.3 L750.5 510.3 L750.8 518.5 L751.0 526.9 L751.2 535.6 L751.5 544.4 L751.8 553.4 L752.0 562.5 L752.2 571.8 L752.5 581.1 L752.8 590.5 L753.0 599.9 L753.2 609.3 L753.5 618.7 L753.8 628.1 L754.0 637.4 L754.2 646.6 L754.5 655.7 L754.8 664.7 L755.0 673.5 L755.2 682.1 L755.5 690.5 L755.8 698.7 L756.0 706.6 L756.2 714.2 L756.5 721.6 L756.8 728.6 L757.0 735.3 L757.2 741.7 L757.5 747.7 L757.8 753.3 L758.0 758.5 L758.2 763.3 L758.5 767.6 L758.8 771.6 L759.0 775.1 L759.2 778.1 L759.5 780.6 L759.8 782.7 L760.0 784.3 L760.2 785.5 L760.5 786.1 L760.8 786.3 L761.0 786.0 L761.2 785.2 L761.5 783.9 L761.8 782.1 L762.0 779.8 L762.2 777.1 L762.5 773.9 L762.8 770.3 L763.0 766.2 L763.2 761.7 L763.5 756.8 L763.8 751.4 L764.0 745.7 L764.2 739.6 L764.5 733.1 L764.8 726.3 L765.0 719.2 L765.2 711.7 L765.5 704.0 L765.8 696.0 L766.0 687.7 L766.2 679.2 L766.5 670.5 L766.8 661.7 L767.0 652.7 L767.2 643.5 L767.5 634.3 L767.8 625.0 L768.0 615.6 L768.2 606.2 L768.5 596.7 L768.8 587.3 L769.0 578.0 L769.2 568.7 L769.5 559.5 L769.8 550.4 L770.0 541.5 L770.2 532.7 L770.5 524.1 L770.8 515.7 L771.0 507.6 L771.2 499.7 L771.5 492.1 L771.8 484.8 L772.0 477.8 L772.2 471.2 L772.5 464.9 L772.8 459.0 L773.0 453.4 L773.2 448.3 L773.5 443.6 L773.8 439.3 L774.0 435.4 L774.2 432.0 L774.5 429.1 L774.8 426.6 L775.0 424.6 L775.2 423.0 L775.5 422.0 L775.8 421.4 L776.0 421.3 L776.2 421.7 L776.5 422.6 L776.8 424.0 L777.0 425.9 L777.2 428.2 L777.5 431.0 L777.8 434.2 L778.0 437.9 L778.2 442.1 L778.5 446.7 L778.8 451.7 L779.0 457.1 L779.2 462.9 L779.5 469.1 L779.8 475.6 L780.0 482.5 L780.2 489.7 L780.5 497.2 L780.8 505.0 L781.0 513.0 L781.2 521.3 L781.5 529.8 L781.8 538.5 L782.0 547.4 L782.2 556.4 L782.5 565.6 L782.8 574.9 L783.0 584.2 L783.2 593.6 L783.5 603.0 L783.8 612.4 L784.0 621.8 L784.2 631.2 L784.5 640.5 L784.8 649.6 L785.0 658.7 L785.2 667.6 L785.5 676.4 L785.8 684.9 L786.0 693.2 L786.2 701.3 L786.5 709.2 L786.8 716.7 L787.0 724.0 L787.2 730.9 L787.5 737.5 L787.8 743.7 L788.0 749.6 L788.2 755.1 L788.5 760.1 L788.8 764.8 L789.0 769.0 L789.2 772.8 L789.5 776.1 L789.8 779.0 L790.0 781.4 L790.2 783.3 L790.5 784.8 L790.8 785.8 L791.0 786.2 L791.2 786.2 L791.5 785.8 L791.8 784.8 L792.0 783.3 L792.2 781.4 L792.5 779.0 L792.8 776.1 L793.0 772.8 L793.2 769.0 L793.5 764.8 L793.8 760.1 L794.0 755.1 L794.2 749.6 L794.5 743.7 L794.8 737.5 L795.0 730.9 L795.2 724.0 L795.5 716.7 L795.8 709.2 L796.0 701.3 L796.2 693.2 L796.5 684.9 L796.8 676.4 L797.0 667.6 L797.2 658.7 L797.5 649.6 L797.8 640.5 L798.0 631.2 L798.2 621.8 L798.5 612.4 L798.8 603.0 L799.0 593.6 L799.2 584.2 L799.5 574.9 L799.8 565.6 L800.0 556.4 L800.2 547.4 L800.5 538.5 L800.8 529.8 L801.0 521.3 L801.2 513.0 L801.5 505.0 L801.8 497.2 L802.0 489.7 L802.2 482.5 L802.5 475.6 L802.8 469.1 L803.0 462.9 L803.2 457.1 L803.5 451.7 L803.8 446.7 L804.0 442.1 L804.2 437.9 L804.5 434.2 L804.8 431.0 L805.0 428.2 L805.2 425.9 L805.5 424.0 L805.8 422.6 L806.0 421.7 L806.2 421.3 L806.5 421.4 L806.8 422.0 L807.0 423.0 L807.2 424.6 L807.5 426.6 L807.8 429.1 L808.0 432.0 L808.2 435.4 L808.5 439.3 L808.8 443.6 L809.0 448.3 L809.2 453.4 L809.5 459.0 L809.8 464.9 L810.0 471.2 L810.2 477.8 L810.5 484.8 L810.8 492.1 L811.0 499.7 L811.2 507.6 L811.5 515.7 L811.8 524.1 L812.0 532.7 L812.2 541.5 L812.5 550.4 L812.8 559.5 L813.0 568.7 L813.2 578.0 L813.5 587.3 L813.8 596.7 L814.0 606.2 L814.2 615.6 L814.5 625.0 L814.8 634.3 L815.0 643.5 L815.2 652.7 L815.5 661.7 L815.8 670.5 L816.0 679.2 L816.2 687.7 L816.5 696.0 L816.8 704.0 L817.0 711.7 L817.2 719.2 L817.5 726.3 L817.8 733.1 L818.0 739.6 L818.2 745.7 L818.5 751.4 L818.8 756.8 L819.0 761.7 L819.2 766.2 L819.5 770.3 L819.8 773.9 L820.0 777.1 L820.2 779.8 L820.5 782.1 L820.8 783.9 L821.0 785.2 L821.2 786.0 L821.5 786.3 L821.8 786.1 L822.0 785.5 L822.2 784.3 L822.5 782.7 L822.8 780.6 L823.0 778.1 L823.2 775.1 L823.5 771.6 L823.8 767.6 L824.0 763.3 L824.2 758.5 L824.5 753.3 L824.8 747.7 L825.0 741.7 L825.2 735.3 L825.5 728.6 L825.8 721.6 L826.0 714.2 L826.2 706.6 L826.5 698.7 L826.8 690.5 L827.0 682.1 L827.2 673.5 L827.5 664.7 L827.8 655.7 L828.0 646.6 L828.2 637.4 L828.5 628.1 L828.8 618.7 L829.0 609.3 L829.2 599.9 L829.5 590.5 L829.8 581.1 L830.0 571.8 L830.2 562.5 L830.5 553.4 L830.8 544.4 L831.0 535.6 L831.2 526.9 L831.5 518.5 L831.8 510.3 L832.0 502.3 L832.2 494.6 L832.5 487.2 L832.8 480.1 L833.0 473.4 L833.2 467.0 L833.5 460.9 L833.8 455.2 L834.0 450.0 L834.2 445.1 L834.5 440.7 L834.8 436.7 L835.0 433.1 L835.2 430.0 L835.5 427.4 L835.8 425.2 L836.0 423.5 L836.2 422.3 L836.5 421.5 L836.8 421.3 L837.0 421.5 L837.2 422.3 L837.5 423.5 L837.8 425.2 L838.0 427.4 L838.2 430.0 L838.5 433.1 L838.8 436.7 L839.0 440.7 L839.2 445.1 L839.5 450.0 L839.8 455.2 L840.0 460.9 L840.2 467.0 L840.5 473.4 L840.8 480.1 L841.0 487.2 L841.2 494.6 L841.5 502.3 L841.8 510.3 L842.0 518.5 L842.2 526.9 L842.5 535.6 L842.8 544.4 L843.0 553.4 L843.2 562.5 L843.5 571.8 L843.8 581.1 L844.0 590.5 L844.2 599.9 L844.5 609.3 L844.8 618.7 L845.0 628.1 L845.2 637.4 L845.5 646.6 L845.8 655.7 L846.0 664.7 L846.2 673.5 L846.5 682.1 L846.8 690.5 L847.0 698.7 L847.2 706.6 L847.5 714.2 L847.8 721.6 L848.0 728.6 L848.2 735.3 L848.5 741.7 L848.8 747.7 L849.0 753.3 L849.2 758.5 L849.5 763.3 L849.8 767.6 L850.0 771.6 L850.2 775.1 L850.5 778.1 L850.8 780.6 L851.0 782.7 L851.2 784.3 L851.5 785.5 L851.8 786.1 L852.0 786.3 L852.2 786.0 L852.5 785.2 L852.8 783.9 L853.0 782.1 L853.2 779.8 L853.5 777.1 L853.8 773.9 L854.0 770.3 L854.2 766.2 L854.5 761.7 L854.8 756.8 L855.0 751.4 L855.2 745.7 L855.5 739.6 L855.8 733.1 L856.0 726.3 L856.2 719.2 L856.5 711.7 L856.8 704.0 L857.0 696.0 L857.2 687.7 L857.5 679.2 L857.8 670.5 L858.0 661.7 L858.2 652.7 L858.5 643.5 L858.8 634.3 L859.0 625.0 L859.2 615.6 L859.5 606.2 L859.8 596.7 L860.0 587.3 L860.2 578.0 L860.5 568.7 L860.8 559.5 L861.0 550.4 L861.2 541.5 L861.5 532.7 L861.8 524.1 L862.0 515.7 L862.2 507.6 L862.5 499.7 L862.8 492.1 L863.0 484.8 L863.2 477.8 L863.5 471.2 L863.8 464.9 L864.0 459.0 L864.2 453.4 L864.5 448.3 L864.8 443.6 L865.0 439.3 L865.2 435.4 L865.5 432.0 L865.8 429.1 L866.0 426.6 L866.2 424.6 L866.5 423.0 L866.8 422.0 L867.0 421.4 L867.2 421.3 L867.5 421.7 L867.8 422.6 L868.0 424.0 L868.2 425.9 L868.5 428.2 L868.8 431.0 L869.0 434.2 L869.2 437.9 L869.5 442.1 L869.8 446.7 L870.0 451.7 L870.2 457.1 L870.5 462.9 L870.8 469.1 L871.0 475.6 L871.2 482.5 L871.5 489.7 L871.8 497.2 L872.0 505.0 L872.2 513.0 L872.5 521.3 L872.8 529.8 L873.0 538.5 L873.2 547.4 L873.5 556.4 L873.8 565.6 L874.0 574.9 L874.2 584.2 L874.5 593.6 L874.8 603.0 L875.0 612.4 L875.2 621.8 L875.5 631.2 L875.8 640.5 L876.0 649.6 L876.2 658.7 L876.5 667.6 L876.8 676.4 L877.0 684.9 L877.2 693.2 L877.5 701.3 L877.8 709.2 L878.0 716.7 L878.2 724.0 L878.5 730.9 L878.8 737.5 L879.0 743.7 L879.2 749.6 L879.5 755.1 L879.8 760.1 L880.0 764.8 L880.2 769.0 L880.5 772.8 L880.8 776.1 L881.0 779.0 L881.2 781.4 L881.5 783.3 L881.8 784.8 L882.0 785.8 L882.2 786.2 L882.5 786.2 L882.8 785.8 L883.0 784.8 L883.2 783.3 L883.5 781.4 L883.8 779.0 L884.0 776.1 L884.2 772.8 L884.5 769.0 L884.8 764.8 L885.0 760.1 L885.2 755.1 L885.5 749.6 L885.8 743.7 L886.0 737.5 L886.2 730.9 L886.5 724.0 L886.8 716.7 L887.0 709.2 L887.2 701.3 L887.5 693.2 L887.8 684.9 L888.0 676.4 L888.2 667.6 L888.5 658.7 L888.8 649.6 L889.0 640.5 L889.2 631.2 L889.5 621.8 L889.8 612.4 L890.0 603.0 L890.2 593.6 L890.5 584.2 L890.8 574.9 L891.0 565.6 L891.2 556.4 L891.5 547.4 L891.8 538.5 L892.0 529.8 L892.2 521.3 L892.5 513.0 L892.8 505.0 L893.0 497.2 L893.2 489.7 L893.5 482.5 L893.8 475.6 L894.0 469.1 L894.2 462.9 L894.5 457.1 L894.8 451.7 L895.0 446.7 L895.2 442.1 L895.5 437.9 L895.8 434.2 L896.0 431.0 L896.2 428.2 L896.5 425.9 L896.8 424.0 L897.0 422.6 L897.2 421.7 L897.5 421.3 L897.8 421.4 L898.0 422.0 L898.2 423.0 L898.5 424.6 L898.8 426.6 L899.0 429.1" stroke="#388c46" stroke-opacity="0.7" stroke-width="3.1" fill="none" stroke-linejoin="round" stroke-linecap="round"/>
<path d="M-4.0 543.7 L-2.0 549.6 L0.0 555.7 L2.0 561.8 L4.0 567.9 L6.0 574.1 L8.0 580.3 L10.0 586.5 L12.0 592.8 L14.0 599.1 L16.0 605.4 L18.0 611.7 L20.0 617.9 L22.0 624.2 L24.0 630.4 L26.0 636.6 L28.0 642.8 L30.0 648.9 L32.0 654.9 L34.0 660.9 L36.0 666.9 L38.0 672.7 L40.0 678.5 L42.0 684.2 L44.0 689.8 L46.0 695.3 L48.0 700.7 L50.0 705.9 L52.0 711.1 L54.0 716.1 L56.0 721.0 L58.0 725.7 L60.0 730.3 L62.0 734.8 L64.0 739.1 L66.0 743.2 L68.0 747.2 L70.0 751.0 L72.0 754.6 L74.0 758.1 L76.0 761.3 L78.0 764.4 L80.0 767.3 L82.0 770.0 L84.0 772.5 L86.0 774.8 L88.0 776.9 L90.0 778.8 L92.0 780.4 L94.0 781.9 L96.0 783.2 L98.0 784.2 L100.0 785.1 L102.0 785.7 L104.0 786.1 L106.0 786.3 L108.0 786.3 L110.0 786.0 L112.0 785.6 L114.0 784.9 L116.0 784.0 L118.0 782.9 L120.0 781.6 L122.0 780.0 L124.0 778.3 L126.0 776.4 L128.0 774.2 L130.0 771.9 L132.0 769.3 L134.0 766.6 L136.0 763.7 L138.0 760.5 L140.0 757.2 L142.0 753.7 L144.0 750.0 L146.0 746.2 L148.0 742.2 L150.0 738.0 L152.0 733.7 L154.0 729.2 L156.0 724.5 L158.0 719.8 L160.0 714.8 L162.0 709.8 L164.0 704.6 L166.0 699.3 L168.0 693.9 L170.0 688.4 L172.0 682.8 L174.0 677.1 L176.0 671.3 L178.0 665.4 L180.0 659.4 L182.0 653.4 L184.0 647.4 L186.0 641.2 L188.0 635.1 L190.0 628.9 L192.0 622.6 L194.0 616.4 L196.0 610.1 L198.0 603.8 L200.0 597.5 L202.0 591.2 L204.0 585.0 L206.0 578.7 L208.0 572.5 L210.0 566.4 L212.0 560.2 L214.0 554.2 L216.0 548.2 L218.0 542.2 L220.0 536.3 L222.0 530.5 L224.0 524.8 L226.0 519.2 L228.0 513.7 L230.0 508.3 L232.0 503.0 L234.0 497.8 L236.0 492.8 L238.0 487.8 L240.0 483.1 L242.0 478.4 L244.0 473.9 L246.0 469.6 L248.0 465.4 L250.0 461.4 L252.0 457.6 L254.0 453.9 L256.0 450.4 L258.0 447.1 L260.0 443.9 L262.0 441.0 L264.0 438.3 L266.0 435.7 L268.0 433.4 L270.0 431.2 L272.0 429.3 L274.0 427.6 L276.0 426.0 L278.0 424.7 L280.0 423.6 L282.0 422.7 L284.0 422.0 L286.0 421.6 L288.0 421.3 L290.0 421.3 L292.0 421.5 L294.0 421.9 L296.0 422.5 L298.0 423.4 L300.0 424.4 L302.0 425.7 L304.0 427.2 L306.0 428.8 L308.0 430.7 L310.0 432.8 L312.0 435.1 L314.0 437.6 L316.0 440.3 L318.0 443.2 L320.0 446.3 L322.0 449.5 L324.0 453.0 L326.0 456.6 L328.0 460.4 L330.0 464.4 L332.0 468.5 L334.0 472.8 L336.0 477.3 L338.0 481.9 L340.0 486.6 L342.0 491.5 L344.0 496.5 L346.0 501.7 L348.0 506.9 L350.0 512.3 L352.0 517.8 L354.0 523.4 L356.0 529.1 L358.0 534.9 L360.0 540.7 L362.0 546.7 L364.0 552.7 L366.0 558.7 L368.0 564.8 L370.0 571.0 L372.0 577.2 L374.0 583.4 L376.0 589.7 L378.0 595.9 L380.0 602.2 L382.0 608.5 L384.0 614.8 L386.0 621.1 L388.0 627.3 L390.0 633.5 L392.0 639.7 L394.0 645.8 L396.0 651.9 L398.0 658.0 L400.0 663.9 L402.0 669.8 L404.0 675.6 L406.0 681.4 L408.0 687.0 L410.0 692.5 L412.0 698.0 L414.0 703.3 L416.0 708.5 L418.0 713.6 L420.0 718.5 L422.0 723.4 L424.0 728.0 L426.0 732.6 L428.0 736.9 L430.0 741.2 L432.0 745.2 L434.0 749.1 L436.0 752.8 L438.0 756.4 L440.0 759.7 L442.0 762.9 L444.0 765.9 L446.0 768.7 L448.0 771.3 L450.0 773.7 L452.0 775.9 L454.0 777.8 L456.0 779.6 L458.0 781.2 L460.0 782.6 L462.0 783.7 L464.0 784.7 L466.0 785.4 L468.0 785.9 L470.0 786.2 L472.0 786.3 L474.0 786.2 L476.0 785.8 L478.0 785.2 L480.0 784.5 L482.0 783.5 L484.0 782.3 L486.0 780.8 L488.0 779.2 L490.0 777.4 L492.0 775.3 L494.0 773.1 L496.0 770.6 L498.0 768.0 L500.0 765.1 L502.0 762.1 L504.0 758.9 L506.0 755.5 L508.0 751.9 L510.0 748.1 L512.0 744.2 L514.0 740.1 L516.0 735.9 L518.0 731.5 L520.0 726.9 L522.0 722.2 L524.0 717.3 L526.0 712.3 L528.0 707.2 L530.0 702.0 L532.0 696.6 L534.0 691.2 L536.0 685.6 L538.0 679.9 L540.0 674.2 L542.0 668.3 L544.0 662.4 L546.0 656.4 L548.0 650.4 L550.0 644.3 L552.0 638.2 L554.0 632.0 L556.0 625.7 L558.0 619.5 L560.0 613.2 L562.0 606.9 L564.0 600.7 L566.0 594.4 L568.0 588.1 L570.0 581.9 L572.0 575.6 L574.0 569.4 L576.0 563.3 L578.0 557.2 L580.0 551.2 L582.0 545.2 L584.0 539.3 L586.0 533.4 L588.0 527.7 L590.0 522.0 L592.0 516.4 L594.0 511.0 L596.0 505.6 L598.0 500.4 L600.0 495.3 L602.0 490.3 L604.0 485.4 L606.0 480.7 L608.0 476.1 L610.0 471.7 L612.0 467.5 L614.0 463.4 L616.0 459.5 L618.0 455.7 L620.0 452.1 L622.0 448.7 L624.0 445.5 L626.0 442.5 L628.0 439.6 L630.0 437.0 L632.0 434.5 L634.0 432.3 L636.0 430.2 L638.0 428.4 L640.0 426.8 L642.0 425.3 L644.0 424.1 L646.0 423.1 L648.0 422.4 L650.0 421.8 L652.0 421.4 L654.0 421.3 L656.0 421.4 L658.0 421.7 L660.0 422.2 L662.0 422.9 L664.0 423.9 L666.0 425.0 L668.0 426.4 L670.0 428.0 L672.0 429.8 L674.0 431.7 L676.0 433.9 L678.0 436.3 L680.0 438.9 L682.0 441.7 L684.0 444.7 L686.0 447.9 L688.0 451.2 L690.0 454.8 L692.0 458.5 L694.0 462.4 L696.0 466.4 L698.0 470.7 L700.0 475.0 L702.0 479.6 L704.0 484.2 L706.0 489.1 L708.0 494.0 L710.0 499.1 L712.0 504.3 L714.0 509.6 L716.0 515.1 L718.0 520.6 L720.0 526.2 L722.0 532.0 L724.0 537.8 L726.0 543.7 L728.0 549.6 L730.0 555.7 L732.0 561.8 L734.0 567.9 L736.0 574.1 L738.0 580.3 L740.0 586.5 L742.0 592.8 L744.0 599.1 L746.0 605.4 L748.0 611.7 L750.0 617.9 L752.0 624.2 L754.0 630.4 L756.0 636.6 L758.0 642.8 L760.0 648.9 L762.0 654.9 L764.0 660.9 L766.0 666.9 L768.0 672.7 L770.0 678.5 L772.0 684.2 L774.0 689.8 L776.0 695.3 L778.0 700.7 L780.0 705.9 L782.0 711.1 L784.0 716.1 L786.0 721.0 L788.0 725.7 L790.0 730.3 L792.0 734.8 L794.0 739.1 L796.0 743.2 L798.0 747.2 L800.0 751.0 L802.0 754.6 L804.0 758.1 L806.0 761.3 L808.0 764.4 L810.0 767.3 L812.0 770.0 L814.0 772.5 L816.0 774.8 L818.0 776.9 L820.0 778.8 L822.0 780.4 L824.0 781.9 L826.0 783.2 L828.0 784.2 L830.0 785.1 L832.0 785.7 L834.0 786.1 L836.0 786.3 L838.0 786.3 L840.0 786.0 L842.0 785.6 L844.0 784.9 L846.0 784.0 L848.0 782.9 L850.0 781.6 L852.0 780.0 L854.0 778.3 L856.0 776.4 L858.0 774.2 L860.0 771.9 L862.0 769.3 L864.0 766.6 L866.0 763.7 L868.0 760.5 L870.0 757.2 L872.0 753.7 L874.0 750.0 L876.0 746.2 L878.0 742.2 L880.0 738.0 L882.0 733.7 L884.0 729.2 L886.0 724.5 L888.0 719.8 L890.0 714.8 L892.0 709.8 L894.0 704.6 L896.0 699.3 L898.0 693.9" stroke="#6042a6" stroke-opacity="0.7" stroke-width="3.1" fill="none" stroke-linejoin="round" stroke-linecap="round"/>
<circle cx="563.3" cy="238.8" r="5.6" fill="#fa7e19" fill-opacity="0.95"/>
</svg>
<div class="shadow"></div>
</div>
<svg width="0" height="0" style="position:absolute"><defs><clipPath id="icl"><circle cx="18.5" cy="18.5" r="18.2"/></clipPath></defs></svg>
<div id="panel">
 <div id="hdr">
  <div class="btn" style="left:10px;width:68.5px">
   <svg width="68" height="44" style="position:absolute;left:-1px;top:-1px" viewBox="0 0 68 44"><path d="M25 12.1V34.5M13.600 23.300H36.400" stroke="#666" stroke-width="4.700" stroke-linecap="butt" fill="none"/><path d="M40.100 21h12.900l-6.450 8z" fill="#666"/></svg>
  </div>
  <svg width="80" height="24" viewBox="300 12 80 24" style="position:absolute;left:299px;top:12px"><path d="M305.1 19.9V31.300Q305.100 32.100 305.900 32.100H318L313.800 27.700C317 24.300 321 21.800 325 21.400C328 21.100 330.800 21.700 332.900 22.700C330 19.500 326 17 322 16.900C317 16.900 312.500 19.500 309.200 23.600Z" fill="#666"/><path d="M305.1 19.9V31.300Q305.100 32.100 305.900 32.100H318L313.800 27.700C317 24.300 321 21.800 325 21.400C328 21.100 330.800 21.700 332.900 22.700C330 19.500 326 17 322 16.900C317 16.900 312.500 19.500 309.200 23.600Z" fill="#d0d0d0" transform="translate(678.1 0) scale(-1 1)"/></svg>
  <div class="btn" style="left:599px;width:69px">
   <svg width="28" height="28" viewBox="-14 -14 28 28" style="position:absolute;left:20px;top:8.5px"><g fill="#666">
    <circle r="8.8"/>
    <g id="tth"><rect x="-2.9" y="-12" width="5.8" height="24" rx="1"/></g>
    <rect x="-2.9" y="-12" width="5.8" height="24" rx="1" transform="rotate(45)"/>
    <rect x="-2.9" y="-12" width="5.8" height="24" rx="1" transform="rotate(90)"/>
    <rect x="-2.9" y="-12" width="5.8" height="24" rx="1" transform="rotate(135)"/>
    </g><circle r="4.600" fill="#f1f1f1"/></svg>
  </div>
  <svg width="24" height="24" viewBox="687 13 24 24" style="position:absolute;left:686px;top:13px"><path d="M698.600 16L691.800 25L698.600 34M706.700 16L699.900 25L706.700 34" stroke="#666" stroke-width="2.800" fill="none"/></svg>
 </div>
 <div id="list">
<div class="row" style="top:0.0px;height:81.3px"><div class="tab"><div class="num">1</div><svg class="ico" style="top:21.3px" viewBox="0 0 37 37"><circle cx="18.5" cy="18.5" r="18.2" fill="#fa7e19"/><path d="M-2.50 27.87 L-2.00 27.65 L-1.50 27.33 L-1.00 26.89 L-0.50 26.36 L0.00 25.74 L0.50 25.03 L1.00 24.25 L1.50 23.40 L2.00 22.49 L2.50 21.53 L3.00 20.54 L3.50 19.53 L4.00 18.50 L4.50 17.47 L5.00 16.46 L5.50 15.47 L6.00 14.51 L6.50 13.60 L7.00 12.75 L7.50 11.97 L8.00 11.26 L8.50 10.64 L9.00 10.11 L9.50 9.67 L10.00 9.35 L10.50 9.13 L11.00 9.01 L11.50 9.01 L12.00 9.13 L12.50 9.35 L13.00 9.67 L13.50 10.11 L14.00 10.64 L14.50 11.26 L15.00 11.97 L15.50 12.75 L16.00 13.60 L16.50 14.51 L17.00 15.47 L17.50 16.46 L18.00 17.47 L18.50 18.50 L19.00 19.53 L19.50 20.54 L20.00 21.53 L20.50 22.49 L21.00 23.40 L21.50 24.25 L22.00 25.03 L22.50 25.74 L23.00 26.36 L23.50 26.89 L24.00 27.33 L24.50 27.65 L25.00 27.87 L25.50 27.99 L26.00 27.99 L26.50 27.87 L27.00 27.65 L27.50 27.33 L28.00 26.89 L28.50 26.36 L29.00 25.74 L29.50 25.03 L30.00 24.25 L30.50 23.40 L31.00 22.49 L31.50 21.53 L32.00 20.54 L32.50 19.53 L33.00 18.50 L33.50 17.47 L34.00 16.46 L34.50 15.47 L35.00 14.51 L35.50 13.60 L36.00 12.75 L36.50 11.97 L37.00 11.26 L37.50 10.64 L38.00 10.11 L38.50 9.67 L39.00 9.35 L39.50 9.13" stroke="#fff" stroke-width="4.6" fill="none" clip-path="url(#icl)"/></svg></div><svg class="x" style="top:9.1px" viewBox="0 0 24 24"><path d="M3.300 3.300L20.700 20.700M20.700 3.300L3.300 20.700" stroke="#cbcbcb" stroke-width="4.100" stroke-linecap="round" fill="none"/></svg></div>
<div class="row" style="top:81.3px;height:81.1px"><div class="tab"><div class="num">2</div><svg class="ico" style="top:20.8px" viewBox="0 0 37 37"><circle cx="18.5" cy="18.5" r="18.2" fill="#2d70b3"/><path d="M-2.50 27.87 L-2.00 27.65 L-1.50 27.33 L-1.00 26.89 L-0.50 26.36 L0.00 25.74 L0.50 25.03 L1.00 24.25 L1.50 23.40 L2.00 22.49 L2.50 21.53 L3.00 20.54 L3.50 19.53 L4.00 18.50 L4.50 17.47 L5.00 16.46 L5.50 15.47 L6.00 14.51 L6.50 13.60 L7.00 12.75 L7.50 11.97 L8.00 11.26 L8.50 10.64 L9.00 10.11 L9.50 9.67 L10.00 9.35 L10.50 9.13 L11.00 9.01 L11.50 9.01 L12.00 9.13 L12.50 9.35 L13.00 9.67 L13.50 10.11 L14.00 10.64 L14.50 11.26 L15.00 11.97 L15.50 12.75 L16.00 13.60 L16.50 14.51 L17.00 15.47 L17.50 16.46 L18.00 17.47 L18.50 18.50 L19.00 19.53 L19.50 20.54 L20.00 21.53 L20.50 22.49 L21.00 23.40 L21.50 24.25 L22.00 25.03 L22.50 25.74 L23.00 26.36 L23.50 26.89 L24.00 27.33 L24.50 27.65 L25.00 27.87 L25.50 27.99 L26.00 27.99 L26.50 27.87 L27.00 27.65 L27.50 27.33 L28.00 26.89 L28.50 26.36 L29.00 25.74 L29.50 25.03 L30.00 24.25 L30.50 23.40 L31.00 22.49 L31.50 21.53 L32.00 20.54 L32.50 19.53 L33.00 18.50 L33.50 17.47 L34.00 16.46 L34.50 15.47 L35.00 14.51 L35.50 13.60 L36.00 12.75 L36.50 11.97 L37.00 11.26 L37.50 10.64 L38.00 10.11 L38.50 9.67 L39.00 9.35 L39.50 9.13" stroke="#fff" stroke-width="4.6" fill="none" clip-path="url(#icl)"/></svg></div><svg class="x" style="top:9.1px" viewBox="0 0 24 24"><path d="M3.300 3.300L20.700 20.700M20.700 3.300L3.300 20.700" stroke="#cbcbcb" stroke-width="4.100" stroke-linecap="round" fill="none"/></svg></div>
<div class="row" style="top:162.4px;height:80.8px"><div class="tab"><div class="num">3</div><svg class="ico" style="top:20.6px" viewBox="0 0 37 37"><circle cx="18.5" cy="18.5" r="18.2" fill="#388c46"/><path d="M-2.50 27.87 L-2.00 27.65 L-1.50 27.33 L-1.00 26.89 L-0.50 26.36 L0.00 25.74 L0.50 25.03 L1.00 24.25 L1.50 23.40 L2.00 22.49 L2.50 21.53 L3.00 20.54 L3.50 19.53 L4.00 18.50 L4.50 17.47 L5.00 16.46 L5.50 15.47 L6.00 14.51 L6.50 13.60 L7.00 12.75 L7.50 11.97 L8.00 11.26 L8.50 10.64 L9.00 10.11 L9.50 9.67 L10.00 9.35 L10.50 9.13 L11.00 9.01 L11.50 9.01 L12.00 9.13 L12.50 9.35 L13.00 9.67 L13.50 10.11 L14.00 10.64 L14.50 11.26 L15.00 11.97 L15.50 12.75 L16.00 13.60 L16.50 14.51 L17.00 15.47 L17.50 16.46 L18.00 17.47 L18.50 18.50 L19.00 19.53 L19.50 20.54 L20.00 21.53 L20.50 22.49 L21.00 23.40 L21.50 24.25 L22.00 25.03 L22.50 25.74 L23.00 26.36 L23.50 26.89 L24.00 27.33 L24.50 27.65 L25.00 27.87 L25.50 27.99 L26.00 27.99 L26.50 27.87 L27.00 27.65 L27.50 27.33 L28.00 26.89 L28.50 26.36 L29.00 25.74 L29.50 25.03 L30.00 24.25 L30.50 23.40 L31.00 22.49 L31.50 21.53 L32.00 20.54 L32.50 19.53 L33.00 18.50 L33.50 17.47 L34.00 16.46 L34.50 15.47 L35.00 14.51 L35.50 13.60 L36.00 12.75 L36.50 11.97 L37.00 11.26 L37.50 10.64 L38.00 10.11 L38.50 9.67 L39.00 9.35 L39.50 9.13" stroke="#fff" stroke-width="4.6" fill="none" clip-path="url(#icl)"/></svg></div><svg class="x" style="top:9.1px" viewBox="0 0 24 24"><path d="M3.300 3.300L20.700 20.700M20.700 3.300L3.300 20.700" stroke="#cbcbcb" stroke-width="4.100" stroke-linecap="round" fill="none"/></svg></div>
<div class="row" style="top:243.2px;height:104.7px"><div class="tab"><div class="num">4</div><svg class="ico" style="top:32.5px" viewBox="0 0 37 37"><circle cx="18.5" cy="18.5" r="18.2" fill="#6042a6"/><path d="M-2.50 27.87 L-2.00 27.65 L-1.50 27.33 L-1.00 26.89 L-0.50 26.36 L0.00 25.74 L0.50 25.03 L1.00 24.25 L1.50 23.40 L2.00 22.49 L2.50 21.53 L3.00 20.54 L3.50 19.53 L4.00 18.50 L4.50 17.47 L5.00 16.46 L5.50 15.47 L6.00 14.51 L6.50 13.60 L7.00 12.75 L7.50 11.97 L8.00 11.26 L8.50 10.64 L9.00 10.11 L9.50 9.67 L10.00 9.35 L10.50 9.13 L11.00 9.01 L11.50 9.01 L12.00 9.13 L12.50 9.35 L13.00 9.67 L13.50 10.11 L14.00 10.64 L14.50 11.26 L15.00 11.97 L15.50 12.75 L16.00 13.60 L16.50 14.51 L17.00 15.47 L17.50 16.46 L18.00 17.47 L18.50 18.50 L19.00 19.53 L19.50 20.54 L20.00 21.53 L20.50 22.49 L21.00 23.40 L21.50 24.25 L22.00 25.03 L22.50 25.74 L23.00 26.36 L23.50 26.89 L24.00 27.33 L24.50 27.65 L25.00 27.87 L25.50 27.99 L26.00 27.99 L26.50 27.87 L27.00 27.65 L27.50 27.33 L28.00 26.89 L28.50 26.36 L29.00 25.74 L29.50 25.03 L30.00 24.25 L30.50 23.40 L31.00 22.49 L31.50 21.53 L32.00 20.54 L32.50 19.53 L33.00 18.50 L33.50 17.47 L34.00 16.46 L34.50 15.47 L35.00 14.51 L35.50 13.60 L36.00 12.75 L36.50 11.97 L37.00 11.26 L37.50 10.64 L38.00 10.11 L38.50 9.67 L39.00 9.35 L39.50 9.13" stroke="#fff" stroke-width="4.6" fill="none" clip-path="url(#icl)"/></svg></div><svg class="x" style="top:9.1px" viewBox="0 0 24 24"><path d="M3.300 3.300L20.700 20.700M20.700 3.300L3.300 20.700" stroke="#cbcbcb" stroke-width="4.100" stroke-linecap="round" fill="none"/></svg><div class="badge" style="left:621.0px;top:63.6px;width:86.3px"><div class="lbl" style="width:48.7px"><i style="margin-left:10.5px">y</i><span style="margin-left:6.5px">=</span></div><div class="val" style="left:48.7px">1</div></div></div>
<div class="row" style="top:347.9px;height:106.0px"><div class="tab"><div class="num">5</div><svg class="ico" style="top:33.2px" viewBox="0 0 37 37"><circle cx="18.5" cy="18.5" r="18.2" fill="#c74440"/><path d="M-2.50 27.87 L-2.00 27.65 L-1.50 27.33 L-1.00 26.89 L-0.50 26.36 L0.00 25.74 L0.50 25.03 L1.00 24.25 L1.50 23.40 L2.00 22.49 L2.50 21.53 L3.00 20.54 L3.50 19.53 L4.00 18.50 L4.50 17.47 L5.00 16.46 L5.50 15.47 L6.00 14.51 L6.50 13.60 L7.00 12.75 L7.50 11.97 L8.00 11.26 L8.50 10.64 L9.00 10.11 L9.50 9.67 L10.00 9.35 L10.50 9.13 L11.00 9.01 L11.50 9.01 L12.00 9.13 L12.50 9.35 L13.00 9.67 L13.50 10.11 L14.00 10.64 L14.50 11.26 L15.00 11.97 L15.50 12.75 L16.00 13.60 L16.50 14.51 L17.00 15.47 L17.50 16.46 L18.00 17.47 L18.50 18.50 L19.00 19.53 L19.50 20.54 L20.00 21.53 L20.50 22.49 L21.00 23.40 L21.50 24.25 L22.00 25.03 L22.50 25.74 L23.00 26.36 L23.50 26.89 L24.00 27.33 L24.50 27.65 L25.00 27.87 L25.50 27.99 L26.00 27.99 L26.50 27.87 L27.00 27.65 L27.50 27.33 L28.00 26.89 L28.50 26.36 L29.00 25.74 L29.50 25.03 L30.00 24.25 L30.50 23.40 L31.00 22.49 L31.50 21.53 L32.00 20.54 L32.50 19.53 L33.00 18.50 L33.50 17.47 L34.00 16.46 L34.50 15.47 L35.00 14.51 L35.50 13.60 L36.00 12.75 L36.50 11.97 L37.00 11.26 L37.50 10.64 L38.00 10.11 L38.50 9.67 L39.00 9.35 L39.50 9.13" stroke="#fff" stroke-width="4.6" fill="none" clip-path="url(#icl)"/></svg></div><svg class="x" style="top:9.1px" viewBox="0 0 24 24"><path d="M3.300 3.300L20.700 20.700M20.700 3.300L3.300 20.700" stroke="#cbcbcb" stroke-width="4.100" stroke-linecap="round" fill="none"/></svg><div class="badge" style="left:606.4px;top:64.1px;width:100.9px"><div class="lbl" style="width:48.3px"><i style="margin-left:10.5px">y</i><span style="margin-left:6.5px">=</span></div><div class="val" style="left:48.3px">1.1</div></div></div>
<div class="row" style="top:453.9px;height:104.9px"><div class="tab"><div class="num">6</div><svg class="ico" style="top:32.6px" viewBox="0 0 37 37"><circle cx="18.5" cy="18.5" r="18.2" fill="#2d70b3"/><path d="M-2.50 27.87 L-2.00 27.65 L-1.50 27.33 L-1.00 26.89 L-0.50 26.36 L0.00 25.74 L0.50 25.03 L1.00 24.25 L1.50 23.40 L2.00 22.49 L2.50 21.53 L3.00 20.54 L3.50 19.53 L4.00 18.50 L4.50 17.47 L5.00 16.46 L5.50 15.47 L6.00 14.51 L6.50 13.60 L7.00 12.75 L7.50 11.97 L8.00 11.26 L8.50 10.64 L9.00 10.11 L9.50 9.67 L10.00 9.35 L10.50 9.13 L11.00 9.01 L11.50 9.01 L12.00 9.13 L12.50 9.35 L13.00 9.67 L13.50 10.11 L14.00 10.64 L14.50 11.26 L15.00 11.97 L15.50 12.75 L16.00 13.60 L16.50 14.51 L17.00 15.47 L17.50 16.46 L18.00 17.47 L18.50 18.50 L19.00 19.53 L19.50 20.54 L20.00 21.53 L20.50 22.49 L21.00 23.40 L21.50 24.25 L22.00 25.03 L22.50 25.74 L23.00 26.36 L23.50 26.89 L24.00 27.33 L24.50 27.65 L25.00 27.87 L25.50 27.99 L26.00 27.99 L26.50 27.87 L27.00 27.65 L27.50 27.33 L28.00 26.89 L28.50 26.36 L29.00 25.74 L29.50 25.03 L30.00 24.25 L30.50 23.40 L31.00 22.49 L31.50 21.53 L32.00 20.54 L32.50 19.53 L33.00 18.50 L33.50 17.47 L34.00 16.46 L34.50 15.47 L35.00 14.51 L35.50 13.60 L36.00 12.75 L36.50 11.97 L37.00 11.26 L37.50 10.64 L38.00 10.11 L38.50 9.67 L39.00 9.35 L39.50 9.13" stroke="#fff" stroke-width="4.6" fill="none" clip-path="url(#icl)"/></svg></div><svg class="x" style="top:9.1px" viewBox="0 0 24 24"><path d="M3.300 3.300L20.700 20.700M20.700 3.300L3.300 20.700" stroke="#cbcbcb" stroke-width="4.100" stroke-linecap="round" fill="none"/></svg><div class="badge" style="left:606.4px;top:63.6px;width:100.9px"><div class="lbl" style="width:48.3px"><i style="margin-left:10.5px">y</i><span style="margin-left:6.5px">=</span></div><div class="val" style="left:48.3px">0.9</div></div></div>
<div class="row" style="top:558.8px;height:107.9px"><div class="tab"><div class="num">7</div><svg class="ico" style="top:34.1px" viewBox="0 0 37 37"><circle cx="18.5" cy="18.5" r="17.300" fill="none" stroke="#8c8c8c" stroke-width="1.900"/><path d="M14.600 12.500v12l11.800-6z" fill="#8e8e8e"/></svg></div><svg class="x" style="top:9.4px" viewBox="0 0 24 24"><path d="M3.300 3.300L20.700 20.700M20.700 3.300L3.300 20.700" stroke="#cbcbcb" stroke-width="4.100" stroke-linecap="round" fill="none"/></svg><div class="sl" style="left:60px;top:71.1px">−10</div><div class="sl" style="left:683px;top:71.1px">10</div><div class="track" style="top:74.8px"></div><div style="position:absolute;left:385.200px;top:76.6px;width:1.800px;height:3.700px;background:#a4a4a4"></div><div class="thumb" style="left:399.3px;top:65.2px"></div></div>
<div class="row" style="top:666.7px;height:109.3px"><div class="tab"><div class="num">8</div><svg class="ico" style="top:34.4px" viewBox="0 0 37 37"><circle cx="18.5" cy="18.5" r="17.300" fill="none" stroke="#8c8c8c" stroke-width="1.900"/><path d="M14.600 12.500v12l11.800-6z" fill="#8e8e8e"/></svg></div><svg class="x" style="top:9.4px" viewBox="0 0 24 24"><path d="M3.300 3.300L20.700 20.700M20.700 3.300L3.300 20.700" stroke="#cbcbcb" stroke-width="4.100" stroke-linecap="round" fill="none"/></svg><div class="sl" style="left:60px;top:71.6px">−10</div><div class="sl" style="left:683px;top:71.6px">10</div><div class="track" style="top:75.2px"></div><div style="position:absolute;left:385.200px;top:77.1px;width:1.800px;height:3.700px;background:#a4a4a4"></div><div class="thumb" style="left:374.0px;top:65.7px"></div></div>
<svg class="math" width="715" height="772" viewBox="0 0 715 772">
<text class="v" x="68.80" y="45.00">y</text><text class="eq" transform="translate(91.50 43.50) scale(1.50 1)">=</text><text class="v" x="122.35" y="45.00">c</text><text class="sb" x="133.25" y="52.60">0</text><text class="op" x="154.85" y="48.15">+</text><text class="v" x="185.05" y="45.00">c</text><text class="sb" x="195.75" y="52.60">1</text><text class="n" transform="translate(216.90 45.00) scale(1 1.06)">cos</text><text class="par" transform="translate(251.28 52.15) scale(0.89 1)">(</text><text class="n" x="264.50" y="45.00">2</text><text class="pi" x="284.60" y="45.00">π</text><text class="v" x="296.80" y="45.00">w</text><text class="sb" x="313.45" y="52.60">0</text><text class="v" x="328.15" y="45.00">x</text><text class="op" x="352.05" y="48.15">+</text><text class="v" x="382.35" y="45.00">a</text><text class="sb" x="395.05" y="52.60">0</text><text class="par" transform="translate(406.63 52.15) scale(0.89 1)">)</text><text class="n" transform="translate(428.90 45.00) scale(1 1.06)">cos</text><text class="par" transform="translate(463.38 52.15) scale(0.89 1)">(</text><text class="n" x="476.70" y="45.00">2</text><text class="pi" x="495.70" y="45.00">π</text><text class="v" x="514.50" y="45.00">w</text><text class="sb" x="531.35" y="52.60">1</text><text class="v" x="546.95" y="45.00">x</text><text class="op" x="570.95" y="48.15">+</text><text class="v" x="594.35" y="45.00">a</text><text class="sb" x="607.05" y="52.60">1</text><text class="par" transform="translate(619.63 52.15) scale(0.89 1)">)</text>
<text class="v" x="68.80" y="124.20">y</text><text class="eq" transform="translate(91.50 124.75) scale(1.50 1)">=</text><text class="v" x="122.35" y="124.20">c</text><text class="sb" x="133.25" y="133.70">0</text><text class="op" x="154.85" y="129.10">+</text><text class="v" x="185.05" y="124.20">c</text><text class="sb" x="195.75" y="133.70">1</text><text class="n" transform="translate(216.90 124.20) scale(1 1.06)">cos</text><text class="par" transform="translate(251.28 131.35) scale(0.89 1)">(</text><text class="n" x="264.50" y="124.20">2</text><text class="pi" x="284.60" y="124.20">π</text><text class="v" x="296.80" y="124.20">w</text><text class="sb" x="313.45" y="133.70">0</text><text class="v" x="328.15" y="124.20">x</text><text class="op" x="352.05" y="129.10">+</text><text class="v" x="382.35" y="124.20">a</text><text class="sb" x="395.05" y="133.70">0</text><text class="par" transform="translate(406.63 131.35) scale(0.89 1)">)</text><text class="n" transform="translate(428.90 124.20) scale(1 1.06)">cos</text><text class="par" transform="translate(463.38 131.35) scale(0.89 1)">(</text><text class="n" x="476.70" y="124.20">2</text><text class="pi" x="495.70" y="124.20">π</text><text class="v" x="514.50" y="124.20">w</text><text class="sb" x="531.35" y="133.70">1</text><text class="v" x="546.95" y="124.20">x</text><text class="op" x="570.95" y="129.10">+</text><text class="v" x="594.35" y="124.20">a</text><text class="sb" x="607.05" y="133.70">1</text><text class="par" transform="translate(619.63 131.35) scale(0.89 1)">)</text>
<text class="v" x="68.80" y="205.20">y</text><text class="eq" transform="translate(91.50 205.90) scale(1.50 1)">=</text><text class="v" x="122.35" y="205.20">c</text><text class="sb" x="133.25" y="214.70">0</text><text class="op" x="154.85" y="210.15">+</text><text class="v" x="185.05" y="205.20">c</text><text class="sb" x="195.75" y="214.70">1</text><text class="n" transform="translate(216.90 205.20) scale(1 1.06)">cos</text><text class="par" transform="translate(251.28 212.35) scale(0.89 1)">(</text><text class="n" x="264.50" y="205.20">2</text><text class="pi" x="284.60" y="205.20">π</text><text class="v" x="296.80" y="205.20">w</text><text class="sb" x="313.45" y="214.70">0</text><text class="v" x="328.15" y="205.20">x</text><text class="op" x="352.05" y="210.15">+</text><text class="v" x="382.35" y="205.20">a</text><text class="sb" x="395.05" y="214.70">0</text><text class="par" transform="translate(406.63 212.35) scale(0.89 1)">)</text>
<text class="v" x="68.80" y="284.00">y</text><text class="eq" transform="translate(91.50 283.55) scale(1.50 1)">=</text><text class="v" x="122.35" y="284.00">c</text><text class="sb" x="133.25" y="293.70">0</text>
<text class="v" x="68.80" y="389.00">y</text><text class="eq" transform="translate(91.50 388.45) scale(1.50 1)">=</text><text class="v" x="122.35" y="389.00">c</text><text class="sb" x="133.25" y="398.70">0</text><text class="op" x="154.85" y="393.20">+</text><text class="v" x="185.05" y="389.00">c</text><text class="sb" x="195.75" y="398.70">1</text>
<text class="v" x="68.80" y="495.00">y</text><text class="eq" transform="translate(91.50 494.55) scale(1.50 1)">=</text><text class="v" x="122.35" y="495.00">c</text><text class="sb" x="133.25" y="503.70">0</text><text class="op" x="154.65" y="498.60">−</text><text class="v" x="185.05" y="495.00">c</text><text class="sb" x="195.75" y="503.70">1</text>
<text class="v" x="68.45" y="599.80">c</text><text class="sb" x="79.25" y="609.60">0</text><text class="eq" transform="translate(94.40 599.80) scale(1.50 1)">=</text><text class="n" x="118.55" y="599.80">1</text>
<text class="v" x="68.45" y="709.00">c</text><text class="sb" x="79.25" y="717.00">1</text><text class="eq" transform="translate(94.40 708.55) scale(1.50 1)">=</text><text class="n" x="118.80" y="709.00">0.1</text>
</svg>
 </div>
 <div id="sbar">
  <svg width="14" height="12" viewBox="0 0 14 12" style="position:absolute;left:0.8px;top:4.4px"><path d="M2 7.400h8.600l-4.300-5.300z" fill="#8c8c8c" stroke="#8c8c8c" stroke-width="1" stroke-linejoin="round"/></svg>
  <div style="position:absolute;left:1.8px;top:18.4px;width:9.200px;height:375.600px;border-radius:4.600px;background:#8c8c8c"></div>
 </div>
 <div id="kbd">
  <svg width="96" height="36" viewBox="0 0 96 36" style="position:absolute;left:-1px;top:-1px">
   <rect x="20.700" y="13.700" width="31.400" height="19.200" rx="2.600" fill="none" stroke="#666" stroke-width="2.400"/>
   <path d="M24.960 17.200h3v3h-3zM30 17.200h3v3h-3zM35.100 17.200h3v3h-3zM40.100 17.200h3v3h-3zM45.200 17.200h3v3h-3zM27.900 22.500h3.100v2.900h-3.100zM33 22.500h3.100v2.900h-3.100zM38.100 22.500h3.100v2.900h-3.100zM43.200 22.500h3.100v2.900h-3.100zM30.100 27.550h14.100v2.600h-14.100z" fill="#666"/>
   <path d="M64.100 30h15.100l-7.550-8.700z" fill="#666"/>
  </svg>
 </div>
</div>
</div>
</body></html>
